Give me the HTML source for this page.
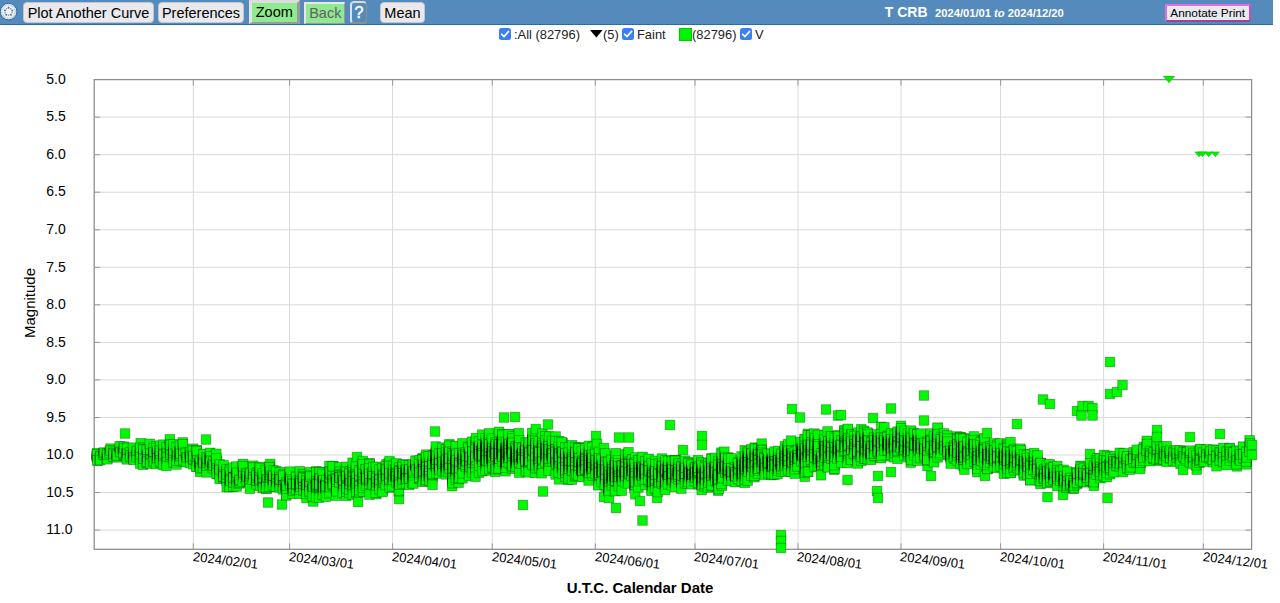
<!DOCTYPE html>
<html><head><meta charset="utf-8">
<style>
html,body{margin:0;padding:0;background:#fff;width:1280px;height:603px;overflow:hidden;font-family:"Liberation Sans",sans-serif;position:relative}
#hdr{position:absolute;left:0;top:0;width:1273px;height:24px;background:#558bbc;border-bottom:1px solid #2070b0}
.btn{position:absolute;top:2px;height:19px;background:#e9e9ed;border:1px solid #c5c5ca;border-radius:4px;font-size:14.5px;line-height:20.5px;color:#000;text-align:center;white-space:nowrap}
.yl{position:absolute;left:46.3px;font-size:14px;line-height:17px;color:#000}
.xl{position:absolute;top:548.5px;font-size:13.1px;line-height:15px;color:#000;transform:rotate(7deg);transform-origin:0 0;white-space:nowrap}
#plot{position:absolute;left:0;top:0}
#m path{fill:rgba(0,0,0,0.9);stroke:none}
#m rect{width:9.6px;height:9.6px;fill:#00fa00;stroke:rgba(0,0,0,0.35);stroke-width:0.8}
.lg{position:absolute;top:27px;font-size:12.9px;line-height:15px;color:#222;white-space:nowrap}
.cb{position:absolute;top:28.3px;width:12px;height:12px}
.cb svg{display:block}
</style></head><body>
<div id="hdr"></div>
<svg style="position:absolute;left:0;top:3px" width="18" height="18" viewBox="0 0 18 18"><circle cx="8.6" cy="8.6" r="8.3" fill="#f2f5f8" stroke="#2f66a0" stroke-width="1"/><circle cx="8.6" cy="8.6" r="6.6" fill="none" stroke="#a8c0d8" stroke-width="1.4" stroke-dasharray="0.9 0.7"/><ellipse cx="8.60" cy="4.70" rx="1" ry="1" fill="#3f78b0"/><circle cx="10.72" cy="5.69" r="0.8" fill="#9a8a7a"/><ellipse cx="12.31" cy="7.39" rx="1" ry="1" fill="#3f78b0"/><circle cx="12.02" cy="9.71" r="0.8" fill="#9a8a7a"/><ellipse cx="10.89" cy="11.76" rx="1" ry="1" fill="#3f78b0"/><circle cx="8.60" cy="12.20" r="0.8" fill="#9a8a7a"/><ellipse cx="6.31" cy="11.76" rx="1" ry="1" fill="#3f78b0"/><circle cx="5.18" cy="9.71" r="0.8" fill="#9a8a7a"/><ellipse cx="4.89" cy="7.39" rx="1" ry="1" fill="#3f78b0"/><circle cx="6.48" cy="5.69" r="0.8" fill="#9a8a7a"/></svg>
<div class="btn" style="left:23px;top:2px;width:129px">Plot Another Curve</div>
<div class="btn" style="left:158px;width:84px">Preferences</div>
<div class="btn" style="left:249px;top:0;height:18.5px;width:44.6px;border-radius:0;background:#8eea8e;border-style:solid;border-width:3.5px 3px 2.8px 3.5px;border-color:#dcdcdc #9a9a9a #9a9a9a #e4e4e4;line-height:19.1px">Zoom</div>
<div class="btn" style="left:303.8px;top:1.7px;height:19.7px;width:38.5px;border-radius:0;background:#8eea8e;color:#6a5a6a;border-style:solid;border-width:2px 1.4px 1.4px 2px;border-color:#e8e8e8 #9a9a9a #9a9a9a #e8e8e8;line-height:19.5px;text-indent:0.5px">Back</div>
<div class="btn" style="left:349.7px;top:0.5px;height:19px;width:14.5px;border-radius:4px;background:#558bbc;color:#fff;border-style:solid;border-width:2px 1.7px 2px 2.3px;border-color:#d8d8d8 #8f8f8f #8f8f8f #e0e0e0;line-height:19.5px;font-weight:normal;font-size:16px;-webkit-text-stroke:0.5px #fff">?</div>
<div class="btn" style="left:380px;width:43px">Mean</div>
<div style="position:absolute;left:884.8px;top:4.3px;color:#fff;font-weight:bold;font-size:14px;line-height:17px;white-space:nowrap">T CRB</div>
<div style="position:absolute;left:935px;top:6.4px;color:#fff;font-weight:bold;font-size:11.2px;line-height:14px;white-space:nowrap">2024/01/01 <i>to</i> 2024/12/20</div>
<div class="btn" style="left:1165px;top:3.8px;height:14.1px;width:81.5px;border-radius:0;border:2px solid #e070e0;border-bottom-color:#a040a0;border-right-color:#c050c0;font-size:11.8px;line-height:15px">Annotate Print</div>
<div class="cb" style="left:499px"><svg width="12" height="12" viewBox="0 0 12 12"><rect x="0" y="0" width="12" height="12" rx="2.5" fill="#3b7ff5"/><path d="M2.6 6.2L5 8.6L9.6 3.4" fill="none" stroke="#fff" stroke-width="1.6" stroke-linecap="round" stroke-linejoin="round"/></svg></div>
<div class="lg" style="left:514px">:All (82796)</div>
<svg style="position:absolute;left:590px;top:30px" width="13" height="8"><path d="M0 0H12.6L6.3 7.5Z" fill="#000"/></svg>
<div class="lg" style="left:603px">(5)</div>
<div class="cb" style="left:622px"><svg width="12" height="12" viewBox="0 0 12 12"><rect x="0" y="0" width="12" height="12" rx="2.5" fill="#3b7ff5"/><path d="M2.6 6.2L5 8.6L9.6 3.4" fill="none" stroke="#fff" stroke-width="1.6" stroke-linecap="round" stroke-linejoin="round"/></svg></div>
<div class="lg" style="left:637px">Faint</div>
<div style="position:absolute;left:679px;top:28px;width:13.2px;height:12.6px;background:#00f400;box-shadow:inset 0 0 0 0.6px rgba(0,0,0,0.3)"></div>
<div class="lg" style="left:692px">(82796)</div>
<div class="cb" style="left:740px"><svg width="12" height="12" viewBox="0 0 12 12"><rect x="0" y="0" width="12" height="12" rx="2.5" fill="#3b7ff5"/><path d="M2.6 6.2L5 8.6L9.6 3.4" fill="none" stroke="#fff" stroke-width="1.6" stroke-linecap="round" stroke-linejoin="round"/></svg></div>
<div class="lg" style="left:755px">V</div>
<svg id="plot" width="1280" height="603">
<line x1="94.2" y1="117.1" x2="1251.6" y2="117.1" stroke="#dadada"/>
<line x1="94.2" y1="154.7" x2="1251.6" y2="154.7" stroke="#dadada"/>
<line x1="94.2" y1="192.2" x2="1251.6" y2="192.2" stroke="#dadada"/>
<line x1="94.2" y1="229.8" x2="1251.6" y2="229.8" stroke="#dadada"/>
<line x1="94.2" y1="267.3" x2="1251.6" y2="267.3" stroke="#dadada"/>
<line x1="94.2" y1="304.8" x2="1251.6" y2="304.8" stroke="#dadada"/>
<line x1="94.2" y1="342.4" x2="1251.6" y2="342.4" stroke="#dadada"/>
<line x1="94.2" y1="379.9" x2="1251.6" y2="379.9" stroke="#dadada"/>
<line x1="94.2" y1="417.5" x2="1251.6" y2="417.5" stroke="#dadada"/>
<line x1="94.2" y1="455.0" x2="1251.6" y2="455.0" stroke="#dadada"/>
<line x1="94.2" y1="492.5" x2="1251.6" y2="492.5" stroke="#dadada"/>
<line x1="94.2" y1="530.1" x2="1251.6" y2="530.1" stroke="#dadada"/>
<line x1="193.3" y1="79.6" x2="193.3" y2="549.3" stroke="#dadada"/>
<line x1="289.6" y1="79.6" x2="289.6" y2="549.3" stroke="#dadada"/>
<line x1="392.6" y1="79.6" x2="392.6" y2="549.3" stroke="#dadada"/>
<line x1="492.3" y1="79.6" x2="492.3" y2="549.3" stroke="#dadada"/>
<line x1="595.3" y1="79.6" x2="595.3" y2="549.3" stroke="#dadada"/>
<line x1="695.0" y1="79.6" x2="695.0" y2="549.3" stroke="#dadada"/>
<line x1="798.0" y1="79.6" x2="798.0" y2="549.3" stroke="#dadada"/>
<line x1="901.0" y1="79.6" x2="901.0" y2="549.3" stroke="#dadada"/>
<line x1="1000.6" y1="79.6" x2="1000.6" y2="549.3" stroke="#dadada"/>
<line x1="1103.6" y1="79.6" x2="1103.6" y2="549.3" stroke="#dadada"/>
<line x1="1203.3" y1="79.6" x2="1203.3" y2="549.3" stroke="#dadada"/>
<line x1="94.2" y1="117.1" x2="100.2" y2="117.1" stroke="#999"/>
<line x1="1245.6" y1="117.1" x2="1251.6" y2="117.1" stroke="#999"/>
<line x1="94.2" y1="154.7" x2="100.2" y2="154.7" stroke="#999"/>
<line x1="1245.6" y1="154.7" x2="1251.6" y2="154.7" stroke="#999"/>
<line x1="94.2" y1="192.2" x2="100.2" y2="192.2" stroke="#999"/>
<line x1="1245.6" y1="192.2" x2="1251.6" y2="192.2" stroke="#999"/>
<line x1="94.2" y1="229.8" x2="100.2" y2="229.8" stroke="#999"/>
<line x1="1245.6" y1="229.8" x2="1251.6" y2="229.8" stroke="#999"/>
<line x1="94.2" y1="267.3" x2="100.2" y2="267.3" stroke="#999"/>
<line x1="1245.6" y1="267.3" x2="1251.6" y2="267.3" stroke="#999"/>
<line x1="94.2" y1="304.8" x2="100.2" y2="304.8" stroke="#999"/>
<line x1="1245.6" y1="304.8" x2="1251.6" y2="304.8" stroke="#999"/>
<line x1="94.2" y1="342.4" x2="100.2" y2="342.4" stroke="#999"/>
<line x1="1245.6" y1="342.4" x2="1251.6" y2="342.4" stroke="#999"/>
<line x1="94.2" y1="379.9" x2="100.2" y2="379.9" stroke="#999"/>
<line x1="1245.6" y1="379.9" x2="1251.6" y2="379.9" stroke="#999"/>
<line x1="94.2" y1="417.5" x2="100.2" y2="417.5" stroke="#999"/>
<line x1="1245.6" y1="417.5" x2="1251.6" y2="417.5" stroke="#999"/>
<line x1="94.2" y1="455.0" x2="100.2" y2="455.0" stroke="#999"/>
<line x1="1245.6" y1="455.0" x2="1251.6" y2="455.0" stroke="#999"/>
<line x1="94.2" y1="492.5" x2="100.2" y2="492.5" stroke="#999"/>
<line x1="1245.6" y1="492.5" x2="1251.6" y2="492.5" stroke="#999"/>
<line x1="94.2" y1="530.1" x2="100.2" y2="530.1" stroke="#999"/>
<line x1="1245.6" y1="530.1" x2="1251.6" y2="530.1" stroke="#999"/>
<line x1="193.3" y1="79.6" x2="193.3" y2="85.6" stroke="#999"/>
<line x1="193.3" y1="543.3" x2="193.3" y2="549.3" stroke="#999"/>
<line x1="289.6" y1="79.6" x2="289.6" y2="85.6" stroke="#999"/>
<line x1="289.6" y1="543.3" x2="289.6" y2="549.3" stroke="#999"/>
<line x1="392.6" y1="79.6" x2="392.6" y2="85.6" stroke="#999"/>
<line x1="392.6" y1="543.3" x2="392.6" y2="549.3" stroke="#999"/>
<line x1="492.3" y1="79.6" x2="492.3" y2="85.6" stroke="#999"/>
<line x1="492.3" y1="543.3" x2="492.3" y2="549.3" stroke="#999"/>
<line x1="595.3" y1="79.6" x2="595.3" y2="85.6" stroke="#999"/>
<line x1="595.3" y1="543.3" x2="595.3" y2="549.3" stroke="#999"/>
<line x1="695.0" y1="79.6" x2="695.0" y2="85.6" stroke="#999"/>
<line x1="695.0" y1="543.3" x2="695.0" y2="549.3" stroke="#999"/>
<line x1="798.0" y1="79.6" x2="798.0" y2="85.6" stroke="#999"/>
<line x1="798.0" y1="543.3" x2="798.0" y2="549.3" stroke="#999"/>
<line x1="901.0" y1="79.6" x2="901.0" y2="85.6" stroke="#999"/>
<line x1="901.0" y1="543.3" x2="901.0" y2="549.3" stroke="#999"/>
<line x1="1000.6" y1="79.6" x2="1000.6" y2="85.6" stroke="#999"/>
<line x1="1000.6" y1="543.3" x2="1000.6" y2="549.3" stroke="#999"/>
<line x1="1103.6" y1="79.6" x2="1103.6" y2="85.6" stroke="#999"/>
<line x1="1103.6" y1="543.3" x2="1103.6" y2="549.3" stroke="#999"/>
<line x1="1203.3" y1="79.6" x2="1203.3" y2="85.6" stroke="#999"/>
<line x1="1203.3" y1="543.3" x2="1203.3" y2="549.3" stroke="#999"/>
<rect x="94.2" y="79.6" width="1157.4" height="469.7" fill="none" stroke="#8f8f8f" stroke-width="1.3"/>
<g id="m"><rect x="92.2" y="448.4" width="9.6" height="9.6"/><rect x="91.8" y="450.7" width="9.6" height="9.6"/><rect x="92.2" y="452.5" width="9.6" height="9.6"/><rect x="92.3" y="449.4" width="9.6" height="9.6"/><rect x="92.9" y="456.0" width="9.6" height="9.6"/><rect x="92.6" y="455.3" width="9.6" height="9.6"/><path d="M91.8 452.2L91.95 454.3V459.5L91.8 461.7L91.65 459.5V454.3Z"/><path d="M91.8 453.9L91.94 455.1V458.0L91.8 459.2L91.66 458.0V455.1Z"/><rect x="95.5" y="453.8" width="9.6" height="9.6"/><rect x="95.0" y="453.5" width="9.6" height="9.6"/><rect x="95.6" y="451.2" width="9.6" height="9.6"/><rect x="95.4" y="454.0" width="9.6" height="9.6"/><rect x="95.6" y="451.9" width="9.6" height="9.6"/><rect x="95.2" y="455.3" width="9.6" height="9.6"/><path d="M95.5 455.0L95.62 456.4V459.8L95.5 461.1L95.35 459.8V456.4Z"/><path d="M95.5 455.4L95.61 456.7V459.8L95.5 461.1L95.36 459.8V456.7Z"/><rect x="98.8" y="448.8" width="9.6" height="9.6"/><rect x="99.2" y="448.3" width="9.6" height="9.6"/><rect x="99.0" y="449.7" width="9.6" height="9.6"/><rect x="98.4" y="448.2" width="9.6" height="9.6"/><rect x="98.9" y="450.1" width="9.6" height="9.6"/><rect x="99.4" y="447.8" width="9.6" height="9.6"/><path d="M98.8 451.6L99.00 452.6V455.0L98.8 455.9L98.63 455.0V452.6Z"/><path d="M98.8 451.6L98.99 452.6V455.0L98.8 455.9L98.64 455.0V452.6Z"/><rect x="103.0" y="450.3" width="9.6" height="9.6"/><rect x="102.1" y="448.7" width="9.6" height="9.6"/><rect x="102.2" y="452.3" width="9.6" height="9.6"/><rect x="102.0" y="454.0" width="9.6" height="9.6"/><rect x="102.6" y="454.5" width="9.6" height="9.6"/><rect x="102.3" y="449.9" width="9.6" height="9.6"/><path d="M102.5 452.5L102.73 454.3V458.6L102.5 460.3L102.28 458.6V454.3Z"/><path d="M102.5 453.3L102.72 454.6V458.0L102.5 459.4L102.29 458.0V454.6Z"/><rect x="105.7" y="446.1" width="9.6" height="9.6"/><rect x="105.8" y="443.8" width="9.6" height="9.6"/><rect x="105.3" y="448.1" width="9.6" height="9.6"/><rect x="105.0" y="446.5" width="9.6" height="9.6"/><rect x="104.9" y="448.4" width="9.6" height="9.6"/><rect x="105.6" y="445.7" width="9.6" height="9.6"/><path d="M105.8 447.6L106.05 449.1V452.7L105.8 454.2L105.65 452.7V449.1Z"/><path d="M105.8 449.2L106.03 450.3V453.1L105.8 454.2L105.66 453.1V450.3Z"/><rect x="108.8" y="452.4" width="9.6" height="9.6"/><rect x="108.7" y="449.6" width="9.6" height="9.6"/><rect x="108.5" y="446.9" width="9.6" height="9.6"/><rect x="108.8" y="451.7" width="9.6" height="9.6"/><rect x="109.0" y="448.2" width="9.6" height="9.6"/><rect x="108.8" y="449.0" width="9.6" height="9.6"/><path d="M108.8 450.7L108.97 452.4V456.5L108.8 458.2L108.67 456.5V452.4Z"/><path d="M108.8 451.4L108.96 452.7V455.8L108.8 457.1L108.68 455.8V452.7Z"/><rect x="111.6" y="450.2" width="9.6" height="9.6"/><rect x="112.1" y="452.5" width="9.6" height="9.6"/><rect x="112.1" y="450.8" width="9.6" height="9.6"/><rect x="111.8" y="450.0" width="9.6" height="9.6"/><rect x="112.0" y="449.3" width="9.6" height="9.6"/><rect x="112.4" y="450.7" width="9.6" height="9.6"/><path d="M111.7 453.1L111.92 454.3V457.2L111.7 458.3L111.52 457.2V454.3Z"/><path d="M111.7 453.1L111.91 454.3V457.2L111.7 458.3L111.53 457.2V454.3Z"/><rect x="115.7" y="444.4" width="9.6" height="9.6"/><rect x="115.5" y="442.0" width="9.6" height="9.6"/><rect x="115.4" y="443.5" width="9.6" height="9.6"/><rect x="115.1" y="445.4" width="9.6" height="9.6"/><rect x="114.9" y="441.5" width="9.6" height="9.6"/><rect x="115.5" y="447.2" width="9.6" height="9.6"/><path d="M115.0 445.3L115.17 447.1V451.3L115.0 453.0L114.85 451.3V447.1Z"/><path d="M115.0 446.9L115.16 448.3V451.6L115.0 453.0L114.86 451.6V448.3Z"/><rect x="119.3" y="449.8" width="9.6" height="9.6"/><rect x="119.2" y="445.3" width="9.6" height="9.6"/><rect x="118.8" y="441.8" width="9.6" height="9.6"/><rect x="118.9" y="449.2" width="9.6" height="9.6"/><rect x="118.6" y="448.1" width="9.6" height="9.6"/><rect x="119.5" y="443.3" width="9.6" height="9.6"/><path d="M118.1 445.6L118.34 447.8V453.4L118.1 455.6L117.85 453.4V447.8Z"/><path d="M118.1 446.4L118.33 448.5V453.6L118.1 455.6L117.86 453.6V448.5Z"/><rect x="120.2" y="428.7" width="9.6" height="9.6"/><rect x="121.9" y="453.6" width="9.6" height="9.6"/><rect x="122.3" y="445.5" width="9.6" height="9.6"/><rect x="122.3" y="443.0" width="9.6" height="9.6"/><rect x="122.1" y="449.3" width="9.6" height="9.6"/><rect x="122.5" y="449.1" width="9.6" height="9.6"/><rect x="122.1" y="454.6" width="9.6" height="9.6"/><path d="M122.0 446.8L122.26 449.5V456.3L122.0 459.1L121.80 456.3V449.5Z"/><path d="M122.0 448.0L122.25 450.5V456.6L122.0 459.1L121.82 456.6V450.5Z"/><rect x="125.9" y="449.7" width="9.6" height="9.6"/><rect x="125.4" y="452.3" width="9.6" height="9.6"/><rect x="125.3" y="450.9" width="9.6" height="9.6"/><rect x="125.3" y="451.9" width="9.6" height="9.6"/><rect x="125.2" y="447.6" width="9.6" height="9.6"/><rect x="125.3" y="450.4" width="9.6" height="9.6"/><path d="M125.5 451.4L125.65 452.9V456.6L125.5 458.1L125.31 456.6V452.9Z"/><path d="M125.5 451.4L125.64 452.5V455.3L125.5 456.5L125.33 455.3V452.5Z"/><rect x="128.6" y="454.1" width="9.6" height="9.6"/><rect x="128.7" y="451.8" width="9.6" height="9.6"/><rect x="128.9" y="448.9" width="9.6" height="9.6"/><rect x="128.6" y="453.0" width="9.6" height="9.6"/><rect x="129.0" y="455.1" width="9.6" height="9.6"/><rect x="128.2" y="442.9" width="9.6" height="9.6"/><path d="M128.1 446.7L128.37 449.9V457.7L128.1 460.9L127.92 457.7V449.9Z"/><path d="M128.1 449.3L128.35 451.8V457.9L128.1 460.4L127.93 457.9V451.8Z"/><rect x="131.7" y="450.2" width="9.6" height="9.6"/><rect x="131.9" y="446.4" width="9.6" height="9.6"/><rect x="131.8" y="450.0" width="9.6" height="9.6"/><rect x="132.2" y="447.0" width="9.6" height="9.6"/><rect x="131.7" y="452.4" width="9.6" height="9.6"/><rect x="132.2" y="446.0" width="9.6" height="9.6"/><path d="M131.7 449.8L131.80 451.7V456.3L131.7 458.2L131.50 456.3V451.7Z"/><path d="M131.7 450.1L131.79 451.9V456.4L131.7 458.2L131.51 456.4V451.9Z"/><rect x="135.9" y="438.4" width="9.6" height="9.6"/><rect x="135.2" y="452.4" width="9.6" height="9.6"/><rect x="135.1" y="446.5" width="9.6" height="9.6"/><rect x="134.9" y="450.4" width="9.6" height="9.6"/><rect x="135.5" y="458.9" width="9.6" height="9.6"/><rect x="135.3" y="443.1" width="9.6" height="9.6"/><path d="M135.3 444.4L135.49 448.6V458.9L135.3 463.2L135.14 458.9V448.6Z"/><path d="M135.3 448.8L135.47 450.9V456.2L135.3 458.4L135.15 456.2V450.9Z"/><rect x="138.9" y="449.5" width="9.6" height="9.6"/><rect x="138.6" y="452.2" width="9.6" height="9.6"/><rect x="138.2" y="460.0" width="9.6" height="9.6"/><rect x="138.8" y="443.0" width="9.6" height="9.6"/><rect x="138.6" y="444.6" width="9.6" height="9.6"/><rect x="138.5" y="454.0" width="9.6" height="9.6"/><path d="M138.7 446.8L138.86 451.1V461.5L138.7 465.8L138.56 461.5V451.1Z"/><path d="M138.7 449.7L138.85 452.3V458.5L138.7 461.0L138.57 458.5V452.3Z"/><rect x="142.0" y="458.3" width="9.6" height="9.6"/><rect x="142.3" y="449.2" width="9.6" height="9.6"/><rect x="141.9" y="444.8" width="9.6" height="9.6"/><rect x="142.1" y="457.5" width="9.6" height="9.6"/><rect x="142.0" y="444.9" width="9.6" height="9.6"/><rect x="142.3" y="456.9" width="9.6" height="9.6"/><path d="M142.1 448.6L142.37 452.0V460.4L142.1 463.9L141.91 460.4V452.0Z"/><path d="M142.1 449.0L142.36 452.4V460.5L142.1 463.9L141.93 460.5V452.4Z"/><rect x="145.5" y="445.0" width="9.6" height="9.6"/><rect x="145.0" y="439.0" width="9.6" height="9.6"/><rect x="146.0" y="454.9" width="9.6" height="9.6"/><rect x="145.2" y="455.8" width="9.6" height="9.6"/><rect x="145.4" y="458.2" width="9.6" height="9.6"/><rect x="145.6" y="458.7" width="9.6" height="9.6"/><path d="M145.5 443.2L145.67 448.0V459.7L145.5 464.5L145.24 459.7V448.0Z"/><path d="M145.5 449.8L145.65 452.2V458.0L145.5 460.4L145.26 458.0V452.2Z"/><rect x="148.6" y="448.6" width="9.6" height="9.6"/><rect x="148.6" y="452.1" width="9.6" height="9.6"/><rect x="148.8" y="443.2" width="9.6" height="9.6"/><rect x="148.9" y="447.6" width="9.6" height="9.6"/><rect x="148.2" y="456.7" width="9.6" height="9.6"/><rect x="149.1" y="457.0" width="9.6" height="9.6"/><path d="M148.5 447.0L148.74 449.9V456.9L148.5 459.8L148.32 456.9V449.9Z"/><path d="M148.5 447.0L148.73 449.1V454.4L148.5 456.5L148.33 454.4V449.1Z"/><rect x="152.1" y="444.2" width="9.6" height="9.6"/><rect x="151.4" y="441.8" width="9.6" height="9.6"/><rect x="152.3" y="451.7" width="9.6" height="9.6"/><rect x="151.4" y="459.3" width="9.6" height="9.6"/><rect x="152.2" y="453.3" width="9.6" height="9.6"/><rect x="151.4" y="443.7" width="9.6" height="9.6"/><path d="M152.2 445.6L152.49 450.0V460.7L152.2 465.1L151.94 460.7V450.0Z"/><path d="M152.2 445.6L152.47 449.0V457.1L152.2 460.4L151.96 457.1V449.0Z"/><rect x="155.1" y="453.3" width="9.6" height="9.6"/><rect x="155.4" y="457.6" width="9.6" height="9.6"/><rect x="155.5" y="440.7" width="9.6" height="9.6"/><rect x="155.2" y="456.4" width="9.6" height="9.6"/><rect x="155.5" y="448.8" width="9.6" height="9.6"/><rect x="155.1" y="446.0" width="9.6" height="9.6"/><path d="M154.9 444.5L155.09 448.8V459.2L154.9 463.4L154.68 459.2V448.8Z"/><path d="M154.9 449.7L155.07 451.9V457.2L154.9 459.4L154.69 457.2V451.9Z"/><rect x="158.2" y="455.3" width="9.6" height="9.6"/><rect x="158.6" y="442.3" width="9.6" height="9.6"/><rect x="158.6" y="460.2" width="9.6" height="9.6"/><rect x="158.8" y="447.8" width="9.6" height="9.6"/><rect x="158.7" y="439.8" width="9.6" height="9.6"/><rect x="158.8" y="449.2" width="9.6" height="9.6"/><path d="M158.4 445.6L158.67 449.7V459.5L158.4 463.6L158.09 459.5V449.7Z"/><path d="M158.4 450.8L158.65 453.4V459.7L158.4 462.3L158.11 459.7V453.4Z"/><rect x="161.7" y="442.3" width="9.6" height="9.6"/><rect x="161.5" y="449.0" width="9.6" height="9.6"/><rect x="162.2" y="455.2" width="9.6" height="9.6"/><rect x="161.9" y="452.1" width="9.6" height="9.6"/><rect x="162.1" y="457.3" width="9.6" height="9.6"/><rect x="161.6" y="461.2" width="9.6" height="9.6"/><path d="M162.0 446.1L162.20 450.8V462.3L162.0 467.0L161.81 462.3V450.8Z"/><path d="M162.0 446.1L162.18 448.3V453.7L162.0 455.9L161.83 453.7V448.3Z"/><rect x="165.0" y="434.5" width="9.6" height="9.6"/><rect x="165.5" y="452.2" width="9.6" height="9.6"/><rect x="165.2" y="440.1" width="9.6" height="9.6"/><rect x="165.4" y="448.5" width="9.6" height="9.6"/><rect x="165.8" y="450.2" width="9.6" height="9.6"/><rect x="165.3" y="440.1" width="9.6" height="9.6"/><path d="M165.2 439.0L165.40 443.3V453.8L165.2 458.0L164.94 453.8V443.3Z"/><path d="M165.2 447.6L165.38 450.0V455.7L165.2 458.0L164.95 455.7V450.0Z"/><rect x="168.6" y="454.5" width="9.6" height="9.6"/><rect x="168.0" y="452.6" width="9.6" height="9.6"/><rect x="168.3" y="443.7" width="9.6" height="9.6"/><rect x="168.6" y="445.7" width="9.6" height="9.6"/><rect x="168.5" y="439.5" width="9.6" height="9.6"/><rect x="168.7" y="457.7" width="9.6" height="9.6"/><path d="M168.5 443.3L168.68 447.8V459.0L168.5 463.5L168.27 459.0V447.8Z"/><path d="M168.5 446.0L168.67 449.6V458.4L168.5 462.0L168.29 458.4V449.6Z"/><rect x="172.0" y="451.8" width="9.6" height="9.6"/><rect x="172.1" y="455.4" width="9.6" height="9.6"/><rect x="171.7" y="448.6" width="9.6" height="9.6"/><rect x="171.7" y="442.2" width="9.6" height="9.6"/><rect x="171.7" y="459.7" width="9.6" height="9.6"/><rect x="171.6" y="456.2" width="9.6" height="9.6"/><path d="M172.3 447.4L172.53 450.8V459.0L172.3 462.3L172.07 459.0V450.8Z"/><path d="M172.3 451.2L172.51 453.4V458.8L172.3 461.0L172.09 458.8V453.4Z"/><rect x="174.6" y="454.1" width="9.6" height="9.6"/><rect x="174.7" y="455.9" width="9.6" height="9.6"/><rect x="175.3" y="446.5" width="9.6" height="9.6"/><rect x="175.4" y="451.3" width="9.6" height="9.6"/><rect x="175.0" y="440.9" width="9.6" height="9.6"/><rect x="175.6" y="448.9" width="9.6" height="9.6"/><path d="M175.0 444.7L175.23 448.5V457.8L175.0 461.7L174.74 457.8V448.5Z"/><path d="M175.0 445.0L175.22 448.3V456.3L175.0 459.5L174.76 456.3V448.3Z"/><rect x="178.0" y="437.6" width="9.6" height="9.6"/><rect x="178.7" y="456.9" width="9.6" height="9.6"/><rect x="178.5" y="453.2" width="9.6" height="9.6"/><rect x="178.6" y="448.4" width="9.6" height="9.6"/><rect x="178.2" y="439.5" width="9.6" height="9.6"/><rect x="178.4" y="455.5" width="9.6" height="9.6"/><path d="M178.7 441.4L178.88 446.2V457.9L178.7 462.7L178.49 457.9V446.2Z"/><path d="M178.7 444.9L178.86 448.0V455.4L178.7 458.4L178.50 455.4V448.0Z"/><rect x="181.7" y="450.3" width="9.6" height="9.6"/><rect x="181.3" y="448.0" width="9.6" height="9.6"/><rect x="181.7" y="457.4" width="9.6" height="9.6"/><rect x="181.6" y="448.3" width="9.6" height="9.6"/><rect x="181.1" y="448.1" width="9.6" height="9.6"/><rect x="182.3" y="452.5" width="9.6" height="9.6"/><path d="M181.5 451.8L181.69 454.4V460.6L181.5 463.2L181.32 460.6V454.4Z"/><path d="M181.5 452.3L181.68 454.7V460.7L181.5 463.2L181.33 460.7V454.7Z"/><rect x="185.3" y="449.2" width="9.6" height="9.6"/><rect x="184.9" y="447.2" width="9.6" height="9.6"/><rect x="185.5" y="449.0" width="9.6" height="9.6"/><rect x="185.1" y="451.0" width="9.6" height="9.6"/><rect x="185.3" y="458.3" width="9.6" height="9.6"/><rect x="185.3" y="452.2" width="9.6" height="9.6"/><path d="M185.3 451.0L185.63 454.0V461.2L185.3 464.1L184.99 461.2V454.0Z"/><path d="M185.3 451.2L185.61 453.9V460.4L185.3 463.1L185.01 460.4V453.9Z"/><rect x="188.5" y="459.5" width="9.6" height="9.6"/><rect x="188.3" y="454.6" width="9.6" height="9.6"/><rect x="188.7" y="454.4" width="9.6" height="9.6"/><rect x="188.3" y="443.9" width="9.6" height="9.6"/><rect x="187.9" y="445.9" width="9.6" height="9.6"/><rect x="188.1" y="451.3" width="9.6" height="9.6"/><path d="M188.3 449.1L188.49 452.7V461.6L188.3 465.3L188.11 461.6V452.7Z"/><path d="M188.3 451.6L188.48 453.9V459.4L188.3 461.7L188.12 459.4V453.9Z"/><rect x="192.0" y="462.0" width="9.6" height="9.6"/><rect x="192.0" y="445.5" width="9.6" height="9.6"/><rect x="191.7" y="446.2" width="9.6" height="9.6"/><rect x="191.3" y="461.9" width="9.6" height="9.6"/><rect x="192.3" y="449.0" width="9.6" height="9.6"/><rect x="191.9" y="446.2" width="9.6" height="9.6"/><path d="M192.0 449.3L192.26 453.3V463.3L192.0 467.3L191.82 463.3V453.3Z"/><path d="M192.0 452.5L192.25 454.8V460.3L192.0 462.6L191.84 460.3V454.8Z"/><rect x="195.2" y="455.1" width="9.6" height="9.6"/><rect x="194.9" y="458.9" width="9.6" height="9.6"/><rect x="194.8" y="460.4" width="9.6" height="9.6"/><rect x="195.1" y="456.1" width="9.6" height="9.6"/><rect x="195.3" y="467.1" width="9.6" height="9.6"/><rect x="195.5" y="463.4" width="9.6" height="9.6"/><path d="M194.9 458.9L195.24 461.5V468.0L194.9 470.7L194.61 468.0V461.5Z"/><path d="M194.9 458.9L195.22 461.0V466.3L194.9 468.4L194.64 466.3V461.0Z"/><rect x="198.2" y="455.4" width="9.6" height="9.6"/><rect x="198.0" y="463.1" width="9.6" height="9.6"/><rect x="197.6" y="455.1" width="9.6" height="9.6"/><rect x="198.8" y="449.4" width="9.6" height="9.6"/><rect x="198.7" y="457.9" width="9.6" height="9.6"/><rect x="198.7" y="449.2" width="9.6" height="9.6"/><path d="M198.2 453.0L198.49 456.6V465.4L198.2 468.9L197.96 465.4V456.6Z"/><path d="M198.2 456.9L198.47 459.6V465.9L198.2 468.5L197.98 465.9V459.6Z"/><rect x="201.2" y="434.7" width="9.6" height="9.6"/><rect x="201.6" y="452.6" width="9.6" height="9.6"/><rect x="201.8" y="467.6" width="9.6" height="9.6"/><rect x="201.9" y="456.2" width="9.6" height="9.6"/><rect x="201.5" y="460.8" width="9.6" height="9.6"/><rect x="202.1" y="457.9" width="9.6" height="9.6"/><rect x="202.2" y="454.1" width="9.6" height="9.6"/><path d="M201.8 456.4L202.15 460.2V469.5L201.8 473.3L201.55 469.5V460.2Z"/><path d="M201.8 456.4L202.13 459.0V465.5L201.8 468.1L201.57 465.5V459.0Z"/><rect x="204.9" y="459.8" width="9.6" height="9.6"/><rect x="205.4" y="448.0" width="9.6" height="9.6"/><rect x="205.5" y="453.9" width="9.6" height="9.6"/><rect x="205.1" y="451.5" width="9.6" height="9.6"/><rect x="204.6" y="455.5" width="9.6" height="9.6"/><rect x="205.3" y="457.0" width="9.6" height="9.6"/><path d="M205.2 451.8L205.52 454.9V462.5L205.2 465.6L204.87 462.5V454.9Z"/><path d="M205.2 452.4L205.50 455.4V462.6L205.2 465.6L204.89 462.6V455.4Z"/><rect x="207.9" y="463.4" width="9.6" height="9.6"/><rect x="208.4" y="457.0" width="9.6" height="9.6"/><rect x="208.2" y="459.2" width="9.6" height="9.6"/><rect x="208.3" y="457.0" width="9.6" height="9.6"/><rect x="208.2" y="459.7" width="9.6" height="9.6"/><rect x="208.9" y="460.8" width="9.6" height="9.6"/><path d="M207.9 460.8L208.17 462.7V467.3L207.9 469.2L207.59 467.3V462.7Z"/><path d="M207.9 460.8L208.15 462.7V467.3L207.9 469.2L207.61 467.3V462.7Z"/><rect x="211.5" y="449.0" width="9.6" height="9.6"/><rect x="211.6" y="458.0" width="9.6" height="9.6"/><rect x="212.3" y="456.1" width="9.6" height="9.6"/><rect x="212.1" y="469.2" width="9.6" height="9.6"/><rect x="211.8" y="468.8" width="9.6" height="9.6"/><rect x="211.6" y="453.7" width="9.6" height="9.6"/><path d="M211.8 457.7L211.99 461.3V470.1L211.8 473.7L211.51 470.1V461.3Z"/><path d="M211.8 459.1L211.98 462.1V469.2L211.8 472.1L211.53 469.2V462.1Z"/><rect x="214.9" y="463.9" width="9.6" height="9.6"/><rect x="214.9" y="460.9" width="9.6" height="9.6"/><rect x="215.0" y="459.6" width="9.6" height="9.6"/><rect x="214.8" y="468.9" width="9.6" height="9.6"/><rect x="214.8" y="465.0" width="9.6" height="9.6"/><rect x="214.8" y="474.1" width="9.6" height="9.6"/><path d="M214.7 463.4L214.83 466.3V473.3L214.7 476.2L214.48 473.3V466.3Z"/><path d="M214.7 463.4L214.82 466.3V473.3L214.7 476.2L214.49 473.3V466.3Z"/><rect x="218.5" y="473.4" width="9.6" height="9.6"/><rect x="218.7" y="469.2" width="9.6" height="9.6"/><rect x="218.5" y="471.7" width="9.6" height="9.6"/><rect x="218.2" y="468.2" width="9.6" height="9.6"/><rect x="218.7" y="471.8" width="9.6" height="9.6"/><rect x="218.8" y="460.3" width="9.6" height="9.6"/><path d="M218.4 464.1L218.66 467.5V475.8L218.4 479.2L218.20 475.8V467.5Z"/><path d="M218.4 464.5L218.65 467.8V475.9L218.4 479.2L218.21 475.9V467.8Z"/><rect x="221.9" y="482.3" width="9.6" height="9.6"/><rect x="221.3" y="467.7" width="9.6" height="9.6"/><rect x="221.8" y="472.9" width="9.6" height="9.6"/><rect x="221.7" y="465.8" width="9.6" height="9.6"/><rect x="221.9" y="464.4" width="9.6" height="9.6"/><rect x="221.9" y="469.7" width="9.6" height="9.6"/><path d="M221.4 468.2L221.63 472.7V483.6L221.4 488.1L221.22 483.6V472.7Z"/><path d="M221.4 468.2L221.61 471.6V479.9L221.4 483.3L221.24 479.9V471.6Z"/><rect x="225.2" y="464.9" width="9.6" height="9.6"/><rect x="224.8" y="474.9" width="9.6" height="9.6"/><rect x="224.5" y="482.3" width="9.6" height="9.6"/><rect x="224.7" y="467.1" width="9.6" height="9.6"/><rect x="225.2" y="474.3" width="9.6" height="9.6"/><rect x="225.2" y="475.9" width="9.6" height="9.6"/><path d="M225.4 468.7L225.68 473.0V483.7L225.4 488.1L225.12 483.7V473.0Z"/><path d="M225.4 469.0L225.66 472.6V481.5L225.4 485.2L225.14 481.5V472.6Z"/><rect x="228.2" y="462.8" width="9.6" height="9.6"/><rect x="228.4" y="481.9" width="9.6" height="9.6"/><rect x="228.6" y="477.1" width="9.6" height="9.6"/><rect x="228.8" y="477.7" width="9.6" height="9.6"/><rect x="228.4" y="473.0" width="9.6" height="9.6"/><rect x="228.3" y="473.1" width="9.6" height="9.6"/><path d="M228.3 466.6L228.53 471.0V481.9L228.3 486.4L228.16 481.9V471.0Z"/><path d="M228.3 470.8L228.51 473.5V480.2L228.3 483.0L228.17 480.2V473.5Z"/><rect x="231.4" y="461.7" width="9.6" height="9.6"/><rect x="231.4" y="473.5" width="9.6" height="9.6"/><rect x="231.7" y="473.6" width="9.6" height="9.6"/><rect x="231.9" y="481.7" width="9.6" height="9.6"/><rect x="231.6" y="470.5" width="9.6" height="9.6"/><rect x="232.0" y="467.9" width="9.6" height="9.6"/><path d="M231.8 465.5L232.07 470.4V482.5L231.8 487.5L231.48 482.5V470.4Z"/><path d="M231.8 468.7L232.05 472.3V481.0L231.8 484.5L231.50 481.0V472.3Z"/><rect x="234.0" y="478.6" width="9.6" height="9.6"/><rect x="235.1" y="476.3" width="9.6" height="9.6"/><rect x="234.8" y="475.0" width="9.6" height="9.6"/><rect x="234.8" y="477.6" width="9.6" height="9.6"/><rect x="235.3" y="475.6" width="9.6" height="9.6"/><rect x="234.9" y="475.2" width="9.6" height="9.6"/><path d="M234.8 478.8L235.03 480.1V483.2L234.8 484.4L234.53 483.2V480.1Z"/><path d="M234.8 478.8L235.01 480.1V483.2L234.8 484.4L234.54 483.2V480.1Z"/><rect x="238.1" y="462.7" width="9.6" height="9.6"/><rect x="238.1" y="459.9" width="9.6" height="9.6"/><rect x="238.6" y="469.6" width="9.6" height="9.6"/><rect x="238.4" y="459.2" width="9.6" height="9.6"/><rect x="238.0" y="461.6" width="9.6" height="9.6"/><rect x="238.0" y="477.2" width="9.6" height="9.6"/><path d="M238.2 463.0L238.48 467.5V478.5L238.2 483.0L237.98 478.5V467.5Z"/><path d="M238.2 467.2L238.47 469.9V476.5L238.2 479.2L238.00 476.5V469.9Z"/><rect x="241.1" y="473.4" width="9.6" height="9.6"/><rect x="241.8" y="476.4" width="9.6" height="9.6"/><rect x="241.1" y="468.2" width="9.6" height="9.6"/><rect x="241.5" y="470.2" width="9.6" height="9.6"/><rect x="242.1" y="469.0" width="9.6" height="9.6"/><rect x="241.9" y="471.8" width="9.6" height="9.6"/><path d="M241.8 472.0L242.12 474.3V479.9L241.8 482.2L241.41 479.9V474.3Z"/><path d="M241.8 473.3L242.10 475.3V480.2L241.8 482.2L241.44 480.2V475.3Z"/><rect x="244.8" y="469.8" width="9.6" height="9.6"/><rect x="244.9" y="474.8" width="9.6" height="9.6"/><rect x="245.0" y="483.9" width="9.6" height="9.6"/><rect x="245.3" y="467.9" width="9.6" height="9.6"/><rect x="245.4" y="471.4" width="9.6" height="9.6"/><rect x="245.6" y="468.7" width="9.6" height="9.6"/><path d="M244.7 471.7L245.01 475.7V485.6L244.7 489.7L244.40 485.6V475.7Z"/><path d="M244.7 474.6L244.99 476.7V482.0L244.7 484.2L244.42 482.0V476.7Z"/><rect x="248.2" y="462.9" width="9.6" height="9.6"/><rect x="248.6" y="464.7" width="9.6" height="9.6"/><rect x="248.5" y="474.6" width="9.6" height="9.6"/><rect x="248.5" y="470.8" width="9.6" height="9.6"/><rect x="247.8" y="474.9" width="9.6" height="9.6"/><rect x="248.4" y="460.9" width="9.6" height="9.6"/><rect x="248.4" y="462.7" width="9.6" height="9.6"/><path d="M248.3 468.3L248.49 471.1V477.9L248.3 480.7L248.05 477.9V471.1Z"/><path d="M248.3 473.8L248.48 475.3V479.1L248.3 480.7L248.07 479.1V475.3Z"/><rect x="251.7" y="479.7" width="9.6" height="9.6"/><rect x="251.8" y="475.6" width="9.6" height="9.6"/><rect x="251.3" y="475.6" width="9.6" height="9.6"/><rect x="252.3" y="467.3" width="9.6" height="9.6"/><rect x="251.7" y="472.5" width="9.6" height="9.6"/><rect x="252.0" y="468.5" width="9.6" height="9.6"/><rect x="251.6" y="470.3" width="9.6" height="9.6"/><path d="M251.2 471.1L251.51 474.3V482.3L251.2 485.5L250.99 482.3V474.3Z"/><path d="M251.2 471.8L251.49 474.5V481.2L251.2 484.0L251.01 481.2V474.5Z"/><rect x="255.5" y="474.0" width="9.6" height="9.6"/><rect x="255.0" y="462.1" width="9.6" height="9.6"/><rect x="255.2" y="468.9" width="9.6" height="9.6"/><rect x="255.0" y="476.1" width="9.6" height="9.6"/><rect x="255.1" y="463.2" width="9.6" height="9.6"/><rect x="255.1" y="481.2" width="9.6" height="9.6"/><rect x="255.1" y="475.3" width="9.6" height="9.6"/><path d="M254.6 465.9L254.94 470.7V482.3L254.6 487.0L254.24 482.3V470.7Z"/><path d="M254.6 473.2L254.92 475.7V482.0L254.6 484.5L254.26 482.0V475.7Z"/><rect x="258.4" y="476.2" width="9.6" height="9.6"/><rect x="257.8" y="482.9" width="9.6" height="9.6"/><rect x="257.8" y="471.0" width="9.6" height="9.6"/><rect x="258.3" y="470.0" width="9.6" height="9.6"/><rect x="257.8" y="472.4" width="9.6" height="9.6"/><rect x="257.9" y="468.6" width="9.6" height="9.6"/><rect x="258.6" y="483.3" width="9.6" height="9.6"/><path d="M257.9 472.4L258.20 476.0V485.1L257.9 488.7L257.67 485.1V476.0Z"/><path d="M257.9 472.4L258.18 475.2V482.3L257.9 485.2L257.69 482.3V475.2Z"/><rect x="262.2" y="477.5" width="9.6" height="9.6"/><rect x="261.6" y="474.4" width="9.6" height="9.6"/><rect x="261.8" y="483.6" width="9.6" height="9.6"/><rect x="262.4" y="471.8" width="9.6" height="9.6"/><rect x="261.5" y="483.8" width="9.6" height="9.6"/><rect x="261.0" y="465.2" width="9.6" height="9.6"/><rect x="261.0" y="482.6" width="9.6" height="9.6"/><path d="M261.5 472.9L261.81 476.6V485.8L261.5 489.6L261.16 485.8V476.6Z"/><path d="M261.5 475.9L261.79 478.1V483.6L261.5 485.8L261.19 483.6V478.1Z"/><rect x="263.2" y="497.7" width="9.6" height="9.6"/><rect x="264.3" y="476.7" width="9.6" height="9.6"/><rect x="264.5" y="479.7" width="9.6" height="9.6"/><rect x="264.3" y="482.2" width="9.6" height="9.6"/><rect x="265.5" y="459.1" width="9.6" height="9.6"/><rect x="264.5" y="462.2" width="9.6" height="9.6"/><rect x="264.6" y="464.5" width="9.6" height="9.6"/><rect x="264.5" y="462.5" width="9.6" height="9.6"/><path d="M265.1 462.9L265.31 468.5V482.3L265.1 488.0L264.81 482.3V468.5Z"/><path d="M265.1 465.1L265.29 469.0V478.6L265.1 482.5L264.82 478.6V469.0Z"/><rect x="268.0" y="475.2" width="9.6" height="9.6"/><rect x="268.2" y="474.7" width="9.6" height="9.6"/><rect x="268.7" y="480.0" width="9.6" height="9.6"/><rect x="268.8" y="465.6" width="9.6" height="9.6"/><rect x="268.2" y="473.5" width="9.6" height="9.6"/><rect x="268.0" y="470.8" width="9.6" height="9.6"/><rect x="268.0" y="480.5" width="9.6" height="9.6"/><path d="M268.2 469.4L268.60 473.2V482.5L268.2 486.3L267.89 482.5V473.2Z"/><path d="M268.2 471.5L268.58 474.1V480.6L268.2 483.3L267.91 480.6V474.1Z"/><rect x="271.6" y="469.0" width="9.6" height="9.6"/><rect x="271.5" y="472.2" width="9.6" height="9.6"/><rect x="271.8" y="468.8" width="9.6" height="9.6"/><rect x="271.2" y="466.2" width="9.6" height="9.6"/><rect x="271.6" y="474.9" width="9.6" height="9.6"/><rect x="271.3" y="478.7" width="9.6" height="9.6"/><rect x="271.1" y="481.8" width="9.6" height="9.6"/><path d="M271.7 470.4L272.05 474.3V483.8L271.7 487.6L271.28 483.8V474.3Z"/><path d="M271.7 475.0L272.03 477.9V484.8L271.7 487.6L271.31 484.8V477.9Z"/><rect x="275.2" y="478.7" width="9.6" height="9.6"/><rect x="275.0" y="467.3" width="9.6" height="9.6"/><rect x="274.9" y="474.0" width="9.6" height="9.6"/><rect x="274.9" y="482.7" width="9.6" height="9.6"/><rect x="274.6" y="472.2" width="9.6" height="9.6"/><rect x="274.9" y="474.5" width="9.6" height="9.6"/><rect x="275.5" y="474.6" width="9.6" height="9.6"/><path d="M274.7 471.3L274.95 475.1V484.6L274.7 488.5L274.36 484.6V475.1Z"/><path d="M274.7 475.6L274.93 478.5V485.6L274.7 488.5L274.38 485.6V478.5Z"/><rect x="277.2" y="499.7" width="9.6" height="9.6"/><rect x="278.7" y="469.3" width="9.6" height="9.6"/><rect x="278.7" y="475.8" width="9.6" height="9.6"/><rect x="277.9" y="471.1" width="9.6" height="9.6"/><rect x="277.9" y="482.1" width="9.6" height="9.6"/><rect x="278.4" y="470.9" width="9.6" height="9.6"/><rect x="279.0" y="481.8" width="9.6" height="9.6"/><rect x="278.1" y="484.6" width="9.6" height="9.6"/><path d="M278.4 473.1L278.56 476.7V485.6L278.4 489.2L278.15 485.6V476.7Z"/><path d="M278.4 475.4L278.54 478.0V484.5L278.4 487.1L278.17 484.5V478.0Z"/><rect x="281.8" y="477.4" width="9.6" height="9.6"/><rect x="281.2" y="490.5" width="9.6" height="9.6"/><rect x="281.0" y="480.0" width="9.6" height="9.6"/><rect x="281.4" y="488.8" width="9.6" height="9.6"/><rect x="281.4" y="490.4" width="9.6" height="9.6"/><rect x="281.7" y="484.0" width="9.6" height="9.6"/><rect x="281.8" y="480.8" width="9.6" height="9.6"/><path d="M281.1 481.2L281.42 484.1V491.4L281.1 494.3L280.77 491.4V484.1Z"/><path d="M281.1 481.2L281.40 483.6V489.5L281.1 492.0L280.79 489.5V483.6Z"/><rect x="284.4" y="475.7" width="9.6" height="9.6"/><rect x="285.3" y="479.2" width="9.6" height="9.6"/><rect x="285.3" y="472.6" width="9.6" height="9.6"/><rect x="284.8" y="473.8" width="9.6" height="9.6"/><rect x="284.6" y="470.1" width="9.6" height="9.6"/><rect x="285.0" y="466.8" width="9.6" height="9.6"/><rect x="285.0" y="474.8" width="9.6" height="9.6"/><path d="M285.3 471.1L285.68 474.2V481.9L285.3 485.0L284.91 481.9V474.2Z"/><path d="M285.3 474.8L285.66 477.1V482.7L285.3 485.0L284.94 482.7V477.1Z"/><rect x="287.5" y="476.3" width="9.6" height="9.6"/><rect x="287.8" y="488.9" width="9.6" height="9.6"/><rect x="288.4" y="486.1" width="9.6" height="9.6"/><rect x="287.8" y="481.3" width="9.6" height="9.6"/><rect x="288.3" y="483.3" width="9.6" height="9.6"/><rect x="288.1" y="478.8" width="9.6" height="9.6"/><rect x="287.9" y="479.2" width="9.6" height="9.6"/><path d="M287.9 480.1L288.29 483.4V491.4L287.9 494.7L287.47 491.4V483.4Z"/><path d="M287.9 481.7L288.27 484.1V489.9L287.9 492.2L287.50 489.9V484.1Z"/><rect x="291.6" y="478.9" width="9.6" height="9.6"/><rect x="291.3" y="485.1" width="9.6" height="9.6"/><rect x="291.8" y="471.6" width="9.6" height="9.6"/><rect x="292.0" y="475.8" width="9.6" height="9.6"/><rect x="291.5" y="477.8" width="9.6" height="9.6"/><rect x="291.8" y="479.7" width="9.6" height="9.6"/><rect x="291.4" y="472.3" width="9.6" height="9.6"/><rect x="291.1" y="479.0" width="9.6" height="9.6"/><path d="M291.4 475.4L291.76 478.9V487.4L291.4 490.9L291.01 487.4V478.9Z"/><path d="M291.4 476.0L291.74 479.0V486.1L291.4 489.1L291.03 486.1V479.0Z"/><rect x="294.7" y="479.8" width="9.6" height="9.6"/><rect x="294.9" y="485.2" width="9.6" height="9.6"/><rect x="294.5" y="489.2" width="9.6" height="9.6"/><rect x="294.8" y="484.8" width="9.6" height="9.6"/><rect x="295.1" y="475.7" width="9.6" height="9.6"/><rect x="294.8" y="482.0" width="9.6" height="9.6"/><rect x="295.0" y="466.5" width="9.6" height="9.6"/><rect x="294.9" y="478.7" width="9.6" height="9.6"/><path d="M295.1 472.4L295.50 477.1V488.8L295.1 493.5L294.73 488.8V477.1Z"/><path d="M295.1 477.3L295.47 480.7V488.8L295.1 492.2L294.76 488.8V480.7Z"/><rect x="298.7" y="485.5" width="9.6" height="9.6"/><rect x="298.2" y="469.7" width="9.6" height="9.6"/><rect x="297.7" y="474.4" width="9.6" height="9.6"/><rect x="298.4" y="479.1" width="9.6" height="9.6"/><rect x="298.3" y="476.1" width="9.6" height="9.6"/><rect x="298.2" y="471.7" width="9.6" height="9.6"/><rect x="298.3" y="472.3" width="9.6" height="9.6"/><rect x="298.4" y="472.9" width="9.6" height="9.6"/><path d="M298.6 473.5L298.81 477.5V487.3L298.6 491.3L298.33 487.3V477.5Z"/><path d="M298.6 478.8L298.79 481.6V488.5L298.6 491.3L298.35 488.5V481.6Z"/><rect x="302.2" y="474.4" width="9.6" height="9.6"/><rect x="301.8" y="473.5" width="9.6" height="9.6"/><rect x="301.3" y="479.2" width="9.6" height="9.6"/><rect x="301.2" y="481.3" width="9.6" height="9.6"/><rect x="301.8" y="475.9" width="9.6" height="9.6"/><rect x="301.6" y="493.3" width="9.6" height="9.6"/><rect x="301.7" y="489.1" width="9.6" height="9.6"/><rect x="302.1" y="479.7" width="9.6" height="9.6"/><path d="M301.5 477.3L301.90 481.4V491.6L301.5 495.7L301.16 491.6V481.4Z"/><path d="M301.5 477.3L301.88 480.6V488.6L301.5 491.9L301.19 488.6V480.6Z"/><rect x="305.1" y="467.4" width="9.6" height="9.6"/><rect x="305.1" y="480.5" width="9.6" height="9.6"/><rect x="304.9" y="487.2" width="9.6" height="9.6"/><rect x="304.5" y="477.1" width="9.6" height="9.6"/><rect x="305.1" y="470.8" width="9.6" height="9.6"/><rect x="304.8" y="479.7" width="9.6" height="9.6"/><rect x="304.7" y="486.4" width="9.6" height="9.6"/><rect x="305.6" y="471.8" width="9.6" height="9.6"/><path d="M304.8 473.9L305.08 478.2V488.7L304.8 493.0L304.50 488.7V478.2Z"/><path d="M304.8 478.7L305.06 481.1V486.9L304.8 489.3L304.52 486.9V481.1Z"/><rect x="308.4" y="496.7" width="9.6" height="9.6"/><rect x="308.4" y="491.4" width="9.6" height="9.6"/><rect x="308.2" y="483.0" width="9.6" height="9.6"/><rect x="308.2" y="484.6" width="9.6" height="9.6"/><rect x="308.1" y="479.1" width="9.6" height="9.6"/><rect x="308.2" y="481.1" width="9.6" height="9.6"/><rect x="308.3" y="483.1" width="9.6" height="9.6"/><rect x="307.9" y="491.6" width="9.6" height="9.6"/><path d="M307.7 482.9L308.04 484.9V490.0L307.7 492.0L307.35 490.0V484.9Z"/><path d="M307.7 482.9L308.02 484.9V490.0L307.7 492.0L307.38 490.0V484.9Z"/><rect x="311.0" y="480.7" width="9.6" height="9.6"/><rect x="311.5" y="466.6" width="9.6" height="9.6"/><rect x="311.1" y="480.4" width="9.6" height="9.6"/><rect x="311.6" y="476.2" width="9.6" height="9.6"/><rect x="311.5" y="467.2" width="9.6" height="9.6"/><rect x="311.3" y="478.8" width="9.6" height="9.6"/><rect x="311.2" y="492.6" width="9.6" height="9.6"/><rect x="312.1" y="479.4" width="9.6" height="9.6"/><path d="M311.4 470.4L311.71 475.9V489.4L311.4 494.9L311.17 489.4V475.9Z"/><path d="M311.4 477.7L311.70 481.5V490.8L311.4 494.7L311.19 490.8V481.5Z"/><rect x="315.1" y="470.4" width="9.6" height="9.6"/><rect x="315.0" y="467.1" width="9.6" height="9.6"/><rect x="314.5" y="475.5" width="9.6" height="9.6"/><rect x="314.7" y="467.4" width="9.6" height="9.6"/><rect x="314.8" y="474.3" width="9.6" height="9.6"/><rect x="315.2" y="473.3" width="9.6" height="9.6"/><rect x="314.3" y="479.9" width="9.6" height="9.6"/><rect x="314.3" y="492.8" width="9.6" height="9.6"/><path d="M314.5 472.4L314.75 477.3V489.1L314.5 494.0L314.20 489.1V477.3Z"/><path d="M314.5 475.6L314.73 479.8V489.8L314.5 494.0L314.22 489.8V479.8Z"/><rect x="318.0" y="471.1" width="9.6" height="9.6"/><rect x="317.7" y="490.1" width="9.6" height="9.6"/><rect x="318.4" y="477.4" width="9.6" height="9.6"/><rect x="317.6" y="469.1" width="9.6" height="9.6"/><rect x="317.9" y="477.4" width="9.6" height="9.6"/><rect x="318.1" y="480.7" width="9.6" height="9.6"/><rect x="318.4" y="475.4" width="9.6" height="9.6"/><rect x="318.2" y="482.1" width="9.6" height="9.6"/><path d="M318.2 472.9L318.62 478.1V490.7L318.2 495.9L317.79 490.7V478.1Z"/><path d="M318.2 475.8L318.60 479.3V487.8L318.2 491.3L317.82 487.8V479.3Z"/><rect x="321.2" y="478.4" width="9.6" height="9.6"/><rect x="321.3" y="481.8" width="9.6" height="9.6"/><rect x="320.8" y="483.7" width="9.6" height="9.6"/><rect x="321.4" y="475.1" width="9.6" height="9.6"/><rect x="321.3" y="480.9" width="9.6" height="9.6"/><rect x="321.2" y="482.9" width="9.6" height="9.6"/><rect x="321.2" y="481.2" width="9.6" height="9.6"/><rect x="321.1" y="491.9" width="9.6" height="9.6"/><path d="M320.7 478.9L321.02 482.4V490.9L320.7 494.3L320.41 490.9V482.4Z"/><path d="M320.7 478.9L320.99 480.6V484.8L320.7 486.4L320.43 484.8V480.6Z"/><rect x="324.4" y="481.6" width="9.6" height="9.6"/><rect x="324.6" y="461.1" width="9.6" height="9.6"/><rect x="324.5" y="488.3" width="9.6" height="9.6"/><rect x="324.6" y="466.7" width="9.6" height="9.6"/><rect x="325.2" y="482.3" width="9.6" height="9.6"/><rect x="324.6" y="472.5" width="9.6" height="9.6"/><rect x="324.8" y="469.4" width="9.6" height="9.6"/><rect x="325.2" y="467.7" width="9.6" height="9.6"/><path d="M324.9 470.5L325.16 475.8V488.8L324.9 494.1L324.69 488.8V475.8Z"/><path d="M324.9 470.5L325.15 473.7V481.4L324.9 484.5L324.71 481.4V473.7Z"/><rect x="327.9" y="479.6" width="9.6" height="9.6"/><rect x="327.6" y="474.8" width="9.6" height="9.6"/><rect x="328.6" y="461.3" width="9.6" height="9.6"/><rect x="327.8" y="461.4" width="9.6" height="9.6"/><rect x="328.1" y="475.6" width="9.6" height="9.6"/><rect x="328.3" y="480.8" width="9.6" height="9.6"/><rect x="327.5" y="479.7" width="9.6" height="9.6"/><rect x="328.2" y="478.8" width="9.6" height="9.6"/><path d="M327.9 465.6L328.09 470.3V481.9L327.9 486.6L327.63 481.9V470.3Z"/><path d="M327.9 472.8L328.07 475.9V483.5L327.9 486.6L327.64 483.5V475.9Z"/><rect x="331.3" y="477.1" width="9.6" height="9.6"/><rect x="331.2" y="490.9" width="9.6" height="9.6"/><rect x="331.1" y="471.4" width="9.6" height="9.6"/><rect x="331.5" y="477.9" width="9.6" height="9.6"/><rect x="331.0" y="473.7" width="9.6" height="9.6"/><rect x="331.1" y="473.2" width="9.6" height="9.6"/><rect x="331.4" y="486.5" width="9.6" height="9.6"/><rect x="331.4" y="474.6" width="9.6" height="9.6"/><path d="M331.4 475.2L331.86 480.1V491.9L331.4 496.7L331.03 491.9V480.1Z"/><path d="M331.4 475.2L331.83 478.3V485.7L331.4 488.7L331.06 485.7V478.3Z"/><rect x="334.4" y="462.6" width="9.6" height="9.6"/><rect x="334.8" y="466.9" width="9.6" height="9.6"/><rect x="334.4" y="469.4" width="9.6" height="9.6"/><rect x="334.9" y="476.0" width="9.6" height="9.6"/><rect x="334.6" y="477.5" width="9.6" height="9.6"/><rect x="334.7" y="470.4" width="9.6" height="9.6"/><rect x="334.5" y="472.0" width="9.6" height="9.6"/><rect x="334.8" y="473.0" width="9.6" height="9.6"/><rect x="335.1" y="472.6" width="9.6" height="9.6"/><path d="M334.4 471.5L334.71 474.2V480.6L334.4 483.3L334.16 480.6V474.2Z"/><path d="M334.4 472.3L334.70 474.8V480.8L334.4 483.3L334.17 480.8V474.8Z"/><rect x="337.7" y="474.7" width="9.6" height="9.6"/><rect x="338.0" y="470.4" width="9.6" height="9.6"/><rect x="338.7" y="480.0" width="9.6" height="9.6"/><rect x="338.2" y="469.9" width="9.6" height="9.6"/><rect x="338.4" y="485.7" width="9.6" height="9.6"/><rect x="338.1" y="471.8" width="9.6" height="9.6"/><rect x="337.8" y="488.1" width="9.6" height="9.6"/><rect x="337.9" y="472.9" width="9.6" height="9.6"/><rect x="338.1" y="475.4" width="9.6" height="9.6"/><path d="M338.2 473.7L338.48 478.3V489.3L338.2 493.9L337.97 489.3V478.3Z"/><path d="M338.2 473.7L338.46 477.7V487.5L338.2 491.5L337.98 487.5V477.7Z"/><rect x="341.1" y="465.0" width="9.6" height="9.6"/><rect x="341.6" y="462.0" width="9.6" height="9.6"/><rect x="341.4" y="491.1" width="9.6" height="9.6"/><rect x="341.5" y="482.5" width="9.6" height="9.6"/><rect x="340.9" y="466.8" width="9.6" height="9.6"/><rect x="341.6" y="486.9" width="9.6" height="9.6"/><rect x="340.9" y="471.5" width="9.6" height="9.6"/><rect x="341.5" y="471.2" width="9.6" height="9.6"/><rect x="341.4" y="483.5" width="9.6" height="9.6"/><path d="M341.5 465.8L341.86 472.8V489.9L341.5 496.9L341.18 489.9V472.8Z"/><path d="M341.5 469.7L341.84 474.0V484.7L341.5 489.1L341.20 484.7V474.0Z"/><rect x="344.4" y="488.3" width="9.6" height="9.6"/><rect x="344.5" y="484.7" width="9.6" height="9.6"/><rect x="344.7" y="470.3" width="9.6" height="9.6"/><rect x="345.1" y="466.5" width="9.6" height="9.6"/><rect x="344.3" y="471.9" width="9.6" height="9.6"/><rect x="345.1" y="467.0" width="9.6" height="9.6"/><rect x="344.6" y="479.2" width="9.6" height="9.6"/><rect x="345.2" y="475.6" width="9.6" height="9.6"/><rect x="344.5" y="468.7" width="9.6" height="9.6"/><path d="M344.8 470.3L345.17 475.1V486.6L344.8 491.4L344.41 486.6V475.1Z"/><path d="M344.8 471.6L345.14 475.2V483.9L344.8 487.5L344.44 483.9V475.2Z"/><rect x="348.0" y="480.8" width="9.6" height="9.6"/><rect x="347.8" y="484.0" width="9.6" height="9.6"/><rect x="348.0" y="464.8" width="9.6" height="9.6"/><rect x="348.1" y="471.1" width="9.6" height="9.6"/><rect x="348.2" y="475.4" width="9.6" height="9.6"/><rect x="347.8" y="457.9" width="9.6" height="9.6"/><rect x="347.9" y="472.2" width="9.6" height="9.6"/><rect x="347.4" y="476.4" width="9.6" height="9.6"/><rect x="348.0" y="489.8" width="9.6" height="9.6"/><path d="M348.0 462.5L348.28 469.6V486.8L348.0 493.8L347.70 486.8V469.6Z"/><path d="M348.0 468.0L348.26 472.3V482.5L348.0 486.8L347.72 482.5V472.3Z"/><rect x="351.3" y="479.4" width="9.6" height="9.6"/><rect x="351.6" y="472.2" width="9.6" height="9.6"/><rect x="351.3" y="479.1" width="9.6" height="9.6"/><rect x="351.2" y="459.9" width="9.6" height="9.6"/><rect x="351.3" y="473.5" width="9.6" height="9.6"/><rect x="351.4" y="488.3" width="9.6" height="9.6"/><rect x="351.4" y="486.9" width="9.6" height="9.6"/><rect x="351.5" y="472.0" width="9.6" height="9.6"/><rect x="351.7" y="478.6" width="9.6" height="9.6"/><path d="M350.9 463.7L351.16 470.5V487.3L350.9 494.1L350.57 487.3V470.5Z"/><path d="M350.9 473.8L351.14 476.9V484.4L350.9 487.5L350.59 484.4V476.9Z"/><rect x="352.2" y="452.2" width="9.6" height="9.6"/><rect x="353.2" y="497.2" width="9.6" height="9.6"/><rect x="354.7" y="485.9" width="9.6" height="9.6"/><rect x="354.7" y="486.0" width="9.6" height="9.6"/><rect x="355.0" y="482.0" width="9.6" height="9.6"/><rect x="354.3" y="480.9" width="9.6" height="9.6"/><rect x="354.4" y="481.3" width="9.6" height="9.6"/><rect x="354.6" y="470.3" width="9.6" height="9.6"/><rect x="354.6" y="487.5" width="9.6" height="9.6"/><rect x="354.5" y="465.7" width="9.6" height="9.6"/><rect x="354.7" y="485.3" width="9.6" height="9.6"/><path d="M354.4 469.5L354.66 474.5V486.8L354.4 491.8L354.11 486.8V474.5Z"/><path d="M354.4 475.6L354.64 478.6V485.8L354.4 488.8L354.13 485.8V478.6Z"/><rect x="357.9" y="476.2" width="9.6" height="9.6"/><rect x="358.0" y="487.0" width="9.6" height="9.6"/><rect x="357.2" y="458.0" width="9.6" height="9.6"/><rect x="357.4" y="463.4" width="9.6" height="9.6"/><rect x="357.5" y="470.2" width="9.6" height="9.6"/><rect x="358.0" y="456.2" width="9.6" height="9.6"/><rect x="358.1" y="483.1" width="9.6" height="9.6"/><rect x="357.4" y="467.5" width="9.6" height="9.6"/><rect x="357.8" y="459.5" width="9.6" height="9.6"/><path d="M357.9 460.8L358.25 468.0V485.6L357.9 492.8L357.54 485.6V468.0Z"/><path d="M357.9 470.4L358.23 473.8V482.4L357.9 485.9L357.56 482.4V473.8Z"/><rect x="361.0" y="464.5" width="9.6" height="9.6"/><rect x="361.7" y="470.9" width="9.6" height="9.6"/><rect x="360.9" y="471.9" width="9.6" height="9.6"/><rect x="361.6" y="466.5" width="9.6" height="9.6"/><rect x="361.1" y="480.8" width="9.6" height="9.6"/><rect x="361.4" y="466.8" width="9.6" height="9.6"/><rect x="361.4" y="474.9" width="9.6" height="9.6"/><rect x="360.9" y="464.6" width="9.6" height="9.6"/><rect x="361.6" y="473.5" width="9.6" height="9.6"/><path d="M361.4 468.5L361.86 472.6V482.5L361.4 486.6L360.98 482.5V472.6Z"/><path d="M361.4 470.6L361.83 473.8V481.6L361.4 484.8L361.01 481.6V473.8Z"/><rect x="364.7" y="458.4" width="9.6" height="9.6"/><rect x="364.6" y="459.9" width="9.6" height="9.6"/><rect x="364.7" y="489.8" width="9.6" height="9.6"/><rect x="364.8" y="459.2" width="9.6" height="9.6"/><rect x="364.3" y="479.4" width="9.6" height="9.6"/><rect x="364.7" y="475.6" width="9.6" height="9.6"/><rect x="363.8" y="463.7" width="9.6" height="9.6"/><rect x="364.8" y="474.3" width="9.6" height="9.6"/><rect x="364.3" y="468.8" width="9.6" height="9.6"/><path d="M364.6 462.2L364.85 468.4V483.4L364.6 489.5L364.34 483.4V468.4Z"/><path d="M364.6 468.1L364.83 472.3V482.4L364.6 486.5L364.36 482.4V472.3Z"/><rect x="367.9" y="472.7" width="9.6" height="9.6"/><rect x="368.2" y="472.7" width="9.6" height="9.6"/><rect x="367.9" y="473.2" width="9.6" height="9.6"/><rect x="368.2" y="475.1" width="9.6" height="9.6"/><rect x="368.4" y="462.1" width="9.6" height="9.6"/><rect x="368.2" y="473.1" width="9.6" height="9.6"/><rect x="367.9" y="471.3" width="9.6" height="9.6"/><rect x="367.1" y="478.5" width="9.6" height="9.6"/><rect x="367.9" y="479.8" width="9.6" height="9.6"/><path d="M367.7 466.2L368.12 470.6V481.3L367.7 485.6L367.29 481.3V470.6Z"/><path d="M367.7 471.4L368.10 474.6V482.4L367.7 485.6L367.32 482.4V474.6Z"/><rect x="371.5" y="489.4" width="9.6" height="9.6"/><rect x="371.2" y="484.1" width="9.6" height="9.6"/><rect x="370.8" y="488.0" width="9.6" height="9.6"/><rect x="371.6" y="480.6" width="9.6" height="9.6"/><rect x="371.2" y="477.2" width="9.6" height="9.6"/><rect x="371.8" y="471.7" width="9.6" height="9.6"/><rect x="371.3" y="471.1" width="9.6" height="9.6"/><rect x="371.1" y="462.1" width="9.6" height="9.6"/><rect x="371.2" y="473.6" width="9.6" height="9.6"/><path d="M371.7 465.9L372.05 471.4V484.8L371.7 490.3L371.40 484.8V471.4Z"/><path d="M371.7 473.9L372.03 477.2V485.0L371.7 488.3L371.43 485.0V477.2Z"/><rect x="375.1" y="480.7" width="9.6" height="9.6"/><rect x="374.4" y="476.3" width="9.6" height="9.6"/><rect x="374.5" y="473.0" width="9.6" height="9.6"/><rect x="374.3" y="477.6" width="9.6" height="9.6"/><rect x="374.2" y="475.7" width="9.6" height="9.6"/><rect x="375.0" y="469.0" width="9.6" height="9.6"/><rect x="374.7" y="475.0" width="9.6" height="9.6"/><rect x="374.8" y="479.3" width="9.6" height="9.6"/><rect x="374.7" y="484.4" width="9.6" height="9.6"/><rect x="374.6" y="464.7" width="9.6" height="9.6"/><path d="M374.5 469.8L374.87 474.4V485.6L374.5 490.2L374.14 485.6V474.4Z"/><path d="M374.5 475.5L374.85 478.8V486.9L374.5 490.2L374.17 486.9V478.8Z"/><rect x="377.9" y="464.4" width="9.6" height="9.6"/><rect x="378.0" y="469.9" width="9.6" height="9.6"/><rect x="378.1" y="481.6" width="9.6" height="9.6"/><rect x="377.6" y="463.2" width="9.6" height="9.6"/><rect x="378.6" y="483.5" width="9.6" height="9.6"/><rect x="378.1" y="469.9" width="9.6" height="9.6"/><rect x="377.8" y="486.0" width="9.6" height="9.6"/><rect x="377.8" y="471.0" width="9.6" height="9.6"/><rect x="378.5" y="474.2" width="9.6" height="9.6"/><rect x="377.6" y="487.3" width="9.6" height="9.6"/><path d="M378.0 467.0L378.28 472.7V486.6L378.0 492.3L377.79 486.6V472.7Z"/><path d="M378.0 471.2L378.26 474.2V481.6L378.0 484.6L377.81 481.6V474.2Z"/><rect x="381.3" y="472.0" width="9.6" height="9.6"/><rect x="381.7" y="459.4" width="9.6" height="9.6"/><rect x="381.2" y="472.2" width="9.6" height="9.6"/><rect x="380.9" y="461.5" width="9.6" height="9.6"/><rect x="380.9" y="469.1" width="9.6" height="9.6"/><rect x="381.5" y="473.8" width="9.6" height="9.6"/><rect x="381.4" y="464.0" width="9.6" height="9.6"/><rect x="381.1" y="464.5" width="9.6" height="9.6"/><rect x="381.5" y="474.1" width="9.6" height="9.6"/><rect x="380.7" y="480.3" width="9.6" height="9.6"/><path d="M381.4 463.2L381.62 468.4V481.0L381.4 486.1L381.09 481.0V468.4Z"/><path d="M381.4 467.9L381.60 471.3V479.5L381.4 482.9L381.11 479.5V471.3Z"/><rect x="384.6" y="465.4" width="9.6" height="9.6"/><rect x="384.0" y="458.1" width="9.6" height="9.6"/><rect x="384.7" y="456.3" width="9.6" height="9.6"/><rect x="384.6" y="463.1" width="9.6" height="9.6"/><rect x="384.8" y="469.9" width="9.6" height="9.6"/><rect x="384.8" y="468.4" width="9.6" height="9.6"/><rect x="384.7" y="482.8" width="9.6" height="9.6"/><rect x="384.3" y="461.2" width="9.6" height="9.6"/><rect x="384.2" y="474.8" width="9.6" height="9.6"/><rect x="384.6" y="468.5" width="9.6" height="9.6"/><path d="M384.4 460.1L384.76 466.3V481.6L384.4 487.9L384.11 481.6V466.3Z"/><path d="M384.4 466.4L384.74 470.3V480.0L384.4 483.9L384.14 480.0V470.3Z"/><rect x="388.2" y="460.8" width="9.6" height="9.6"/><rect x="388.0" y="478.7" width="9.6" height="9.6"/><rect x="387.9" y="470.2" width="9.6" height="9.6"/><rect x="387.2" y="481.6" width="9.6" height="9.6"/><rect x="388.1" y="471.2" width="9.6" height="9.6"/><rect x="388.3" y="472.7" width="9.6" height="9.6"/><rect x="388.1" y="465.1" width="9.6" height="9.6"/><rect x="388.5" y="470.9" width="9.6" height="9.6"/><rect x="387.8" y="469.0" width="9.6" height="9.6"/><rect x="387.7" y="475.2" width="9.6" height="9.6"/><path d="M388.1 465.2L388.42 470.0V481.6L388.1 486.3L387.83 481.6V470.0Z"/><path d="M388.1 468.7L388.40 471.6V478.7L388.1 481.6L387.85 478.7V471.6Z"/><rect x="390.6" y="471.8" width="9.6" height="9.6"/><rect x="391.3" y="477.5" width="9.6" height="9.6"/><rect x="390.7" y="471.1" width="9.6" height="9.6"/><rect x="391.3" y="462.3" width="9.6" height="9.6"/><rect x="390.8" y="471.0" width="9.6" height="9.6"/><rect x="391.1" y="464.8" width="9.6" height="9.6"/><rect x="390.8" y="467.1" width="9.6" height="9.6"/><rect x="391.7" y="471.5" width="9.6" height="9.6"/><rect x="391.3" y="459.8" width="9.6" height="9.6"/><rect x="391.5" y="458.6" width="9.6" height="9.6"/><path d="M391.1 466.1L391.40 470.0V479.5L391.1 483.3L390.89 479.5V470.0Z"/><path d="M391.1 466.1L391.38 469.5V477.8L391.1 481.2L390.91 477.8V469.5Z"/><rect x="394.2" y="494.2" width="9.6" height="9.6"/><rect x="394.3" y="462.8" width="9.6" height="9.6"/><rect x="394.8" y="465.4" width="9.6" height="9.6"/><rect x="394.4" y="466.4" width="9.6" height="9.6"/><rect x="394.0" y="486.5" width="9.6" height="9.6"/><rect x="393.8" y="469.4" width="9.6" height="9.6"/><rect x="394.6" y="468.7" width="9.6" height="9.6"/><rect x="394.2" y="485.7" width="9.6" height="9.6"/><rect x="393.5" y="475.5" width="9.6" height="9.6"/><rect x="394.6" y="468.2" width="9.6" height="9.6"/><rect x="394.2" y="480.0" width="9.6" height="9.6"/><path d="M394.3 466.6L394.73 472.4V486.5L394.3 492.3L393.90 486.5V472.4Z"/><path d="M394.3 472.8L394.70 476.0V484.0L394.3 487.3L393.93 484.0V476.0Z"/><rect x="397.4" y="468.3" width="9.6" height="9.6"/><rect x="397.6" y="460.4" width="9.6" height="9.6"/><rect x="397.8" y="479.2" width="9.6" height="9.6"/><rect x="398.3" y="468.5" width="9.6" height="9.6"/><rect x="398.1" y="459.6" width="9.6" height="9.6"/><rect x="398.0" y="471.7" width="9.6" height="9.6"/><rect x="398.0" y="474.6" width="9.6" height="9.6"/><rect x="397.6" y="466.7" width="9.6" height="9.6"/><rect x="397.8" y="462.0" width="9.6" height="9.6"/><rect x="398.2" y="468.6" width="9.6" height="9.6"/><path d="M397.8 463.4L398.24 467.8V478.7L397.8 483.2L397.29 478.7V467.8Z"/><path d="M397.8 463.4L398.21 466.1V472.8L397.8 475.6L397.32 472.8V466.1Z"/><rect x="401.2" y="460.0" width="9.6" height="9.6"/><rect x="400.9" y="467.0" width="9.6" height="9.6"/><rect x="401.3" y="471.4" width="9.6" height="9.6"/><rect x="401.1" y="469.0" width="9.6" height="9.6"/><rect x="400.8" y="469.6" width="9.6" height="9.6"/><rect x="401.1" y="465.7" width="9.6" height="9.6"/><rect x="401.2" y="478.5" width="9.6" height="9.6"/><rect x="400.7" y="465.1" width="9.6" height="9.6"/><rect x="401.4" y="473.2" width="9.6" height="9.6"/><rect x="400.9" y="474.3" width="9.6" height="9.6"/><path d="M401.3 463.8L401.72 468.4V479.7L401.3 484.3L400.89 479.7V468.4Z"/><path d="M401.3 466.1L401.69 469.8V478.7L401.3 482.3L400.91 478.7V469.8Z"/><rect x="403.9" y="472.8" width="9.6" height="9.6"/><rect x="404.0" y="467.6" width="9.6" height="9.6"/><rect x="404.0" y="467.2" width="9.6" height="9.6"/><rect x="404.2" y="464.3" width="9.6" height="9.6"/><rect x="404.7" y="467.6" width="9.6" height="9.6"/><rect x="404.6" y="460.6" width="9.6" height="9.6"/><rect x="404.5" y="464.6" width="9.6" height="9.6"/><rect x="404.4" y="480.2" width="9.6" height="9.6"/><rect x="404.7" y="473.8" width="9.6" height="9.6"/><rect x="404.1" y="473.7" width="9.6" height="9.6"/><path d="M404.2 464.4L404.46 469.3V481.1L404.2 486.0L403.92 481.1V469.3Z"/><path d="M404.2 464.4L404.44 467.5V475.1L404.2 478.1L403.94 475.1V467.5Z"/><rect x="407.7" y="461.9" width="9.6" height="9.6"/><rect x="407.6" y="472.3" width="9.6" height="9.6"/><rect x="407.8" y="478.3" width="9.6" height="9.6"/><rect x="407.4" y="477.6" width="9.6" height="9.6"/><rect x="408.4" y="478.7" width="9.6" height="9.6"/><rect x="408.1" y="470.5" width="9.6" height="9.6"/><rect x="407.9" y="465.8" width="9.6" height="9.6"/><rect x="408.0" y="459.4" width="9.6" height="9.6"/><rect x="408.1" y="468.0" width="9.6" height="9.6"/><rect x="408.1" y="466.5" width="9.6" height="9.6"/><path d="M407.9 464.2L408.30 468.8V479.9L407.9 484.5L407.46 479.9V468.8Z"/><path d="M407.9 469.1L408.27 471.6V477.7L407.9 480.2L407.49 477.7V471.6Z"/><rect x="411.4" y="460.3" width="9.6" height="9.6"/><rect x="411.2" y="457.8" width="9.6" height="9.6"/><rect x="410.6" y="460.3" width="9.6" height="9.6"/><rect x="411.2" y="456.0" width="9.6" height="9.6"/><rect x="411.3" y="461.9" width="9.6" height="9.6"/><rect x="411.6" y="457.5" width="9.6" height="9.6"/><rect x="410.8" y="461.1" width="9.6" height="9.6"/><rect x="411.3" y="461.3" width="9.6" height="9.6"/><rect x="410.7" y="456.0" width="9.6" height="9.6"/><rect x="411.3" y="464.7" width="9.6" height="9.6"/><path d="M410.6 459.8L411.03 462.2V468.1L410.6 470.5L410.08 468.1V462.2Z"/><path d="M410.6 463.9L411.00 465.4V469.1L410.6 470.5L410.11 469.1V465.4Z"/><rect x="414.6" y="461.0" width="9.6" height="9.6"/><rect x="414.6" y="473.8" width="9.6" height="9.6"/><rect x="414.3" y="461.2" width="9.6" height="9.6"/><rect x="414.5" y="473.1" width="9.6" height="9.6"/><rect x="414.6" y="457.1" width="9.6" height="9.6"/><rect x="414.3" y="462.5" width="9.6" height="9.6"/><rect x="414.8" y="455.6" width="9.6" height="9.6"/><rect x="414.2" y="459.4" width="9.6" height="9.6"/><rect x="414.5" y="472.7" width="9.6" height="9.6"/><rect x="414.3" y="467.7" width="9.6" height="9.6"/><path d="M414.4 460.9L414.75 465.1V475.4L414.4 479.6L414.07 475.4V465.1Z"/><path d="M414.4 464.6L414.72 467.5V474.5L414.4 477.4L414.09 474.5V467.5Z"/><rect x="417.5" y="457.2" width="9.6" height="9.6"/><rect x="417.7" y="453.4" width="9.6" height="9.6"/><rect x="417.6" y="454.4" width="9.6" height="9.6"/><rect x="417.8" y="459.5" width="9.6" height="9.6"/><rect x="417.5" y="471.9" width="9.6" height="9.6"/><rect x="418.4" y="471.8" width="9.6" height="9.6"/><rect x="417.2" y="466.2" width="9.6" height="9.6"/><rect x="418.0" y="457.0" width="9.6" height="9.6"/><rect x="417.3" y="455.0" width="9.6" height="9.6"/><rect x="417.9" y="476.9" width="9.6" height="9.6"/><path d="M418.4 457.2L418.75 462.9V477.0L418.4 482.7L417.99 477.0V462.9Z"/><path d="M418.4 461.9L418.72 464.8V471.7L418.4 474.6L418.01 471.7V464.8Z"/><rect x="421.6" y="462.5" width="9.6" height="9.6"/><rect x="421.4" y="463.9" width="9.6" height="9.6"/><rect x="421.1" y="460.5" width="9.6" height="9.6"/><rect x="421.2" y="449.8" width="9.6" height="9.6"/><rect x="421.1" y="459.4" width="9.6" height="9.6"/><rect x="421.2" y="462.4" width="9.6" height="9.6"/><rect x="420.5" y="476.4" width="9.6" height="9.6"/><rect x="421.0" y="466.0" width="9.6" height="9.6"/><rect x="421.4" y="474.9" width="9.6" height="9.6"/><rect x="421.1" y="452.3" width="9.6" height="9.6"/><path d="M421.4 453.6L421.88 460.0V475.8L421.4 482.2L420.94 475.8V460.0Z"/><path d="M421.4 460.5L421.85 464.3V473.4L421.4 477.2L420.97 473.4V464.3Z"/><rect x="424.5" y="461.1" width="9.6" height="9.6"/><rect x="424.4" y="466.9" width="9.6" height="9.6"/><rect x="424.2" y="466.2" width="9.6" height="9.6"/><rect x="424.7" y="470.4" width="9.6" height="9.6"/><rect x="423.8" y="468.3" width="9.6" height="9.6"/><rect x="424.9" y="451.8" width="9.6" height="9.6"/><rect x="423.9" y="471.4" width="9.6" height="9.6"/><rect x="423.8" y="451.6" width="9.6" height="9.6"/><rect x="424.7" y="474.6" width="9.6" height="9.6"/><rect x="424.7" y="476.1" width="9.6" height="9.6"/><path d="M424.4 456.6L424.86 462.3V476.2L424.4 481.9L423.90 476.2V462.3Z"/><path d="M424.4 460.7L424.83 464.2V472.9L424.4 476.4L423.94 472.9V464.2Z"/><rect x="427.6" y="456.8" width="9.6" height="9.6"/><rect x="428.5" y="450.8" width="9.6" height="9.6"/><rect x="427.6" y="467.6" width="9.6" height="9.6"/><rect x="428.0" y="467.2" width="9.6" height="9.6"/><rect x="427.8" y="472.5" width="9.6" height="9.6"/><rect x="427.8" y="469.8" width="9.6" height="9.6"/><rect x="427.8" y="459.2" width="9.6" height="9.6"/><rect x="427.7" y="480.1" width="9.6" height="9.6"/><rect x="428.2" y="450.9" width="9.6" height="9.6"/><rect x="427.7" y="468.7" width="9.6" height="9.6"/><path d="M427.6 457.9L427.89 464.0V478.9L427.6 485.0L427.25 478.9V464.0Z"/><path d="M427.6 457.9L427.87 462.2V472.8L427.6 477.2L427.27 472.8V462.2Z"/><rect x="430.2" y="426.7" width="9.6" height="9.6"/><rect x="431.2" y="461.0" width="9.6" height="9.6"/><rect x="431.3" y="458.4" width="9.6" height="9.6"/><rect x="431.2" y="453.1" width="9.6" height="9.6"/><rect x="430.8" y="449.3" width="9.6" height="9.6"/><rect x="431.0" y="459.3" width="9.6" height="9.6"/><rect x="430.6" y="452.5" width="9.6" height="9.6"/><rect x="431.1" y="454.9" width="9.6" height="9.6"/><rect x="431.6" y="468.2" width="9.6" height="9.6"/><rect x="431.0" y="450.0" width="9.6" height="9.6"/><rect x="430.9" y="441.7" width="9.6" height="9.6"/><path d="M431.1 445.5L431.66 451.9V467.6L431.1 474.0L430.52 467.6V451.9Z"/><path d="M431.1 453.8L431.62 456.8V464.0L431.1 467.0L430.56 464.0V456.8Z"/><rect x="434.4" y="453.6" width="9.6" height="9.6"/><rect x="434.4" y="453.5" width="9.6" height="9.6"/><rect x="434.2" y="461.1" width="9.6" height="9.6"/><rect x="433.9" y="460.8" width="9.6" height="9.6"/><rect x="434.2" y="467.3" width="9.6" height="9.6"/><rect x="434.1" y="458.4" width="9.6" height="9.6"/><rect x="434.6" y="467.2" width="9.6" height="9.6"/><rect x="434.3" y="468.6" width="9.6" height="9.6"/><rect x="434.1" y="448.8" width="9.6" height="9.6"/><rect x="434.5" y="464.3" width="9.6" height="9.6"/><path d="M434.5 452.6L434.92 457.5V469.5L434.5 474.4L434.04 469.5V457.5Z"/><path d="M434.5 457.8L434.89 461.4V470.4L434.5 474.0L434.07 470.4V461.4Z"/><rect x="437.9" y="461.7" width="9.6" height="9.6"/><rect x="437.9" y="456.0" width="9.6" height="9.6"/><rect x="438.2" y="456.8" width="9.6" height="9.6"/><rect x="437.9" y="445.7" width="9.6" height="9.6"/><rect x="437.5" y="442.8" width="9.6" height="9.6"/><rect x="437.2" y="448.4" width="9.6" height="9.6"/><rect x="437.7" y="466.2" width="9.6" height="9.6"/><rect x="437.6" y="457.6" width="9.6" height="9.6"/><rect x="437.6" y="458.9" width="9.6" height="9.6"/><rect x="438.0" y="457.1" width="9.6" height="9.6"/><path d="M437.4 446.6L437.88 452.3V466.3L437.4 472.0L436.93 466.3V452.3Z"/><path d="M437.4 451.3L437.85 455.9V467.1L437.4 471.7L436.96 467.1V455.9Z"/><rect x="441.1" y="469.6" width="9.6" height="9.6"/><rect x="441.1" y="451.0" width="9.6" height="9.6"/><rect x="441.1" y="444.3" width="9.6" height="9.6"/><rect x="441.6" y="448.9" width="9.6" height="9.6"/><rect x="441.4" y="449.3" width="9.6" height="9.6"/><rect x="441.3" y="447.2" width="9.6" height="9.6"/><rect x="441.0" y="457.3" width="9.6" height="9.6"/><rect x="440.8" y="462.3" width="9.6" height="9.6"/><rect x="440.9" y="466.6" width="9.6" height="9.6"/><rect x="441.1" y="455.0" width="9.6" height="9.6"/><path d="M441.2 452.8L441.58 457.9V470.3L441.2 475.4L440.73 470.3V457.9Z"/><path d="M441.2 459.3L441.55 462.4V469.8L441.2 472.9L440.76 469.8V462.4Z"/><rect x="444.5" y="462.7" width="9.6" height="9.6"/><rect x="443.9" y="467.1" width="9.6" height="9.6"/><rect x="444.5" y="463.8" width="9.6" height="9.6"/><rect x="444.3" y="455.9" width="9.6" height="9.6"/><rect x="444.9" y="447.6" width="9.6" height="9.6"/><rect x="444.6" y="439.4" width="9.6" height="9.6"/><rect x="444.5" y="460.0" width="9.6" height="9.6"/><rect x="444.2" y="440.9" width="9.6" height="9.6"/><rect x="444.1" y="447.1" width="9.6" height="9.6"/><rect x="444.3" y="453.8" width="9.6" height="9.6"/><path d="M444.0 443.2L444.68 449.9V466.3L444.0 472.9L443.39 466.3V449.9Z"/><path d="M444.0 452.8L444.64 456.7V466.4L444.0 470.4L443.43 466.4V456.7Z"/><rect x="447.7" y="476.2" width="9.6" height="9.6"/><rect x="447.4" y="473.6" width="9.6" height="9.6"/><rect x="447.9" y="446.3" width="9.6" height="9.6"/><rect x="447.3" y="481.4" width="9.6" height="9.6"/><rect x="447.4" y="476.1" width="9.6" height="9.6"/><rect x="447.5" y="478.4" width="9.6" height="9.6"/><rect x="448.4" y="448.2" width="9.6" height="9.6"/><rect x="447.4" y="448.7" width="9.6" height="9.6"/><rect x="447.9" y="463.4" width="9.6" height="9.6"/><rect x="448.2" y="450.8" width="9.6" height="9.6"/><path d="M447.7 450.1L448.15 458.1V477.5L447.7 485.5L447.27 477.5V458.1Z"/><path d="M447.7 456.2L448.12 459.8V468.7L447.7 472.3L447.30 468.7V459.8Z"/><rect x="451.3" y="461.5" width="9.6" height="9.6"/><rect x="451.0" y="474.8" width="9.6" height="9.6"/><rect x="450.7" y="463.0" width="9.6" height="9.6"/><rect x="451.3" y="441.5" width="9.6" height="9.6"/><rect x="450.9" y="441.2" width="9.6" height="9.6"/><rect x="451.2" y="463.7" width="9.6" height="9.6"/><rect x="450.9" y="456.6" width="9.6" height="9.6"/><rect x="451.3" y="451.8" width="9.6" height="9.6"/><rect x="451.3" y="449.1" width="9.6" height="9.6"/><rect x="451.1" y="455.4" width="9.6" height="9.6"/><path d="M450.8 445.0L451.27 452.7V471.4L450.8 479.1L450.39 471.4V452.7Z"/><path d="M450.8 452.1L451.24 457.5V470.5L450.8 475.9L450.42 470.5V457.5Z"/><rect x="453.9" y="473.8" width="9.6" height="9.6"/><rect x="454.2" y="463.9" width="9.6" height="9.6"/><rect x="454.1" y="458.5" width="9.6" height="9.6"/><rect x="453.8" y="477.9" width="9.6" height="9.6"/><rect x="454.3" y="474.0" width="9.6" height="9.6"/><rect x="454.4" y="450.7" width="9.6" height="9.6"/><rect x="454.5" y="448.8" width="9.6" height="9.6"/><rect x="453.7" y="466.6" width="9.6" height="9.6"/><rect x="454.3" y="448.3" width="9.6" height="9.6"/><rect x="453.8" y="473.1" width="9.6" height="9.6"/><path d="M454.5 452.1L454.88 459.2V476.6L454.5 483.7L454.06 476.6V459.2Z"/><path d="M454.5 457.7L454.85 461.1V469.3L454.5 472.7L454.09 469.3V461.1Z"/><rect x="457.3" y="457.9" width="9.6" height="9.6"/><rect x="457.7" y="473.6" width="9.6" height="9.6"/><rect x="457.7" y="459.3" width="9.6" height="9.6"/><rect x="458.1" y="451.5" width="9.6" height="9.6"/><rect x="457.8" y="449.1" width="9.6" height="9.6"/><rect x="457.8" y="443.5" width="9.6" height="9.6"/><rect x="457.6" y="438.5" width="9.6" height="9.6"/><rect x="457.8" y="468.5" width="9.6" height="9.6"/><rect x="457.7" y="454.2" width="9.6" height="9.6"/><rect x="457.7" y="450.2" width="9.6" height="9.6"/><path d="M457.9 448.3L458.49 453.7V467.0L457.9 472.4L457.27 467.0V453.7Z"/><path d="M457.9 450.8L458.45 454.7V464.4L457.9 468.4L457.31 464.4V454.7Z"/><rect x="461.0" y="459.4" width="9.6" height="9.6"/><rect x="461.1" y="455.0" width="9.6" height="9.6"/><rect x="460.8" y="461.7" width="9.6" height="9.6"/><rect x="460.9" y="450.3" width="9.6" height="9.6"/><rect x="461.0" y="455.0" width="9.6" height="9.6"/><rect x="461.0" y="447.3" width="9.6" height="9.6"/><rect x="460.9" y="459.9" width="9.6" height="9.6"/><rect x="460.8" y="449.6" width="9.6" height="9.6"/><rect x="460.3" y="456.2" width="9.6" height="9.6"/><rect x="460.5" y="451.2" width="9.6" height="9.6"/><path d="M461.0 451.1L461.35 454.8V463.8L461.0 467.5L460.64 463.8V454.8Z"/><path d="M461.0 452.0L461.33 455.5V464.0L461.0 467.5L460.66 464.0V455.5Z"/><rect x="464.2" y="451.8" width="9.6" height="9.6"/><rect x="464.7" y="456.9" width="9.6" height="9.6"/><rect x="463.9" y="442.0" width="9.6" height="9.6"/><rect x="464.5" y="459.8" width="9.6" height="9.6"/><rect x="464.5" y="449.3" width="9.6" height="9.6"/><rect x="464.3" y="465.1" width="9.6" height="9.6"/><rect x="464.5" y="451.9" width="9.6" height="9.6"/><rect x="464.4" y="451.8" width="9.6" height="9.6"/><rect x="463.6" y="443.0" width="9.6" height="9.6"/><rect x="464.2" y="471.2" width="9.6" height="9.6"/><path d="M464.7 445.8L465.19 452.8V470.0L464.7 477.0L464.15 470.0V452.8Z"/><path d="M464.7 449.3L465.15 453.2V462.9L464.7 466.9L464.18 462.9V453.2Z"/><rect x="467.0" y="463.2" width="9.6" height="9.6"/><rect x="467.4" y="457.8" width="9.6" height="9.6"/><rect x="467.9" y="451.2" width="9.6" height="9.6"/><rect x="467.6" y="449.7" width="9.6" height="9.6"/><rect x="467.7" y="451.3" width="9.6" height="9.6"/><rect x="467.6" y="448.9" width="9.6" height="9.6"/><rect x="467.3" y="467.6" width="9.6" height="9.6"/><rect x="468.1" y="455.1" width="9.6" height="9.6"/><rect x="467.5" y="446.7" width="9.6" height="9.6"/><rect x="467.1" y="436.9" width="9.6" height="9.6"/><path d="M467.4 440.7L467.83 447.3V463.4L467.4 469.9L467.06 463.4V447.3Z"/><path d="M467.4 447.7L467.80 451.7V461.3L467.4 465.3L467.09 461.3V451.7Z"/><rect x="470.6" y="458.2" width="9.6" height="9.6"/><rect x="471.1" y="443.4" width="9.6" height="9.6"/><rect x="471.7" y="455.3" width="9.6" height="9.6"/><rect x="470.5" y="439.9" width="9.6" height="9.6"/><rect x="470.9" y="436.1" width="9.6" height="9.6"/><rect x="471.2" y="440.5" width="9.6" height="9.6"/><rect x="471.2" y="433.2" width="9.6" height="9.6"/><rect x="470.9" y="444.9" width="9.6" height="9.6"/><rect x="470.7" y="471.9" width="9.6" height="9.6"/><rect x="470.4" y="452.1" width="9.6" height="9.6"/><path d="M470.4 446.6L470.80 453.1V469.0L470.4 475.6L470.04 469.0V453.1Z"/><path d="M470.4 449.6L470.78 454.0V464.6L470.4 469.0L470.07 464.6V454.0Z"/><rect x="474.7" y="457.4" width="9.6" height="9.6"/><rect x="474.5" y="444.2" width="9.6" height="9.6"/><rect x="473.9" y="441.1" width="9.6" height="9.6"/><rect x="474.5" y="451.8" width="9.6" height="9.6"/><rect x="474.3" y="443.5" width="9.6" height="9.6"/><rect x="474.3" y="467.9" width="9.6" height="9.6"/><rect x="474.6" y="452.3" width="9.6" height="9.6"/><rect x="474.4" y="460.8" width="9.6" height="9.6"/><rect x="474.2" y="436.7" width="9.6" height="9.6"/><rect x="474.4" y="449.4" width="9.6" height="9.6"/><path d="M474.1 440.5L474.70 445.1V456.5L474.1 461.2L473.45 456.5V445.1Z"/><path d="M474.1 442.1L474.66 446.4V456.9L474.1 461.2L473.49 456.9V446.4Z"/><rect x="477.4" y="442.9" width="9.6" height="9.6"/><rect x="477.6" y="466.4" width="9.6" height="9.6"/><rect x="477.7" y="446.4" width="9.6" height="9.6"/><rect x="477.2" y="449.7" width="9.6" height="9.6"/><rect x="477.4" y="444.2" width="9.6" height="9.6"/><rect x="477.8" y="451.4" width="9.6" height="9.6"/><rect x="477.5" y="429.8" width="9.6" height="9.6"/><rect x="477.3" y="440.1" width="9.6" height="9.6"/><rect x="477.8" y="448.6" width="9.6" height="9.6"/><rect x="477.5" y="450.5" width="9.6" height="9.6"/><path d="M477.3 440.8L478.03 446.9V461.8L477.3 467.9L476.65 461.8V446.9Z"/><path d="M477.3 444.6L477.98 448.0V456.4L477.3 459.8L476.70 456.4V448.0Z"/><rect x="480.5" y="454.7" width="9.6" height="9.6"/><rect x="481.0" y="449.8" width="9.6" height="9.6"/><rect x="481.1" y="442.8" width="9.6" height="9.6"/><rect x="481.1" y="444.0" width="9.6" height="9.6"/><rect x="480.9" y="450.2" width="9.6" height="9.6"/><rect x="481.2" y="436.6" width="9.6" height="9.6"/><rect x="480.9" y="455.6" width="9.6" height="9.6"/><rect x="480.7" y="465.7" width="9.6" height="9.6"/><rect x="480.8" y="440.5" width="9.6" height="9.6"/><rect x="480.8" y="433.4" width="9.6" height="9.6"/><path d="M481.0 437.2L481.65 444.9V463.7L481.0 471.5L480.36 463.7V444.9Z"/><path d="M481.0 439.0L481.61 444.1V456.7L481.0 461.8L480.40 456.7V444.1Z"/><rect x="484.2" y="437.7" width="9.6" height="9.6"/><rect x="484.4" y="464.3" width="9.6" height="9.6"/><rect x="484.3" y="445.9" width="9.6" height="9.6"/><rect x="484.2" y="456.2" width="9.6" height="9.6"/><rect x="484.5" y="433.6" width="9.6" height="9.6"/><rect x="484.4" y="443.0" width="9.6" height="9.6"/><rect x="484.5" y="441.9" width="9.6" height="9.6"/><rect x="484.0" y="430.4" width="9.6" height="9.6"/><rect x="484.5" y="439.4" width="9.6" height="9.6"/><rect x="484.5" y="428.5" width="9.6" height="9.6"/><path d="M484.1 433.4L484.58 441.4V461.0L484.1 469.0L483.63 461.0V441.4Z"/><path d="M484.1 443.4L484.55 447.3V456.9L484.1 460.9L483.66 456.9V447.3Z"/><rect x="487.7" y="451.0" width="9.6" height="9.6"/><rect x="487.9" y="450.3" width="9.6" height="9.6"/><rect x="487.9" y="455.0" width="9.6" height="9.6"/><rect x="487.1" y="453.8" width="9.6" height="9.6"/><rect x="487.0" y="433.8" width="9.6" height="9.6"/><rect x="487.1" y="448.0" width="9.6" height="9.6"/><rect x="487.9" y="463.1" width="9.6" height="9.6"/><rect x="487.9" y="446.3" width="9.6" height="9.6"/><rect x="487.8" y="450.9" width="9.6" height="9.6"/><rect x="487.5" y="462.3" width="9.6" height="9.6"/><path d="M487.3 438.8L487.97 445.6V462.1L487.3 468.9L486.58 462.1V445.6Z"/><path d="M487.3 447.3L487.93 451.6V462.2L487.3 466.6L486.62 462.2V451.6Z"/><rect x="490.9" y="459.0" width="9.6" height="9.6"/><rect x="490.4" y="452.0" width="9.6" height="9.6"/><rect x="490.5" y="464.9" width="9.6" height="9.6"/><rect x="490.7" y="463.9" width="9.6" height="9.6"/><rect x="490.8" y="437.3" width="9.6" height="9.6"/><rect x="491.1" y="439.3" width="9.6" height="9.6"/><rect x="491.0" y="451.4" width="9.6" height="9.6"/><rect x="490.5" y="467.1" width="9.6" height="9.6"/><rect x="490.5" y="448.8" width="9.6" height="9.6"/><rect x="491.1" y="464.3" width="9.6" height="9.6"/><path d="M490.4 441.1L491.17 445.7V456.8L490.4 461.3L489.73 456.8V445.7Z"/><path d="M490.4 444.2L491.12 448.0V457.5L490.4 461.3L489.78 457.5V448.0Z"/><rect x="494.3" y="428.4" width="9.6" height="9.6"/><rect x="493.8" y="456.1" width="9.6" height="9.6"/><rect x="493.9" y="440.7" width="9.6" height="9.6"/><rect x="493.9" y="463.9" width="9.6" height="9.6"/><rect x="493.9" y="461.1" width="9.6" height="9.6"/><rect x="494.2" y="427.0" width="9.6" height="9.6"/><rect x="494.4" y="456.5" width="9.6" height="9.6"/><rect x="494.3" y="439.5" width="9.6" height="9.6"/><rect x="494.1" y="448.7" width="9.6" height="9.6"/><rect x="493.4" y="463.6" width="9.6" height="9.6"/><path d="M494.2 436.8L494.80 444.2V462.3L494.2 469.7L493.55 462.3V444.2Z"/><path d="M494.2 442.8L494.76 448.1V460.8L494.2 466.0L493.60 460.8V448.1Z"/><rect x="497.1" y="437.6" width="9.6" height="9.6"/><rect x="497.4" y="429.6" width="9.6" height="9.6"/><rect x="497.4" y="452.2" width="9.6" height="9.6"/><rect x="497.6" y="432.6" width="9.6" height="9.6"/><rect x="497.5" y="430.2" width="9.6" height="9.6"/><rect x="497.7" y="456.7" width="9.6" height="9.6"/><rect x="497.4" y="437.2" width="9.6" height="9.6"/><rect x="497.0" y="450.8" width="9.6" height="9.6"/><rect x="497.6" y="439.8" width="9.6" height="9.6"/><rect x="497.1" y="452.0" width="9.6" height="9.6"/><path d="M497.3 433.4L498.02 440.0V455.9L497.3 462.5L496.54 455.9V440.0Z"/><path d="M497.3 437.9L497.97 443.0V455.3L497.3 460.4L496.59 455.3V443.0Z"/><rect x="499.2" y="412.7" width="9.6" height="9.6"/><rect x="500.7" y="466.5" width="9.6" height="9.6"/><rect x="500.9" y="447.8" width="9.6" height="9.6"/><rect x="500.6" y="448.6" width="9.6" height="9.6"/><rect x="500.7" y="443.1" width="9.6" height="9.6"/><rect x="500.7" y="462.8" width="9.6" height="9.6"/><rect x="501.0" y="444.2" width="9.6" height="9.6"/><rect x="500.9" y="455.2" width="9.6" height="9.6"/><rect x="501.0" y="449.3" width="9.6" height="9.6"/><rect x="500.9" y="457.1" width="9.6" height="9.6"/><rect x="501.3" y="437.2" width="9.6" height="9.6"/><path d="M501.0 441.0L501.64 448.0V464.9L501.0 471.9L500.32 464.9V448.0Z"/><path d="M501.0 446.4L501.60 451.8V464.9L501.0 470.2L500.36 464.9V451.8Z"/><rect x="504.4" y="433.6" width="9.6" height="9.6"/><rect x="504.4" y="429.4" width="9.6" height="9.6"/><rect x="504.4" y="452.8" width="9.6" height="9.6"/><rect x="504.1" y="447.6" width="9.6" height="9.6"/><rect x="504.1" y="439.0" width="9.6" height="9.6"/><rect x="504.3" y="436.1" width="9.6" height="9.6"/><rect x="504.1" y="458.3" width="9.6" height="9.6"/><rect x="504.0" y="448.3" width="9.6" height="9.6"/><rect x="504.2" y="452.9" width="9.6" height="9.6"/><rect x="503.7" y="429.4" width="9.6" height="9.6"/><path d="M503.6 436.5L504.39 442.7V457.9L503.6 464.1L502.79 457.9V442.7Z"/><path d="M503.6 445.2L504.34 449.4V459.8L503.6 464.1L502.84 459.8V449.4Z"/><rect x="506.9" y="460.7" width="9.6" height="9.6"/><rect x="507.6" y="431.5" width="9.6" height="9.6"/><rect x="507.3" y="463.6" width="9.6" height="9.6"/><rect x="507.3" y="461.7" width="9.6" height="9.6"/><rect x="506.9" y="444.1" width="9.6" height="9.6"/><rect x="507.4" y="458.5" width="9.6" height="9.6"/><rect x="507.3" y="448.2" width="9.6" height="9.6"/><rect x="507.5" y="433.7" width="9.6" height="9.6"/><rect x="507.7" y="460.8" width="9.6" height="9.6"/><rect x="507.3" y="438.0" width="9.6" height="9.6"/><path d="M507.2 435.3L507.87 441.6V457.2L507.2 463.6L506.56 457.2V441.6Z"/><path d="M507.2 436.6L507.82 441.8V454.4L507.2 459.6L506.61 454.4V441.8Z"/><rect x="510.2" y="412.2" width="9.6" height="9.6"/><rect x="510.9" y="451.8" width="9.6" height="9.6"/><rect x="510.7" y="455.0" width="9.6" height="9.6"/><rect x="510.5" y="443.0" width="9.6" height="9.6"/><rect x="510.8" y="459.6" width="9.6" height="9.6"/><rect x="511.6" y="460.3" width="9.6" height="9.6"/><rect x="510.5" y="447.3" width="9.6" height="9.6"/><rect x="511.2" y="441.3" width="9.6" height="9.6"/><rect x="510.7" y="463.7" width="9.6" height="9.6"/><rect x="510.8" y="461.8" width="9.6" height="9.6"/><rect x="510.6" y="444.0" width="9.6" height="9.6"/><path d="M511.1 445.1L511.83 450.6V464.0L511.1 469.5L510.35 464.0V450.6Z"/><path d="M511.1 445.1L511.78 449.7V461.0L511.1 465.6L510.40 461.0V449.7Z"/><rect x="514.2" y="442.3" width="9.6" height="9.6"/><rect x="514.4" y="467.8" width="9.6" height="9.6"/><rect x="514.3" y="458.2" width="9.6" height="9.6"/><rect x="514.2" y="452.1" width="9.6" height="9.6"/><rect x="514.1" y="428.4" width="9.6" height="9.6"/><rect x="514.0" y="449.5" width="9.6" height="9.6"/><rect x="513.8" y="441.3" width="9.6" height="9.6"/><rect x="514.5" y="435.6" width="9.6" height="9.6"/><rect x="513.8" y="450.0" width="9.6" height="9.6"/><rect x="514.2" y="442.5" width="9.6" height="9.6"/><path d="M514.1 435.4L514.52 443.3V462.7L514.1 470.6L513.71 462.7V443.3Z"/><path d="M514.1 444.0L514.49 449.0V461.3L514.1 466.4L513.73 461.3V449.0Z"/><rect x="517.5" y="455.9" width="9.6" height="9.6"/><rect x="517.7" y="443.0" width="9.6" height="9.6"/><rect x="517.3" y="445.4" width="9.6" height="9.6"/><rect x="517.4" y="450.7" width="9.6" height="9.6"/><rect x="517.4" y="456.6" width="9.6" height="9.6"/><rect x="517.4" y="454.1" width="9.6" height="9.6"/><rect x="517.6" y="457.4" width="9.6" height="9.6"/><rect x="517.1" y="455.2" width="9.6" height="9.6"/><rect x="516.8" y="459.0" width="9.6" height="9.6"/><rect x="517.2" y="443.1" width="9.6" height="9.6"/><path d="M517.3 446.8L517.93 450.9V460.7L517.3 464.8L516.61 460.7V450.9Z"/><path d="M517.3 446.8L517.88 450.9V460.7L517.3 464.8L516.65 460.7V450.9Z"/><rect x="518.2" y="500.2" width="9.6" height="9.6"/><rect x="520.6" y="448.9" width="9.6" height="9.6"/><rect x="520.7" y="457.2" width="9.6" height="9.6"/><rect x="521.0" y="437.9" width="9.6" height="9.6"/><rect x="520.1" y="445.9" width="9.6" height="9.6"/><rect x="520.9" y="464.4" width="9.6" height="9.6"/><rect x="521.2" y="466.5" width="9.6" height="9.6"/><rect x="520.9" y="450.0" width="9.6" height="9.6"/><rect x="521.5" y="453.4" width="9.6" height="9.6"/><rect x="520.9" y="452.9" width="9.6" height="9.6"/><rect x="520.5" y="455.5" width="9.6" height="9.6"/><path d="M520.4 441.7L520.84 447.6V462.0L520.4 467.8L519.86 462.0V447.6Z"/><path d="M520.4 444.3L520.81 448.7V459.4L520.4 463.8L519.89 459.4V448.7Z"/><rect x="524.4" y="443.9" width="9.6" height="9.6"/><rect x="524.3" y="450.0" width="9.6" height="9.6"/><rect x="523.9" y="449.1" width="9.6" height="9.6"/><rect x="523.8" y="439.1" width="9.6" height="9.6"/><rect x="524.0" y="439.6" width="9.6" height="9.6"/><rect x="523.9" y="467.6" width="9.6" height="9.6"/><rect x="524.3" y="455.8" width="9.6" height="9.6"/><rect x="524.1" y="443.4" width="9.6" height="9.6"/><rect x="523.8" y="448.2" width="9.6" height="9.6"/><rect x="524.1" y="437.7" width="9.6" height="9.6"/><path d="M523.8 442.5L524.60 448.5V463.2L523.8 469.2L523.04 463.2V448.5Z"/><path d="M523.8 445.8L524.54 450.8V463.2L523.8 468.2L523.09 463.2V450.8Z"/><rect x="527.5" y="445.1" width="9.6" height="9.6"/><rect x="527.4" y="451.7" width="9.6" height="9.6"/><rect x="527.7" y="444.0" width="9.6" height="9.6"/><rect x="527.5" y="452.0" width="9.6" height="9.6"/><rect x="527.3" y="428.2" width="9.6" height="9.6"/><rect x="527.7" y="445.3" width="9.6" height="9.6"/><rect x="527.5" y="445.3" width="9.6" height="9.6"/><rect x="527.6" y="460.1" width="9.6" height="9.6"/><rect x="526.9" y="445.2" width="9.6" height="9.6"/><rect x="527.6" y="435.9" width="9.6" height="9.6"/><path d="M527.7 432.0L528.13 439.0V456.0L527.7 462.9L527.30 456.0V439.0Z"/><path d="M527.7 439.3L528.11 443.9V455.0L527.7 459.6L527.33 455.0V443.9Z"/><rect x="530.5" y="447.6" width="9.6" height="9.6"/><rect x="530.5" y="444.8" width="9.6" height="9.6"/><rect x="531.0" y="438.6" width="9.6" height="9.6"/><rect x="530.2" y="468.0" width="9.6" height="9.6"/><rect x="530.8" y="463.4" width="9.6" height="9.6"/><rect x="530.5" y="458.7" width="9.6" height="9.6"/><rect x="531.0" y="424.2" width="9.6" height="9.6"/><rect x="530.4" y="453.7" width="9.6" height="9.6"/><rect x="530.3" y="452.9" width="9.6" height="9.6"/><rect x="530.7" y="460.4" width="9.6" height="9.6"/><path d="M530.6 431.9L530.99 441.3V464.3L530.6 473.8L530.21 464.3V441.3Z"/><path d="M530.6 439.1L530.97 444.5V457.5L530.6 462.8L530.24 457.5V444.5Z"/><rect x="533.8" y="445.1" width="9.6" height="9.6"/><rect x="533.8" y="440.3" width="9.6" height="9.6"/><rect x="534.2" y="454.5" width="9.6" height="9.6"/><rect x="534.2" y="459.7" width="9.6" height="9.6"/><rect x="534.1" y="446.7" width="9.6" height="9.6"/><rect x="534.2" y="451.3" width="9.6" height="9.6"/><rect x="534.0" y="436.3" width="9.6" height="9.6"/><rect x="533.9" y="449.5" width="9.6" height="9.6"/><rect x="534.4" y="463.4" width="9.6" height="9.6"/><rect x="533.8" y="447.5" width="9.6" height="9.6"/><path d="M533.8 443.1L534.49 449.0V463.4L533.8 469.2L533.14 463.4V449.0Z"/><path d="M533.8 444.0L534.45 448.0V457.8L533.8 461.8L533.18 457.8V448.0Z"/><rect x="536.8" y="464.9" width="9.6" height="9.6"/><rect x="537.0" y="440.8" width="9.6" height="9.6"/><rect x="537.6" y="428.7" width="9.6" height="9.6"/><rect x="536.9" y="468.5" width="9.6" height="9.6"/><rect x="537.1" y="453.1" width="9.6" height="9.6"/><rect x="537.3" y="453.0" width="9.6" height="9.6"/><rect x="537.5" y="443.7" width="9.6" height="9.6"/><rect x="537.6" y="453.6" width="9.6" height="9.6"/><rect x="537.4" y="454.3" width="9.6" height="9.6"/><rect x="537.5" y="447.1" width="9.6" height="9.6"/><path d="M537.5 435.2L538.02 443.7V464.2L537.5 472.6L536.97 464.2V443.7Z"/><path d="M537.5 446.7L537.98 451.1V461.7L537.5 466.1L537.01 461.7V451.1Z"/><rect x="538.2" y="486.7" width="9.6" height="9.6"/><rect x="541.2" y="439.9" width="9.6" height="9.6"/><rect x="540.4" y="431.5" width="9.6" height="9.6"/><rect x="540.8" y="453.7" width="9.6" height="9.6"/><rect x="540.6" y="442.3" width="9.6" height="9.6"/><rect x="541.0" y="455.0" width="9.6" height="9.6"/><rect x="540.5" y="443.6" width="9.6" height="9.6"/><rect x="540.8" y="435.4" width="9.6" height="9.6"/><rect x="540.5" y="453.0" width="9.6" height="9.6"/><rect x="540.5" y="457.7" width="9.6" height="9.6"/><rect x="540.8" y="444.3" width="9.6" height="9.6"/><path d="M540.9 438.9L541.44 444.4V457.9L540.9 463.5L540.38 457.9V444.4Z"/><path d="M540.9 445.1L541.40 448.9V458.3L540.9 462.2L540.41 458.3V448.9Z"/><rect x="543.2" y="419.7" width="9.6" height="9.6"/><rect x="543.8" y="453.9" width="9.6" height="9.6"/><rect x="544.0" y="464.8" width="9.6" height="9.6"/><rect x="544.2" y="461.3" width="9.6" height="9.6"/><rect x="543.4" y="453.0" width="9.6" height="9.6"/><rect x="543.3" y="441.6" width="9.6" height="9.6"/><rect x="544.0" y="456.9" width="9.6" height="9.6"/><rect x="544.3" y="431.8" width="9.6" height="9.6"/><rect x="543.9" y="454.1" width="9.6" height="9.6"/><rect x="543.4" y="444.9" width="9.6" height="9.6"/><rect x="543.8" y="466.1" width="9.6" height="9.6"/><path d="M543.8 436.6L544.33 444.3V463.1L543.8 470.9L543.32 463.1V444.3Z"/><path d="M543.8 441.8L544.29 446.6V458.2L543.8 462.9L543.36 458.2V446.6Z"/><rect x="547.6" y="446.5" width="9.6" height="9.6"/><rect x="547.1" y="448.0" width="9.6" height="9.6"/><rect x="547.1" y="447.9" width="9.6" height="9.6"/><rect x="546.9" y="453.5" width="9.6" height="9.6"/><rect x="547.4" y="438.8" width="9.6" height="9.6"/><rect x="547.2" y="448.6" width="9.6" height="9.6"/><rect x="547.1" y="435.9" width="9.6" height="9.6"/><rect x="547.1" y="450.1" width="9.6" height="9.6"/><rect x="547.7" y="456.9" width="9.6" height="9.6"/><rect x="547.5" y="453.5" width="9.6" height="9.6"/><path d="M547.2 439.7L547.63 444.9V457.5L547.2 462.7L546.78 457.5V444.9Z"/><path d="M547.2 446.1L547.60 449.8V458.9L547.2 462.7L546.80 458.9V449.8Z"/><rect x="551.1" y="457.5" width="9.6" height="9.6"/><rect x="550.8" y="431.7" width="9.6" height="9.6"/><rect x="550.7" y="436.3" width="9.6" height="9.6"/><rect x="551.1" y="452.4" width="9.6" height="9.6"/><rect x="550.7" y="444.3" width="9.6" height="9.6"/><rect x="550.7" y="444.6" width="9.6" height="9.6"/><rect x="550.7" y="446.4" width="9.6" height="9.6"/><rect x="551.3" y="458.9" width="9.6" height="9.6"/><rect x="550.9" y="447.7" width="9.6" height="9.6"/><rect x="550.8" y="469.7" width="9.6" height="9.6"/><path d="M550.4 439.5L550.88 445.8V461.4L550.4 467.8L550.00 461.4V445.8Z"/><path d="M550.4 446.8L550.85 451.3V462.4L550.4 466.9L550.03 462.4V451.3Z"/><rect x="553.8" y="452.3" width="9.6" height="9.6"/><rect x="554.3" y="436.3" width="9.6" height="9.6"/><rect x="554.0" y="442.1" width="9.6" height="9.6"/><rect x="554.4" y="448.6" width="9.6" height="9.6"/><rect x="554.5" y="465.0" width="9.6" height="9.6"/><rect x="554.2" y="474.6" width="9.6" height="9.6"/><rect x="554.1" y="449.6" width="9.6" height="9.6"/><rect x="553.8" y="464.1" width="9.6" height="9.6"/><rect x="553.8" y="467.9" width="9.6" height="9.6"/><rect x="554.2" y="451.9" width="9.6" height="9.6"/><path d="M553.9 444.2L554.45 450.6V466.1L553.9 472.5L553.39 466.1V450.6Z"/><path d="M553.9 444.2L554.42 449.7V462.9L553.9 468.4L553.42 462.9V449.7Z"/><rect x="557.3" y="449.5" width="9.6" height="9.6"/><rect x="556.9" y="444.0" width="9.6" height="9.6"/><rect x="556.9" y="449.0" width="9.6" height="9.6"/><rect x="558.0" y="438.3" width="9.6" height="9.6"/><rect x="557.1" y="443.8" width="9.6" height="9.6"/><rect x="557.3" y="457.7" width="9.6" height="9.6"/><rect x="556.9" y="437.3" width="9.6" height="9.6"/><rect x="557.1" y="462.9" width="9.6" height="9.6"/><rect x="557.3" y="469.1" width="9.6" height="9.6"/><rect x="557.5" y="447.2" width="9.6" height="9.6"/><path d="M557.4 445.5L557.87 452.1V468.3L557.4 474.9L556.95 468.3V452.1Z"/><path d="M557.4 446.6L557.84 451.6V464.0L557.4 469.0L556.98 464.0V451.6Z"/><rect x="560.5" y="472.1" width="9.6" height="9.6"/><rect x="560.4" y="454.8" width="9.6" height="9.6"/><rect x="560.4" y="442.4" width="9.6" height="9.6"/><rect x="560.6" y="457.7" width="9.6" height="9.6"/><rect x="560.6" y="460.0" width="9.6" height="9.6"/><rect x="560.8" y="467.7" width="9.6" height="9.6"/><rect x="560.5" y="460.6" width="9.6" height="9.6"/><rect x="560.3" y="452.8" width="9.6" height="9.6"/><rect x="560.4" y="465.3" width="9.6" height="9.6"/><rect x="560.3" y="448.4" width="9.6" height="9.6"/><path d="M560.5 446.2L561.05 453.3V470.8L560.5 477.9L560.01 470.8V453.3Z"/><path d="M560.5 449.0L561.02 452.9V462.4L560.5 466.3L560.05 462.4V452.9Z"/><rect x="563.4" y="475.0" width="9.6" height="9.6"/><rect x="563.9" y="451.8" width="9.6" height="9.6"/><rect x="564.2" y="451.6" width="9.6" height="9.6"/><rect x="563.9" y="454.5" width="9.6" height="9.6"/><rect x="563.5" y="452.2" width="9.6" height="9.6"/><rect x="563.5" y="455.8" width="9.6" height="9.6"/><rect x="563.9" y="448.5" width="9.6" height="9.6"/><rect x="564.0" y="442.6" width="9.6" height="9.6"/><rect x="563.8" y="473.7" width="9.6" height="9.6"/><rect x="563.9" y="447.8" width="9.6" height="9.6"/><path d="M563.9 450.4L564.53 456.3V470.9L563.9 476.8L563.24 470.9V456.3Z"/><path d="M563.9 450.4L564.49 455.3V467.4L563.9 472.3L563.28 467.4V455.3Z"/><rect x="567.6" y="457.7" width="9.6" height="9.6"/><rect x="567.5" y="455.2" width="9.6" height="9.6"/><rect x="567.1" y="463.3" width="9.6" height="9.6"/><rect x="566.9" y="452.7" width="9.6" height="9.6"/><rect x="567.2" y="474.8" width="9.6" height="9.6"/><rect x="567.3" y="461.4" width="9.6" height="9.6"/><rect x="567.0" y="465.8" width="9.6" height="9.6"/><rect x="567.4" y="454.4" width="9.6" height="9.6"/><rect x="567.2" y="440.4" width="9.6" height="9.6"/><rect x="567.5" y="456.2" width="9.6" height="9.6"/><path d="M567.2 448.1L567.61 454.6V470.5L567.2 477.0L566.81 470.5V454.6Z"/><path d="M567.2 452.3L567.58 457.1V468.6L567.2 473.3L566.84 468.6V457.1Z"/><rect x="570.8" y="471.6" width="9.6" height="9.6"/><rect x="570.5" y="452.0" width="9.6" height="9.6"/><rect x="570.6" y="451.6" width="9.6" height="9.6"/><rect x="570.9" y="452.6" width="9.6" height="9.6"/><rect x="570.5" y="447.8" width="9.6" height="9.6"/><rect x="570.1" y="470.5" width="9.6" height="9.6"/><rect x="570.6" y="446.3" width="9.6" height="9.6"/><rect x="571.3" y="469.5" width="9.6" height="9.6"/><rect x="570.7" y="442.2" width="9.6" height="9.6"/><rect x="570.6" y="447.8" width="9.6" height="9.6"/><path d="M570.4 446.0L570.94 452.5V468.5L570.4 475.1L569.92 468.5V452.5Z"/><path d="M570.4 453.6L570.91 457.1V465.7L570.4 469.2L569.95 465.7V457.1Z"/><rect x="573.7" y="450.0" width="9.6" height="9.6"/><rect x="573.7" y="457.8" width="9.6" height="9.6"/><rect x="574.2" y="442.5" width="9.6" height="9.6"/><rect x="574.0" y="470.2" width="9.6" height="9.6"/><rect x="573.3" y="443.6" width="9.6" height="9.6"/><rect x="574.5" y="463.6" width="9.6" height="9.6"/><rect x="573.6" y="462.3" width="9.6" height="9.6"/><rect x="573.3" y="457.0" width="9.6" height="9.6"/><rect x="573.5" y="470.6" width="9.6" height="9.6"/><rect x="573.7" y="443.8" width="9.6" height="9.6"/><path d="M573.8 446.8L574.29 453.5V469.8L573.8 476.4L573.29 469.8V453.5Z"/><path d="M573.8 452.7L574.25 456.4V465.6L573.8 469.4L573.33 465.6V456.4Z"/><rect x="577.0" y="458.7" width="9.6" height="9.6"/><rect x="577.0" y="458.1" width="9.6" height="9.6"/><rect x="577.0" y="446.5" width="9.6" height="9.6"/><rect x="577.1" y="465.5" width="9.6" height="9.6"/><rect x="577.6" y="472.1" width="9.6" height="9.6"/><rect x="576.9" y="465.9" width="9.6" height="9.6"/><rect x="577.3" y="464.2" width="9.6" height="9.6"/><rect x="578.2" y="466.2" width="9.6" height="9.6"/><rect x="576.8" y="458.3" width="9.6" height="9.6"/><rect x="576.9" y="465.9" width="9.6" height="9.6"/><path d="M577.2 455.8L577.84 460.7V472.9L577.2 477.9L576.59 472.9V460.7Z"/><path d="M577.2 459.2L577.80 463.1V472.5L577.2 476.3L576.63 472.5V463.1Z"/><rect x="580.6" y="461.7" width="9.6" height="9.6"/><rect x="580.8" y="453.1" width="9.6" height="9.6"/><rect x="580.5" y="456.7" width="9.6" height="9.6"/><rect x="580.1" y="465.5" width="9.6" height="9.6"/><rect x="580.5" y="464.8" width="9.6" height="9.6"/><rect x="580.6" y="460.3" width="9.6" height="9.6"/><rect x="580.8" y="444.8" width="9.6" height="9.6"/><rect x="579.7" y="460.1" width="9.6" height="9.6"/><rect x="580.4" y="443.6" width="9.6" height="9.6"/><rect x="580.8" y="464.6" width="9.6" height="9.6"/><path d="M580.5 448.0L581.11 453.2V466.0L580.5 471.3L579.81 466.0V453.2Z"/><path d="M580.5 454.7L581.06 458.4V467.5L580.5 471.3L579.85 467.5V458.4Z"/><rect x="583.9" y="450.7" width="9.6" height="9.6"/><rect x="583.8" y="475.7" width="9.6" height="9.6"/><rect x="583.8" y="462.7" width="9.6" height="9.6"/><rect x="584.6" y="448.2" width="9.6" height="9.6"/><rect x="583.9" y="467.5" width="9.6" height="9.6"/><rect x="583.7" y="454.3" width="9.6" height="9.6"/><rect x="583.7" y="468.2" width="9.6" height="9.6"/><rect x="584.2" y="446.1" width="9.6" height="9.6"/><rect x="583.8" y="460.5" width="9.6" height="9.6"/><rect x="584.1" y="441.0" width="9.6" height="9.6"/><path d="M584.1 445.5L584.59 453.6V473.4L584.1 481.5L583.53 473.4V453.6Z"/><path d="M584.1 454.4L584.56 459.4V471.5L584.1 476.5L583.57 471.5V459.4Z"/><rect x="587.0" y="460.1" width="9.6" height="9.6"/><rect x="587.4" y="442.1" width="9.6" height="9.6"/><rect x="587.4" y="459.5" width="9.6" height="9.6"/><rect x="587.0" y="450.2" width="9.6" height="9.6"/><rect x="586.9" y="457.0" width="9.6" height="9.6"/><rect x="587.9" y="470.8" width="9.6" height="9.6"/><rect x="587.3" y="468.2" width="9.6" height="9.6"/><rect x="587.6" y="463.7" width="9.6" height="9.6"/><rect x="587.3" y="457.9" width="9.6" height="9.6"/><rect x="587.5" y="453.0" width="9.6" height="9.6"/><path d="M586.8 449.7L587.50 455.7V470.6L586.8 476.6L586.10 470.6V455.7Z"/><path d="M586.8 456.0L587.45 459.5V467.9L586.8 471.4L586.14 467.9V459.5Z"/><rect x="590.6" y="460.8" width="9.6" height="9.6"/><rect x="590.9" y="456.0" width="9.6" height="9.6"/><rect x="590.3" y="458.0" width="9.6" height="9.6"/><rect x="590.1" y="462.3" width="9.6" height="9.6"/><rect x="590.9" y="463.6" width="9.6" height="9.6"/><rect x="590.5" y="461.9" width="9.6" height="9.6"/><rect x="590.7" y="447.0" width="9.6" height="9.6"/><rect x="590.8" y="469.2" width="9.6" height="9.6"/><rect x="590.4" y="449.3" width="9.6" height="9.6"/><rect x="590.2" y="455.5" width="9.6" height="9.6"/><path d="M590.8 450.8L591.22 456.3V469.5L590.8 475.0L590.48 469.5V456.3Z"/><path d="M590.8 458.3L591.20 461.7V469.9L590.8 473.2L590.50 469.9V461.7Z"/><rect x="591.2" y="431.2" width="9.6" height="9.6"/><rect x="592.2" y="439.2" width="9.6" height="9.6"/><rect x="594.2" y="466.4" width="9.6" height="9.6"/><rect x="594.2" y="447.1" width="9.6" height="9.6"/><rect x="593.8" y="469.9" width="9.6" height="9.6"/><rect x="593.8" y="479.8" width="9.6" height="9.6"/><rect x="593.8" y="459.4" width="9.6" height="9.6"/><rect x="593.5" y="462.2" width="9.6" height="9.6"/><rect x="594.1" y="453.5" width="9.6" height="9.6"/><rect x="594.3" y="467.2" width="9.6" height="9.6"/><rect x="593.5" y="480.5" width="9.6" height="9.6"/><rect x="593.6" y="467.9" width="9.6" height="9.6"/><path d="M594.1 450.9L594.63 458.5V477.0L594.1 484.5L593.54 477.0V458.5Z"/><path d="M594.1 460.2L594.59 464.3V474.5L594.1 478.6L593.58 474.5V464.3Z"/><rect x="597.4" y="476.9" width="9.6" height="9.6"/><rect x="597.0" y="465.8" width="9.6" height="9.6"/><rect x="597.5" y="455.2" width="9.6" height="9.6"/><rect x="596.8" y="458.7" width="9.6" height="9.6"/><rect x="597.2" y="473.8" width="9.6" height="9.6"/><rect x="598.0" y="476.1" width="9.6" height="9.6"/><rect x="597.2" y="461.8" width="9.6" height="9.6"/><rect x="596.6" y="454.8" width="9.6" height="9.6"/><rect x="596.8" y="467.1" width="9.6" height="9.6"/><rect x="596.7" y="477.2" width="9.6" height="9.6"/><path d="M597.2 458.6L597.61 463.3V475.0L597.2 479.7L596.75 475.0V463.3Z"/><path d="M597.2 460.2L597.58 464.3V474.2L597.2 478.2L596.78 474.2V464.3Z"/><rect x="599.2" y="443.2" width="9.6" height="9.6"/><rect x="599.2" y="492.2" width="9.6" height="9.6"/><rect x="600.5" y="448.4" width="9.6" height="9.6"/><rect x="600.9" y="481.8" width="9.6" height="9.6"/><rect x="600.7" y="457.2" width="9.6" height="9.6"/><rect x="601.0" y="464.8" width="9.6" height="9.6"/><rect x="600.6" y="461.0" width="9.6" height="9.6"/><rect x="600.4" y="475.1" width="9.6" height="9.6"/><rect x="600.2" y="474.3" width="9.6" height="9.6"/><rect x="600.6" y="473.2" width="9.6" height="9.6"/><rect x="599.9" y="479.8" width="9.6" height="9.6"/><rect x="601.0" y="464.8" width="9.6" height="9.6"/><path d="M600.4 452.2L601.04 459.7V478.3L600.4 485.9L599.83 478.3V459.7Z"/><path d="M600.4 460.4L601.00 465.2V477.1L600.4 481.9L599.87 477.1V465.2Z"/><rect x="603.3" y="456.5" width="9.6" height="9.6"/><rect x="604.0" y="483.0" width="9.6" height="9.6"/><rect x="603.7" y="482.8" width="9.6" height="9.6"/><rect x="604.4" y="476.2" width="9.6" height="9.6"/><rect x="604.2" y="493.3" width="9.6" height="9.6"/><rect x="603.4" y="483.0" width="9.6" height="9.6"/><rect x="603.5" y="461.4" width="9.6" height="9.6"/><rect x="603.7" y="457.5" width="9.6" height="9.6"/><rect x="604.0" y="486.1" width="9.6" height="9.6"/><rect x="603.9" y="470.3" width="9.6" height="9.6"/><path d="M603.8 460.3L604.45 468.5V488.7L603.8 497.0L603.21 488.7V468.5Z"/><path d="M603.8 470.2L604.41 474.3V484.1L603.8 488.2L603.25 484.1V474.3Z"/><rect x="607.5" y="467.5" width="9.6" height="9.6"/><rect x="607.0" y="473.9" width="9.6" height="9.6"/><rect x="606.8" y="477.4" width="9.6" height="9.6"/><rect x="606.9" y="473.0" width="9.6" height="9.6"/><rect x="607.0" y="471.2" width="9.6" height="9.6"/><rect x="607.4" y="469.9" width="9.6" height="9.6"/><rect x="606.5" y="454.9" width="9.6" height="9.6"/><rect x="607.1" y="480.7" width="9.6" height="9.6"/><rect x="607.1" y="473.2" width="9.6" height="9.6"/><rect x="607.6" y="475.3" width="9.6" height="9.6"/><path d="M607.2 460.4L607.73 465.5V478.3L607.2 483.5L606.70 478.3V465.5Z"/><path d="M607.2 465.8L607.70 469.8V479.5L607.2 483.5L606.73 479.5V469.8Z"/><rect x="610.5" y="482.8" width="9.6" height="9.6"/><rect x="610.3" y="467.8" width="9.6" height="9.6"/><rect x="610.8" y="456.0" width="9.6" height="9.6"/><rect x="610.4" y="458.6" width="9.6" height="9.6"/><rect x="610.2" y="485.6" width="9.6" height="9.6"/><rect x="610.1" y="475.7" width="9.6" height="9.6"/><rect x="610.4" y="486.4" width="9.6" height="9.6"/><rect x="610.4" y="450.8" width="9.6" height="9.6"/><rect x="611.0" y="448.4" width="9.6" height="9.6"/><rect x="610.2" y="472.2" width="9.6" height="9.6"/><path d="M610.2 455.4L610.91 462.5V479.7L610.2 486.8L609.57 479.7V462.5Z"/><path d="M610.2 466.0L610.86 470.0V479.5L610.2 483.5L609.62 479.5V470.0Z"/><rect x="611.2" y="503.2" width="9.6" height="9.6"/><rect x="614.0" y="473.1" width="9.6" height="9.6"/><rect x="613.7" y="459.5" width="9.6" height="9.6"/><rect x="613.9" y="481.4" width="9.6" height="9.6"/><rect x="613.9" y="462.9" width="9.6" height="9.6"/><rect x="613.1" y="455.4" width="9.6" height="9.6"/><rect x="614.1" y="460.2" width="9.6" height="9.6"/><rect x="613.9" y="466.9" width="9.6" height="9.6"/><rect x="613.5" y="458.4" width="9.6" height="9.6"/><rect x="614.3" y="464.1" width="9.6" height="9.6"/><rect x="613.6" y="461.4" width="9.6" height="9.6"/><path d="M613.5 459.2L614.16 465.5V480.9L613.5 487.2L612.80 480.9V465.5Z"/><path d="M613.5 466.3L614.11 469.7V477.9L613.5 481.3L612.84 477.9V469.7Z"/><rect x="614.2" y="432.7" width="9.6" height="9.6"/><rect x="616.9" y="462.7" width="9.6" height="9.6"/><rect x="617.5" y="474.2" width="9.6" height="9.6"/><rect x="617.1" y="460.6" width="9.6" height="9.6"/><rect x="617.0" y="485.9" width="9.6" height="9.6"/><rect x="616.9" y="461.0" width="9.6" height="9.6"/><rect x="616.6" y="471.3" width="9.6" height="9.6"/><rect x="617.7" y="466.0" width="9.6" height="9.6"/><rect x="616.9" y="468.0" width="9.6" height="9.6"/><rect x="617.1" y="476.1" width="9.6" height="9.6"/><rect x="617.2" y="461.1" width="9.6" height="9.6"/><path d="M617.1 464.4L617.48 469.2V481.0L617.1 485.8L616.64 481.0V469.2Z"/><path d="M617.1 464.4L617.45 468.4V478.2L617.1 482.3L616.67 478.2V468.4Z"/><rect x="620.7" y="452.6" width="9.6" height="9.6"/><rect x="620.5" y="472.3" width="9.6" height="9.6"/><rect x="619.8" y="466.2" width="9.6" height="9.6"/><rect x="620.7" y="452.3" width="9.6" height="9.6"/><rect x="620.0" y="467.5" width="9.6" height="9.6"/><rect x="620.7" y="472.8" width="9.6" height="9.6"/><rect x="620.2" y="477.4" width="9.6" height="9.6"/><rect x="619.9" y="471.2" width="9.6" height="9.6"/><rect x="620.4" y="449.7" width="9.6" height="9.6"/><rect x="620.3" y="467.0" width="9.6" height="9.6"/><path d="M620.4 455.4L621.02 461.6V476.6L620.4 482.8L619.73 476.6V461.6Z"/><path d="M620.4 463.8L620.98 467.7V477.3L620.4 481.2L619.78 477.3V467.7Z"/><rect x="623.0" y="449.0" width="9.6" height="9.6"/><rect x="623.7" y="447.4" width="9.6" height="9.6"/><rect x="623.5" y="475.8" width="9.6" height="9.6"/><rect x="624.1" y="469.9" width="9.6" height="9.6"/><rect x="623.7" y="467.2" width="9.6" height="9.6"/><rect x="623.7" y="459.4" width="9.6" height="9.6"/><rect x="623.3" y="478.7" width="9.6" height="9.6"/><rect x="623.6" y="468.3" width="9.6" height="9.6"/><rect x="623.7" y="469.2" width="9.6" height="9.6"/><rect x="624.2" y="467.5" width="9.6" height="9.6"/><path d="M623.7 451.8L624.27 459.2V477.1L623.7 484.5L623.21 477.1V459.2Z"/><path d="M623.7 459.5L624.24 464.0V475.1L623.7 479.6L623.24 475.1V464.0Z"/><rect x="624.2" y="432.7" width="9.6" height="9.6"/><rect x="627.3" y="454.7" width="9.6" height="9.6"/><rect x="627.4" y="454.4" width="9.6" height="9.6"/><rect x="626.8" y="469.9" width="9.6" height="9.6"/><rect x="627.1" y="462.7" width="9.6" height="9.6"/><rect x="627.0" y="457.5" width="9.6" height="9.6"/><rect x="627.1" y="454.8" width="9.6" height="9.6"/><rect x="627.3" y="465.5" width="9.6" height="9.6"/><rect x="627.0" y="459.7" width="9.6" height="9.6"/><rect x="626.9" y="471.1" width="9.6" height="9.6"/><rect x="627.1" y="465.8" width="9.6" height="9.6"/><path d="M627.0 459.4L627.44 463.3V473.0L627.0 476.9L626.65 473.0V463.3Z"/><path d="M627.0 463.2L627.42 466.3V473.8L627.0 476.9L626.67 473.8V466.3Z"/><rect x="630.0" y="472.2" width="9.6" height="9.6"/><rect x="630.7" y="452.6" width="9.6" height="9.6"/><rect x="630.4" y="480.9" width="9.6" height="9.6"/><rect x="630.2" y="457.8" width="9.6" height="9.6"/><rect x="630.3" y="477.3" width="9.6" height="9.6"/><rect x="630.0" y="469.7" width="9.6" height="9.6"/><rect x="630.5" y="462.1" width="9.6" height="9.6"/><rect x="630.5" y="477.1" width="9.6" height="9.6"/><rect x="629.9" y="459.2" width="9.6" height="9.6"/><rect x="630.5" y="489.5" width="9.6" height="9.6"/><path d="M629.7 456.4L630.32 465.1V486.6L629.7 495.3L629.12 486.6V465.1Z"/><path d="M629.7 464.0L630.28 467.7V476.8L629.7 480.4L629.16 476.8V467.7Z"/><rect x="633.8" y="457.2" width="9.6" height="9.6"/><rect x="633.6" y="482.6" width="9.6" height="9.6"/><rect x="633.4" y="465.0" width="9.6" height="9.6"/><rect x="633.7" y="455.5" width="9.6" height="9.6"/><rect x="633.8" y="462.6" width="9.6" height="9.6"/><rect x="633.7" y="472.0" width="9.6" height="9.6"/><rect x="633.2" y="473.4" width="9.6" height="9.6"/><rect x="633.4" y="468.2" width="9.6" height="9.6"/><rect x="633.6" y="469.0" width="9.6" height="9.6"/><rect x="634.2" y="476.4" width="9.6" height="9.6"/><path d="M634.0 459.3L634.48 465.3V480.1L634.0 486.1L633.48 480.1V465.3Z"/><path d="M634.0 464.1L634.45 467.3V475.3L634.0 478.5L633.51 475.3V467.3Z"/><rect x="635.2" y="496.2" width="9.6" height="9.6"/><rect x="637.5" y="459.3" width="9.6" height="9.6"/><rect x="636.9" y="454.7" width="9.6" height="9.6"/><rect x="637.1" y="470.7" width="9.6" height="9.6"/><rect x="637.2" y="462.8" width="9.6" height="9.6"/><rect x="636.7" y="470.5" width="9.6" height="9.6"/><rect x="637.8" y="452.0" width="9.6" height="9.6"/><rect x="637.4" y="469.0" width="9.6" height="9.6"/><rect x="637.5" y="474.4" width="9.6" height="9.6"/><rect x="637.6" y="468.1" width="9.6" height="9.6"/><rect x="637.4" y="470.9" width="9.6" height="9.6"/><path d="M636.9 461.2L637.52 465.5V475.9L636.9 480.2L636.30 475.9V465.5Z"/><path d="M636.9 461.2L637.48 465.4V475.6L636.9 479.8L636.34 475.6V465.4Z"/><rect x="637.7" y="515.7" width="9.6" height="9.6"/><rect x="640.4" y="473.9" width="9.6" height="9.6"/><rect x="640.2" y="462.0" width="9.6" height="9.6"/><rect x="640.6" y="480.2" width="9.6" height="9.6"/><rect x="640.4" y="456.3" width="9.6" height="9.6"/><rect x="640.4" y="466.2" width="9.6" height="9.6"/><rect x="640.0" y="468.3" width="9.6" height="9.6"/><rect x="640.1" y="474.8" width="9.6" height="9.6"/><rect x="640.2" y="468.5" width="9.6" height="9.6"/><rect x="640.3" y="464.2" width="9.6" height="9.6"/><rect x="639.9" y="464.9" width="9.6" height="9.6"/><path d="M640.1 460.1L640.70 465.1V477.4L640.1 482.4L639.50 477.4V465.1Z"/><path d="M640.1 464.3L640.66 468.0V477.1L640.1 480.8L639.54 477.1V468.0Z"/><rect x="644.0" y="457.3" width="9.6" height="9.6"/><rect x="643.5" y="462.7" width="9.6" height="9.6"/><rect x="643.5" y="460.6" width="9.6" height="9.6"/><rect x="643.8" y="454.0" width="9.6" height="9.6"/><rect x="643.4" y="464.3" width="9.6" height="9.6"/><rect x="644.3" y="469.7" width="9.6" height="9.6"/><rect x="643.9" y="461.2" width="9.6" height="9.6"/><rect x="644.1" y="476.5" width="9.6" height="9.6"/><rect x="643.6" y="475.0" width="9.6" height="9.6"/><rect x="644.0" y="465.5" width="9.6" height="9.6"/><path d="M643.8 457.8L644.21 463.1V476.1L643.8 481.4L643.42 476.1V463.1Z"/><path d="M643.8 462.8L644.19 465.6V472.7L643.8 475.5L643.45 472.7V465.6Z"/><rect x="647.0" y="472.7" width="9.6" height="9.6"/><rect x="647.4" y="474.3" width="9.6" height="9.6"/><rect x="646.8" y="458.5" width="9.6" height="9.6"/><rect x="646.6" y="470.0" width="9.6" height="9.6"/><rect x="646.9" y="470.5" width="9.6" height="9.6"/><rect x="647.3" y="473.1" width="9.6" height="9.6"/><rect x="646.2" y="476.7" width="9.6" height="9.6"/><rect x="646.8" y="485.1" width="9.6" height="9.6"/><rect x="646.8" y="486.1" width="9.6" height="9.6"/><rect x="647.0" y="477.0" width="9.6" height="9.6"/><path d="M647.6 462.3L648.05 468.9V485.3L647.6 491.9L647.05 485.3V468.9Z"/><path d="M647.6 468.1L648.02 471.8V480.9L647.6 484.6L647.09 480.9V471.8Z"/><rect x="650.3" y="479.8" width="9.6" height="9.6"/><rect x="650.2" y="477.5" width="9.6" height="9.6"/><rect x="650.2" y="483.6" width="9.6" height="9.6"/><rect x="650.4" y="465.0" width="9.6" height="9.6"/><rect x="650.5" y="475.8" width="9.6" height="9.6"/><rect x="650.7" y="456.0" width="9.6" height="9.6"/><rect x="650.4" y="459.6" width="9.6" height="9.6"/><rect x="650.2" y="474.2" width="9.6" height="9.6"/><rect x="650.7" y="470.0" width="9.6" height="9.6"/><rect x="650.1" y="466.5" width="9.6" height="9.6"/><path d="M650.2 459.8L650.59 466.5V482.8L650.2 489.4L649.76 482.8V466.5Z"/><path d="M650.2 465.8L650.56 469.6V478.8L650.2 482.5L649.79 478.8V469.6Z"/><rect x="652.2" y="493.2" width="9.6" height="9.6"/><rect x="654.0" y="477.1" width="9.6" height="9.6"/><rect x="654.0" y="481.5" width="9.6" height="9.6"/><rect x="653.8" y="467.8" width="9.6" height="9.6"/><rect x="654.1" y="479.6" width="9.6" height="9.6"/><rect x="653.5" y="481.4" width="9.6" height="9.6"/><rect x="654.3" y="478.5" width="9.6" height="9.6"/><rect x="653.1" y="487.2" width="9.6" height="9.6"/><rect x="653.6" y="467.0" width="9.6" height="9.6"/><rect x="654.1" y="458.9" width="9.6" height="9.6"/><rect x="653.4" y="469.7" width="9.6" height="9.6"/><path d="M653.4 464.2L653.83 469.9V483.7L653.4 489.3L653.06 483.7V469.9Z"/><path d="M653.4 466.2L653.81 470.5V481.1L653.4 485.5L653.09 481.1V470.5Z"/><rect x="657.2" y="453.7" width="9.6" height="9.6"/><rect x="656.6" y="476.0" width="9.6" height="9.6"/><rect x="656.6" y="476.4" width="9.6" height="9.6"/><rect x="656.6" y="469.3" width="9.6" height="9.6"/><rect x="657.2" y="476.9" width="9.6" height="9.6"/><rect x="656.9" y="468.9" width="9.6" height="9.6"/><rect x="657.1" y="461.6" width="9.6" height="9.6"/><rect x="657.1" y="478.7" width="9.6" height="9.6"/><rect x="656.8" y="477.2" width="9.6" height="9.6"/><rect x="657.0" y="472.1" width="9.6" height="9.6"/><path d="M657.1 458.8L657.52 464.2V477.2L657.1 482.5L656.66 477.2V464.2Z"/><path d="M657.1 464.4L657.49 467.6V475.4L657.1 478.7L656.69 475.4V467.6Z"/><rect x="659.9" y="466.6" width="9.6" height="9.6"/><rect x="660.0" y="483.3" width="9.6" height="9.6"/><rect x="660.3" y="478.3" width="9.6" height="9.6"/><rect x="660.3" y="466.7" width="9.6" height="9.6"/><rect x="660.1" y="457.5" width="9.6" height="9.6"/><rect x="660.4" y="485.2" width="9.6" height="9.6"/><rect x="660.7" y="455.7" width="9.6" height="9.6"/><rect x="660.7" y="476.4" width="9.6" height="9.6"/><rect x="660.3" y="465.5" width="9.6" height="9.6"/><rect x="660.5" y="465.2" width="9.6" height="9.6"/><path d="M660.5 459.5L661.04 466.6V483.9L660.5 491.0L659.87 483.9V466.6Z"/><path d="M660.5 463.0L661.00 467.1V477.1L660.5 481.2L659.91 477.1V467.1Z"/><rect x="663.0" y="474.9" width="9.6" height="9.6"/><rect x="663.3" y="460.5" width="9.6" height="9.6"/><rect x="663.3" y="471.3" width="9.6" height="9.6"/><rect x="663.5" y="461.8" width="9.6" height="9.6"/><rect x="663.5" y="464.6" width="9.6" height="9.6"/><rect x="663.9" y="471.6" width="9.6" height="9.6"/><rect x="663.6" y="460.5" width="9.6" height="9.6"/><rect x="663.6" y="461.8" width="9.6" height="9.6"/><rect x="663.4" y="456.0" width="9.6" height="9.6"/><rect x="663.5" y="479.5" width="9.6" height="9.6"/><path d="M663.3 460.1L664.07 465.2V477.7L663.3 482.8L662.57 477.7V465.2Z"/><path d="M663.3 466.9L664.02 470.0V477.6L663.3 480.7L662.62 477.6V470.0Z"/><rect x="665.2" y="420.2" width="9.6" height="9.6"/><rect x="666.9" y="467.2" width="9.6" height="9.6"/><rect x="667.0" y="480.6" width="9.6" height="9.6"/><rect x="666.3" y="462.7" width="9.6" height="9.6"/><rect x="667.1" y="468.2" width="9.6" height="9.6"/><rect x="666.9" y="456.2" width="9.6" height="9.6"/><rect x="667.0" y="473.5" width="9.6" height="9.6"/><rect x="666.4" y="474.6" width="9.6" height="9.6"/><rect x="667.1" y="464.8" width="9.6" height="9.6"/><rect x="667.3" y="469.0" width="9.6" height="9.6"/><rect x="666.5" y="468.6" width="9.6" height="9.6"/><path d="M667.1 461.1L667.86 466.8V480.7L667.1 486.4L666.44 480.7V466.8Z"/><path d="M667.1 466.9L667.81 469.9V477.1L667.1 480.1L666.49 477.1V469.9Z"/><rect x="670.2" y="455.4" width="9.6" height="9.6"/><rect x="670.4" y="480.5" width="9.6" height="9.6"/><rect x="670.5" y="476.7" width="9.6" height="9.6"/><rect x="671.0" y="455.4" width="9.6" height="9.6"/><rect x="670.1" y="478.1" width="9.6" height="9.6"/><rect x="670.4" y="479.9" width="9.6" height="9.6"/><rect x="670.2" y="469.1" width="9.6" height="9.6"/><rect x="670.6" y="465.4" width="9.6" height="9.6"/><rect x="670.2" y="482.2" width="9.6" height="9.6"/><rect x="670.2" y="456.0" width="9.6" height="9.6"/><path d="M670.6 459.2L671.18 465.6V481.5L670.6 488.0L670.11 481.5V465.6Z"/><path d="M670.6 466.7L671.14 470.0V478.0L670.6 481.3L670.15 478.0V470.0Z"/><rect x="673.6" y="460.1" width="9.6" height="9.6"/><rect x="673.4" y="474.4" width="9.6" height="9.6"/><rect x="674.2" y="461.5" width="9.6" height="9.6"/><rect x="673.3" y="471.3" width="9.6" height="9.6"/><rect x="673.9" y="458.4" width="9.6" height="9.6"/><rect x="673.8" y="471.9" width="9.6" height="9.6"/><rect x="673.5" y="464.3" width="9.6" height="9.6"/><rect x="673.6" y="469.2" width="9.6" height="9.6"/><rect x="672.9" y="467.4" width="9.6" height="9.6"/><rect x="673.1" y="469.9" width="9.6" height="9.6"/><path d="M673.4 462.2L674.06 466.3V476.1L673.4 480.2L672.78 476.1V466.3Z"/><path d="M673.4 465.2L674.02 468.4V476.1L673.4 479.3L672.83 476.1V468.4Z"/><rect x="676.8" y="475.3" width="9.6" height="9.6"/><rect x="677.2" y="469.1" width="9.6" height="9.6"/><rect x="676.7" y="462.6" width="9.6" height="9.6"/><rect x="676.9" y="463.8" width="9.6" height="9.6"/><rect x="676.5" y="483.8" width="9.6" height="9.6"/><rect x="676.6" y="462.3" width="9.6" height="9.6"/><rect x="677.2" y="458.8" width="9.6" height="9.6"/><rect x="677.5" y="463.0" width="9.6" height="9.6"/><rect x="676.8" y="461.5" width="9.6" height="9.6"/><rect x="677.0" y="470.8" width="9.6" height="9.6"/><path d="M676.5 462.6L677.03 468.7V483.5L676.5 489.6L675.99 483.5V468.7Z"/><path d="M676.5 463.6L676.99 467.1V475.8L676.5 479.4L676.03 475.8V467.1Z"/><rect x="678.2" y="445.2" width="9.6" height="9.6"/><rect x="680.1" y="472.8" width="9.6" height="9.6"/><rect x="679.8" y="465.0" width="9.6" height="9.6"/><rect x="680.6" y="464.5" width="9.6" height="9.6"/><rect x="679.8" y="465.9" width="9.6" height="9.6"/><rect x="680.2" y="455.9" width="9.6" height="9.6"/><rect x="679.7" y="467.9" width="9.6" height="9.6"/><rect x="680.3" y="469.7" width="9.6" height="9.6"/><rect x="680.1" y="468.8" width="9.6" height="9.6"/><rect x="680.2" y="478.5" width="9.6" height="9.6"/><rect x="680.3" y="463.0" width="9.6" height="9.6"/><path d="M680.0 459.7L680.47 465.2V478.7L680.0 484.2L679.54 478.7V465.2Z"/><path d="M680.0 462.1L680.44 466.3V476.4L680.0 480.6L679.57 476.4V466.3Z"/><rect x="683.5" y="463.7" width="9.6" height="9.6"/><rect x="683.3" y="479.0" width="9.6" height="9.6"/><rect x="683.5" y="470.3" width="9.6" height="9.6"/><rect x="683.6" y="457.4" width="9.6" height="9.6"/><rect x="683.9" y="470.9" width="9.6" height="9.6"/><rect x="683.3" y="473.2" width="9.6" height="9.6"/><rect x="683.0" y="478.9" width="9.6" height="9.6"/><rect x="683.7" y="468.1" width="9.6" height="9.6"/><rect x="683.4" y="476.9" width="9.6" height="9.6"/><rect x="683.5" y="458.6" width="9.6" height="9.6"/><path d="M683.8 461.2L684.48 466.5V479.5L683.8 484.7L683.09 479.5V466.5Z"/><path d="M683.8 465.7L684.43 469.0V477.0L683.8 480.2L683.14 477.0V469.0Z"/><rect x="686.9" y="478.7" width="9.6" height="9.6"/><rect x="686.8" y="464.3" width="9.6" height="9.6"/><rect x="686.7" y="466.6" width="9.6" height="9.6"/><rect x="687.1" y="476.4" width="9.6" height="9.6"/><rect x="687.3" y="468.9" width="9.6" height="9.6"/><rect x="687.1" y="467.2" width="9.6" height="9.6"/><rect x="686.5" y="464.5" width="9.6" height="9.6"/><rect x="686.6" y="461.0" width="9.6" height="9.6"/><rect x="686.8" y="479.5" width="9.6" height="9.6"/><rect x="686.7" y="459.9" width="9.6" height="9.6"/><path d="M686.7 463.7L687.51 468.2V479.1L686.7 483.5L685.97 479.1V468.2Z"/><path d="M686.7 466.3L687.46 469.6V477.7L686.7 481.0L686.02 477.7V469.6Z"/><rect x="690.6" y="464.1" width="9.6" height="9.6"/><rect x="689.8" y="476.4" width="9.6" height="9.6"/><rect x="690.1" y="471.1" width="9.6" height="9.6"/><rect x="690.1" y="463.0" width="9.6" height="9.6"/><rect x="690.4" y="464.2" width="9.6" height="9.6"/><rect x="689.7" y="464.4" width="9.6" height="9.6"/><rect x="690.7" y="464.5" width="9.6" height="9.6"/><rect x="690.4" y="462.8" width="9.6" height="9.6"/><rect x="689.8" y="472.6" width="9.6" height="9.6"/><rect x="690.6" y="467.6" width="9.6" height="9.6"/><path d="M690.2 466.6L690.92 470.1V478.7L690.2 482.2L689.51 478.7V470.1Z"/><path d="M690.2 466.6L690.87 468.7V473.8L690.2 475.8L689.56 473.8V468.7Z"/><rect x="693.9" y="457.4" width="9.6" height="9.6"/><rect x="693.8" y="460.6" width="9.6" height="9.6"/><rect x="693.2" y="455.4" width="9.6" height="9.6"/><rect x="693.0" y="466.8" width="9.6" height="9.6"/><rect x="693.3" y="461.7" width="9.6" height="9.6"/><rect x="693.6" y="479.2" width="9.6" height="9.6"/><rect x="693.9" y="466.0" width="9.6" height="9.6"/><rect x="693.8" y="465.8" width="9.6" height="9.6"/><rect x="693.4" y="462.9" width="9.6" height="9.6"/><rect x="693.4" y="478.1" width="9.6" height="9.6"/><path d="M693.1 459.2L693.63 465.0V479.2L693.1 485.0L692.53 479.2V465.0Z"/><path d="M693.1 465.3L693.60 468.1V475.1L693.1 477.9L692.57 475.1V468.1Z"/><rect x="696.7" y="473.6" width="9.6" height="9.6"/><rect x="696.6" y="459.1" width="9.6" height="9.6"/><rect x="696.4" y="472.3" width="9.6" height="9.6"/><rect x="696.9" y="485.2" width="9.6" height="9.6"/><rect x="697.0" y="458.2" width="9.6" height="9.6"/><rect x="696.6" y="457.8" width="9.6" height="9.6"/><rect x="697.1" y="462.0" width="9.6" height="9.6"/><rect x="696.9" y="480.2" width="9.6" height="9.6"/><rect x="696.8" y="460.1" width="9.6" height="9.6"/><rect x="696.7" y="472.7" width="9.6" height="9.6"/><path d="M696.8 461.6L697.59 468.2V484.4L696.8 491.0L696.04 484.4V468.2Z"/><path d="M696.8 467.3L697.54 471.4V481.2L696.8 485.2L696.09 481.2V471.4Z"/><rect x="697.2" y="431.2" width="9.6" height="9.6"/><rect x="697.2" y="440.2" width="9.6" height="9.6"/><rect x="700.6" y="460.7" width="9.6" height="9.6"/><rect x="699.7" y="472.0" width="9.6" height="9.6"/><rect x="700.0" y="479.6" width="9.6" height="9.6"/><rect x="700.1" y="465.4" width="9.6" height="9.6"/><rect x="700.8" y="479.1" width="9.6" height="9.6"/><rect x="699.9" y="481.5" width="9.6" height="9.6"/><rect x="700.2" y="474.9" width="9.6" height="9.6"/><rect x="700.2" y="468.6" width="9.6" height="9.6"/><rect x="700.0" y="462.6" width="9.6" height="9.6"/><rect x="700.1" y="479.1" width="9.6" height="9.6"/><path d="M700.2 464.5L700.77 469.4V481.6L700.2 486.6L699.65 481.6V469.4Z"/><path d="M700.2 466.2L700.74 469.7V478.2L700.2 481.7L699.69 478.2V469.7Z"/><rect x="703.9" y="459.2" width="9.6" height="9.6"/><rect x="703.3" y="460.0" width="9.6" height="9.6"/><rect x="703.7" y="463.0" width="9.6" height="9.6"/><rect x="703.9" y="475.6" width="9.6" height="9.6"/><rect x="703.5" y="458.8" width="9.6" height="9.6"/><rect x="703.7" y="461.8" width="9.6" height="9.6"/><rect x="703.7" y="480.6" width="9.6" height="9.6"/><rect x="703.2" y="482.7" width="9.6" height="9.6"/><rect x="703.0" y="470.3" width="9.6" height="9.6"/><rect x="703.7" y="477.8" width="9.6" height="9.6"/><path d="M703.7 462.6L704.25 468.1V481.6L703.7 487.1L703.18 481.6V468.1Z"/><path d="M703.7 462.6L704.21 466.8V477.0L703.7 481.1L703.22 477.0V466.8Z"/><rect x="707.0" y="481.4" width="9.6" height="9.6"/><rect x="707.1" y="462.8" width="9.6" height="9.6"/><rect x="707.0" y="461.5" width="9.6" height="9.6"/><rect x="706.7" y="479.9" width="9.6" height="9.6"/><rect x="706.5" y="463.0" width="9.6" height="9.6"/><rect x="707.0" y="453.5" width="9.6" height="9.6"/><rect x="706.9" y="480.7" width="9.6" height="9.6"/><rect x="706.3" y="461.4" width="9.6" height="9.6"/><rect x="706.8" y="466.2" width="9.6" height="9.6"/><rect x="706.4" y="454.2" width="9.6" height="9.6"/><path d="M706.6 457.3L707.08 463.1V477.3L706.6 483.1L706.07 477.3V463.1Z"/><path d="M706.6 462.7L707.04 467.2V478.1L706.6 482.6L706.10 478.1V467.2Z"/><rect x="709.9" y="466.5" width="9.6" height="9.6"/><rect x="710.3" y="461.6" width="9.6" height="9.6"/><rect x="709.9" y="461.4" width="9.6" height="9.6"/><rect x="709.9" y="467.9" width="9.6" height="9.6"/><rect x="710.1" y="472.2" width="9.6" height="9.6"/><rect x="710.5" y="453.0" width="9.6" height="9.6"/><rect x="710.3" y="472.7" width="9.6" height="9.6"/><rect x="710.1" y="462.1" width="9.6" height="9.6"/><rect x="710.4" y="475.8" width="9.6" height="9.6"/><rect x="710.0" y="467.6" width="9.6" height="9.6"/><path d="M710.1 461.0L710.78 465.6V477.0L710.1 481.6L709.40 477.0V465.6Z"/><path d="M710.1 463.3L710.73 467.2V476.8L710.1 480.8L709.44 476.8V467.2Z"/><rect x="713.7" y="470.5" width="9.6" height="9.6"/><rect x="712.9" y="469.5" width="9.6" height="9.6"/><rect x="713.8" y="456.1" width="9.6" height="9.6"/><rect x="713.6" y="466.3" width="9.6" height="9.6"/><rect x="713.3" y="485.9" width="9.6" height="9.6"/><rect x="713.2" y="468.3" width="9.6" height="9.6"/><rect x="713.4" y="459.9" width="9.6" height="9.6"/><rect x="712.6" y="474.4" width="9.6" height="9.6"/><rect x="713.4" y="470.4" width="9.6" height="9.6"/><rect x="713.9" y="484.2" width="9.6" height="9.6"/><path d="M713.2 459.9L713.61 467.0V484.5L713.2 491.7L712.75 484.5V467.0Z"/><path d="M713.2 468.1L713.58 472.8V484.5L713.2 489.3L712.78 484.5V472.8Z"/><rect x="716.7" y="447.8" width="9.6" height="9.6"/><rect x="716.8" y="457.7" width="9.6" height="9.6"/><rect x="717.1" y="481.2" width="9.6" height="9.6"/><rect x="716.4" y="463.9" width="9.6" height="9.6"/><rect x="716.6" y="456.6" width="9.6" height="9.6"/><rect x="716.7" y="462.5" width="9.6" height="9.6"/><rect x="716.9" y="449.7" width="9.6" height="9.6"/><rect x="716.6" y="479.2" width="9.6" height="9.6"/><rect x="716.9" y="473.4" width="9.6" height="9.6"/><rect x="716.9" y="462.5" width="9.6" height="9.6"/><path d="M717.0 454.2L717.66 461.6V479.7L717.0 487.0L716.42 479.7V461.6Z"/><path d="M717.0 459.8L717.61 464.8V477.1L717.0 482.2L716.46 477.1V464.8Z"/><rect x="720.0" y="462.7" width="9.6" height="9.6"/><rect x="719.8" y="461.6" width="9.6" height="9.6"/><rect x="720.4" y="467.2" width="9.6" height="9.6"/><rect x="719.5" y="446.9" width="9.6" height="9.6"/><rect x="719.7" y="464.5" width="9.6" height="9.6"/><rect x="720.2" y="453.3" width="9.6" height="9.6"/><rect x="720.5" y="467.7" width="9.6" height="9.6"/><rect x="720.1" y="462.7" width="9.6" height="9.6"/><rect x="720.0" y="463.8" width="9.6" height="9.6"/><rect x="719.9" y="461.3" width="9.6" height="9.6"/><path d="M720.2 450.7L720.86 455.9V468.3L720.2 473.5L719.63 468.3V455.9Z"/><path d="M720.2 462.2L720.81 464.7V470.9L720.2 473.5L719.67 470.9V464.7Z"/><rect x="723.5" y="474.0" width="9.6" height="9.6"/><rect x="723.2" y="456.0" width="9.6" height="9.6"/><rect x="723.6" y="466.6" width="9.6" height="9.6"/><rect x="723.3" y="464.6" width="9.6" height="9.6"/><rect x="723.3" y="464.6" width="9.6" height="9.6"/><rect x="723.4" y="452.6" width="9.6" height="9.6"/><rect x="722.8" y="461.2" width="9.6" height="9.6"/><rect x="723.4" y="453.9" width="9.6" height="9.6"/><rect x="723.2" y="474.7" width="9.6" height="9.6"/><rect x="723.4" y="475.8" width="9.6" height="9.6"/><path d="M723.3 456.4L723.82 462.0V475.9L723.3 481.6L722.72 475.9V462.0Z"/><path d="M723.3 466.0L723.78 468.8V475.4L723.3 478.1L722.75 475.4V468.8Z"/><rect x="726.4" y="461.1" width="9.6" height="9.6"/><rect x="726.7" y="471.4" width="9.6" height="9.6"/><rect x="726.6" y="468.6" width="9.6" height="9.6"/><rect x="726.3" y="463.5" width="9.6" height="9.6"/><rect x="726.3" y="453.6" width="9.6" height="9.6"/><rect x="726.8" y="470.2" width="9.6" height="9.6"/><rect x="727.0" y="470.6" width="9.6" height="9.6"/><rect x="726.5" y="468.8" width="9.6" height="9.6"/><rect x="726.8" y="476.3" width="9.6" height="9.6"/><rect x="726.5" y="467.0" width="9.6" height="9.6"/><path d="M726.5 462.7L727.14 467.1V477.7L726.5 482.1L725.82 477.7V467.1Z"/><path d="M726.5 466.3L727.09 469.0V475.6L726.5 478.3L725.87 475.6V469.0Z"/><rect x="730.2" y="477.4" width="9.6" height="9.6"/><rect x="730.0" y="468.4" width="9.6" height="9.6"/><rect x="730.3" y="462.7" width="9.6" height="9.6"/><rect x="729.7" y="467.1" width="9.6" height="9.6"/><rect x="730.0" y="464.7" width="9.6" height="9.6"/><rect x="729.8" y="467.8" width="9.6" height="9.6"/><rect x="730.0" y="467.3" width="9.6" height="9.6"/><rect x="730.4" y="470.4" width="9.6" height="9.6"/><rect x="730.5" y="469.7" width="9.6" height="9.6"/><rect x="730.2" y="471.1" width="9.6" height="9.6"/><path d="M730.4 466.5L730.82 470.3V479.5L730.4 483.2L729.92 479.5V470.3Z"/><path d="M730.4 466.7L730.79 470.2V478.7L730.4 482.2L729.95 478.7V470.2Z"/><rect x="733.2" y="462.2" width="9.6" height="9.6"/><rect x="733.6" y="465.6" width="9.6" height="9.6"/><rect x="733.5" y="470.4" width="9.6" height="9.6"/><rect x="733.1" y="466.4" width="9.6" height="9.6"/><rect x="733.7" y="457.9" width="9.6" height="9.6"/><rect x="733.5" y="474.5" width="9.6" height="9.6"/><rect x="733.4" y="465.6" width="9.6" height="9.6"/><rect x="733.5" y="458.8" width="9.6" height="9.6"/><rect x="733.2" y="474.0" width="9.6" height="9.6"/><rect x="733.1" y="458.2" width="9.6" height="9.6"/><path d="M733.6 461.7L734.08 465.9V476.1L733.6 480.3L733.09 476.1V465.9Z"/><path d="M733.6 461.7L734.04 464.8V472.3L733.6 475.3L733.13 472.3V464.8Z"/><rect x="737.0" y="454.7" width="9.6" height="9.6"/><rect x="736.5" y="465.7" width="9.6" height="9.6"/><rect x="736.8" y="457.1" width="9.6" height="9.6"/><rect x="736.8" y="464.7" width="9.6" height="9.6"/><rect x="736.5" y="470.9" width="9.6" height="9.6"/><rect x="736.5" y="469.7" width="9.6" height="9.6"/><rect x="736.7" y="455.8" width="9.6" height="9.6"/><rect x="736.8" y="476.2" width="9.6" height="9.6"/><rect x="736.2" y="468.6" width="9.6" height="9.6"/><rect x="736.7" y="451.6" width="9.6" height="9.6"/><path d="M737.2 455.9L737.77 461.8V476.2L737.2 482.0L736.63 476.2V461.8Z"/><path d="M737.2 465.5L737.74 468.6V475.9L737.2 478.9L736.67 475.9V468.6Z"/><rect x="740.2" y="455.7" width="9.6" height="9.6"/><rect x="739.6" y="468.3" width="9.6" height="9.6"/><rect x="739.9" y="462.8" width="9.6" height="9.6"/><rect x="739.7" y="463.9" width="9.6" height="9.6"/><rect x="739.9" y="445.4" width="9.6" height="9.6"/><rect x="740.4" y="451.9" width="9.6" height="9.6"/><rect x="740.1" y="478.1" width="9.6" height="9.6"/><rect x="739.7" y="474.7" width="9.6" height="9.6"/><rect x="740.3" y="457.8" width="9.6" height="9.6"/><rect x="740.1" y="462.1" width="9.6" height="9.6"/><path d="M740.1 452.7L740.65 459.7V476.9L740.1 483.9L739.56 476.9V459.7Z"/><path d="M740.1 457.0L740.61 461.0V470.9L740.1 474.9L739.60 470.9V461.0Z"/><rect x="743.3" y="470.4" width="9.6" height="9.6"/><rect x="743.3" y="456.0" width="9.6" height="9.6"/><rect x="742.8" y="475.8" width="9.6" height="9.6"/><rect x="743.4" y="457.2" width="9.6" height="9.6"/><rect x="743.4" y="461.2" width="9.6" height="9.6"/><rect x="743.7" y="460.1" width="9.6" height="9.6"/><rect x="743.2" y="447.9" width="9.6" height="9.6"/><rect x="742.9" y="446.4" width="9.6" height="9.6"/><rect x="743.2" y="467.1" width="9.6" height="9.6"/><rect x="743.2" y="447.8" width="9.6" height="9.6"/><path d="M743.2 450.2L743.90 455.8V469.3L743.2 474.8L742.49 469.3V455.8Z"/><path d="M743.2 452.2L743.86 457.3V469.7L743.2 474.8L742.54 469.7V457.3Z"/><rect x="746.5" y="444.3" width="9.6" height="9.6"/><rect x="746.8" y="448.1" width="9.6" height="9.6"/><rect x="746.9" y="459.2" width="9.6" height="9.6"/><rect x="746.8" y="465.3" width="9.6" height="9.6"/><rect x="746.8" y="458.2" width="9.6" height="9.6"/><rect x="747.2" y="452.9" width="9.6" height="9.6"/><rect x="746.5" y="449.7" width="9.6" height="9.6"/><rect x="746.9" y="468.1" width="9.6" height="9.6"/><rect x="746.7" y="448.9" width="9.6" height="9.6"/><rect x="746.6" y="471.0" width="9.6" height="9.6"/><path d="M746.6 448.6L747.40 454.9V470.5L746.6 476.8L745.88 470.5V454.9Z"/><path d="M746.6 454.0L747.35 457.8V467.0L746.6 470.8L745.93 467.0V457.8Z"/><rect x="750.3" y="455.3" width="9.6" height="9.6"/><rect x="750.2" y="442.8" width="9.6" height="9.6"/><rect x="749.6" y="472.4" width="9.6" height="9.6"/><rect x="749.8" y="470.8" width="9.6" height="9.6"/><rect x="749.7" y="456.6" width="9.6" height="9.6"/><rect x="750.1" y="451.2" width="9.6" height="9.6"/><rect x="749.9" y="460.6" width="9.6" height="9.6"/><rect x="749.8" y="451.0" width="9.6" height="9.6"/><rect x="750.4" y="466.7" width="9.6" height="9.6"/><rect x="750.2" y="443.6" width="9.6" height="9.6"/><path d="M750.1 448.7L750.54 454.3V467.9L750.1 473.5L749.71 467.9V454.3Z"/><path d="M750.1 451.2L750.51 454.3V461.7L750.1 464.8L749.74 461.7V454.3Z"/><rect x="753.5" y="443.8" width="9.6" height="9.6"/><rect x="753.2" y="468.7" width="9.6" height="9.6"/><rect x="753.3" y="464.7" width="9.6" height="9.6"/><rect x="753.5" y="454.0" width="9.6" height="9.6"/><rect x="753.3" y="465.7" width="9.6" height="9.6"/><rect x="752.9" y="449.7" width="9.6" height="9.6"/><rect x="753.4" y="455.3" width="9.6" height="9.6"/><rect x="753.7" y="464.0" width="9.6" height="9.6"/><rect x="753.5" y="459.2" width="9.6" height="9.6"/><rect x="752.6" y="463.9" width="9.6" height="9.6"/><path d="M753.4 447.6L754.09 453.7V468.4L753.4 474.5L752.78 468.4V453.7Z"/><path d="M753.4 447.6L754.05 452.3V463.7L753.4 468.4L752.82 463.7V452.3Z"/><rect x="757.3" y="457.8" width="9.6" height="9.6"/><rect x="756.1" y="447.0" width="9.6" height="9.6"/><rect x="756.9" y="438.8" width="9.6" height="9.6"/><rect x="756.8" y="444.9" width="9.6" height="9.6"/><rect x="756.8" y="445.6" width="9.6" height="9.6"/><rect x="756.5" y="447.8" width="9.6" height="9.6"/><rect x="757.0" y="462.9" width="9.6" height="9.6"/><rect x="756.8" y="450.0" width="9.6" height="9.6"/><rect x="756.2" y="450.0" width="9.6" height="9.6"/><rect x="756.8" y="456.8" width="9.6" height="9.6"/><path d="M756.9 442.6L757.40 448.5V462.9L756.9 468.7L756.47 462.9V448.5Z"/><path d="M756.9 451.0L757.37 455.0V464.7L756.9 468.7L756.50 464.7V455.0Z"/><rect x="759.6" y="451.8" width="9.6" height="9.6"/><rect x="759.8" y="459.8" width="9.6" height="9.6"/><rect x="759.9" y="466.3" width="9.6" height="9.6"/><rect x="760.4" y="453.9" width="9.6" height="9.6"/><rect x="759.8" y="454.7" width="9.6" height="9.6"/><rect x="760.0" y="463.2" width="9.6" height="9.6"/><rect x="759.8" y="452.4" width="9.6" height="9.6"/><rect x="760.0" y="470.0" width="9.6" height="9.6"/><rect x="760.0" y="452.4" width="9.6" height="9.6"/><rect x="759.9" y="453.5" width="9.6" height="9.6"/><path d="M759.7 455.6L760.44 460.1V471.2L759.7 475.8L758.93 471.2V460.1Z"/><path d="M759.7 455.9L760.39 459.3V467.4L759.7 470.8L758.98 467.4V459.3Z"/><rect x="763.2" y="454.8" width="9.6" height="9.6"/><rect x="763.8" y="452.1" width="9.6" height="9.6"/><rect x="763.2" y="463.7" width="9.6" height="9.6"/><rect x="763.4" y="453.0" width="9.6" height="9.6"/><rect x="763.6" y="463.9" width="9.6" height="9.6"/><rect x="763.6" y="468.5" width="9.6" height="9.6"/><rect x="763.4" y="449.5" width="9.6" height="9.6"/><rect x="763.0" y="452.9" width="9.6" height="9.6"/><rect x="762.8" y="448.8" width="9.6" height="9.6"/><rect x="762.6" y="457.9" width="9.6" height="9.6"/><path d="M763.3 452.6L763.74 457.5V469.4L763.3 474.3L762.83 469.4V457.5Z"/><path d="M763.3 452.6L763.71 456.3V465.5L763.3 469.3L762.86 465.5V456.3Z"/><rect x="766.8" y="453.7" width="9.6" height="9.6"/><rect x="766.5" y="449.0" width="9.6" height="9.6"/><rect x="766.3" y="461.2" width="9.6" height="9.6"/><rect x="766.2" y="461.0" width="9.6" height="9.6"/><rect x="766.5" y="470.3" width="9.6" height="9.6"/><rect x="767.1" y="457.1" width="9.6" height="9.6"/><rect x="766.5" y="457.3" width="9.6" height="9.6"/><rect x="767.0" y="469.3" width="9.6" height="9.6"/><rect x="766.7" y="461.9" width="9.6" height="9.6"/><rect x="766.7" y="461.2" width="9.6" height="9.6"/><path d="M767.1 452.8L767.78 457.3V468.3L767.1 472.8L766.34 468.3V457.3Z"/><path d="M767.1 455.4L767.73 458.8V467.1L767.1 470.5L766.39 467.1V458.8Z"/><rect x="769.6" y="464.8" width="9.6" height="9.6"/><rect x="770.2" y="462.7" width="9.6" height="9.6"/><rect x="769.6" y="458.2" width="9.6" height="9.6"/><rect x="769.8" y="460.6" width="9.6" height="9.6"/><rect x="770.3" y="462.3" width="9.6" height="9.6"/><rect x="770.2" y="456.9" width="9.6" height="9.6"/><rect x="769.5" y="469.9" width="9.6" height="9.6"/><rect x="769.8" y="459.6" width="9.6" height="9.6"/><rect x="769.7" y="446.8" width="9.6" height="9.6"/><rect x="769.8" y="460.3" width="9.6" height="9.6"/><path d="M769.8 450.6L770.22 456.0V469.1L769.8 474.4L769.37 469.1V456.0Z"/><path d="M769.8 455.6L770.20 458.3V464.9L769.8 467.6L769.40 464.9V458.3Z"/><rect x="773.3" y="454.0" width="9.6" height="9.6"/><rect x="773.3" y="466.3" width="9.6" height="9.6"/><rect x="772.6" y="469.4" width="9.6" height="9.6"/><rect x="773.6" y="447.5" width="9.6" height="9.6"/><rect x="773.4" y="460.5" width="9.6" height="9.6"/><rect x="773.2" y="462.6" width="9.6" height="9.6"/><rect x="773.3" y="456.4" width="9.6" height="9.6"/><rect x="773.3" y="446.1" width="9.6" height="9.6"/><rect x="773.4" y="455.6" width="9.6" height="9.6"/><rect x="773.0" y="466.0" width="9.6" height="9.6"/><path d="M773.3 449.9L773.86 455.5V469.2L773.3 474.9L772.80 469.2V455.5Z"/><path d="M773.3 455.1L773.83 457.8V464.4L773.3 467.2L772.83 464.4V457.8Z"/><rect x="776.2" y="530.2" width="9.6" height="9.6"/><rect x="776.2" y="536.2" width="9.6" height="9.6"/><rect x="776.2" y="543.2" width="9.6" height="9.6"/><rect x="777.1" y="461.1" width="9.6" height="9.6"/><rect x="776.7" y="462.0" width="9.6" height="9.6"/><rect x="776.8" y="455.6" width="9.6" height="9.6"/><rect x="777.0" y="456.9" width="9.6" height="9.6"/><rect x="776.3" y="466.5" width="9.6" height="9.6"/><rect x="776.1" y="451.6" width="9.6" height="9.6"/><rect x="776.8" y="457.2" width="9.6" height="9.6"/><rect x="776.7" y="464.3" width="9.6" height="9.6"/><rect x="777.1" y="461.4" width="9.6" height="9.6"/><rect x="776.7" y="449.1" width="9.6" height="9.6"/><path d="M776.1 452.9L776.76 457.3V467.9L776.1 472.3L775.51 467.9V457.3Z"/><path d="M776.1 452.9L776.72 456.7V465.9L776.1 469.6L775.55 465.9V456.7Z"/><rect x="779.8" y="454.1" width="9.6" height="9.6"/><rect x="780.0" y="450.0" width="9.6" height="9.6"/><rect x="779.6" y="447.3" width="9.6" height="9.6"/><rect x="779.8" y="451.7" width="9.6" height="9.6"/><rect x="780.1" y="453.6" width="9.6" height="9.6"/><rect x="780.0" y="441.6" width="9.6" height="9.6"/><rect x="780.0" y="457.3" width="9.6" height="9.6"/><rect x="780.3" y="467.1" width="9.6" height="9.6"/><rect x="779.5" y="459.9" width="9.6" height="9.6"/><rect x="780.1" y="460.6" width="9.6" height="9.6"/><path d="M780.0 445.4L780.35 451.6V466.7L780.0 472.9L779.57 466.7V451.6Z"/><path d="M780.0 450.1L780.32 453.8V462.9L780.0 466.7L779.60 462.9V453.8Z"/><rect x="782.7" y="457.6" width="9.6" height="9.6"/><rect x="783.5" y="450.0" width="9.6" height="9.6"/><rect x="782.7" y="445.6" width="9.6" height="9.6"/><rect x="782.4" y="444.6" width="9.6" height="9.6"/><rect x="783.7" y="457.2" width="9.6" height="9.6"/><rect x="783.2" y="465.6" width="9.6" height="9.6"/><rect x="783.0" y="441.2" width="9.6" height="9.6"/><rect x="783.0" y="451.4" width="9.6" height="9.6"/><rect x="783.2" y="439.4" width="9.6" height="9.6"/><rect x="783.6" y="446.1" width="9.6" height="9.6"/><path d="M782.9 443.2L783.42 449.6V465.1L782.9 471.4L782.48 465.1V449.6Z"/><path d="M782.9 449.5L783.38 453.5V463.3L782.9 467.4L782.51 463.3V453.5Z"/><rect x="786.8" y="452.7" width="9.6" height="9.6"/><rect x="786.4" y="455.8" width="9.6" height="9.6"/><rect x="786.9" y="448.8" width="9.6" height="9.6"/><rect x="787.1" y="465.8" width="9.6" height="9.6"/><rect x="786.4" y="451.2" width="9.6" height="9.6"/><rect x="786.9" y="464.1" width="9.6" height="9.6"/><rect x="786.7" y="467.0" width="9.6" height="9.6"/><rect x="786.7" y="453.6" width="9.6" height="9.6"/><rect x="786.3" y="435.8" width="9.6" height="9.6"/><rect x="787.0" y="457.4" width="9.6" height="9.6"/><path d="M786.7 443.7L787.38 450.2V465.9L786.7 472.4L785.99 465.9V450.2Z"/><path d="M786.7 448.6L787.33 451.9V459.9L786.7 463.2L786.04 459.9V451.9Z"/><rect x="787.2" y="404.2" width="9.6" height="9.6"/><rect x="789.7" y="459.3" width="9.6" height="9.6"/><rect x="789.8" y="452.7" width="9.6" height="9.6"/><rect x="790.1" y="447.0" width="9.6" height="9.6"/><rect x="789.7" y="461.0" width="9.6" height="9.6"/><rect x="789.6" y="453.9" width="9.6" height="9.6"/><rect x="790.1" y="458.0" width="9.6" height="9.6"/><rect x="789.7" y="452.2" width="9.6" height="9.6"/><rect x="789.9" y="468.9" width="9.6" height="9.6"/><rect x="789.4" y="462.1" width="9.6" height="9.6"/><rect x="789.3" y="464.4" width="9.6" height="9.6"/><path d="M790.1 450.8L790.49 455.8V467.8L790.1 472.7L789.67 467.8V455.8Z"/><path d="M790.1 450.8L790.46 454.3V462.8L790.1 466.2L789.69 462.8V454.3Z"/><rect x="793.1" y="457.0" width="9.6" height="9.6"/><rect x="793.4" y="449.9" width="9.6" height="9.6"/><rect x="793.2" y="449.2" width="9.6" height="9.6"/><rect x="793.6" y="451.5" width="9.6" height="9.6"/><rect x="793.2" y="461.4" width="9.6" height="9.6"/><rect x="793.2" y="445.1" width="9.6" height="9.6"/><rect x="792.7" y="461.6" width="9.6" height="9.6"/><rect x="792.9" y="450.6" width="9.6" height="9.6"/><rect x="793.1" y="453.3" width="9.6" height="9.6"/><rect x="793.1" y="453.4" width="9.6" height="9.6"/><path d="M792.9 448.9L793.34 453.1V463.3L792.9 467.4L792.53 463.3V453.1Z"/><path d="M792.9 448.9L793.31 451.5V457.7L792.9 460.3L792.56 457.7V451.5Z"/><rect x="795.2" y="412.7" width="9.6" height="9.6"/><rect x="796.5" y="455.6" width="9.6" height="9.6"/><rect x="797.0" y="438.2" width="9.6" height="9.6"/><rect x="796.5" y="443.1" width="9.6" height="9.6"/><rect x="796.4" y="449.7" width="9.6" height="9.6"/><rect x="796.5" y="456.5" width="9.6" height="9.6"/><rect x="796.2" y="451.1" width="9.6" height="9.6"/><rect x="796.1" y="445.3" width="9.6" height="9.6"/><rect x="796.9" y="449.9" width="9.6" height="9.6"/><rect x="796.4" y="439.6" width="9.6" height="9.6"/><rect x="795.9" y="437.3" width="9.6" height="9.6"/><path d="M797.0 441.1L797.71 445.9V457.6L797.0 462.3L796.30 457.6V445.9Z"/><path d="M797.0 445.3L797.66 448.8V457.5L797.0 461.0L796.34 457.5V448.8Z"/><rect x="799.7" y="434.5" width="9.6" height="9.6"/><rect x="800.1" y="434.1" width="9.6" height="9.6"/><rect x="799.6" y="453.1" width="9.6" height="9.6"/><rect x="799.9" y="454.7" width="9.6" height="9.6"/><rect x="799.9" y="471.9" width="9.6" height="9.6"/><rect x="799.5" y="442.7" width="9.6" height="9.6"/><rect x="799.7" y="441.2" width="9.6" height="9.6"/><rect x="800.4" y="459.3" width="9.6" height="9.6"/><rect x="800.1" y="443.3" width="9.6" height="9.6"/><rect x="799.8" y="468.0" width="9.6" height="9.6"/><path d="M800.2 441.1L800.78 449.3V469.5L800.2 477.7L799.54 469.5V449.3Z"/><path d="M800.2 449.7L800.74 453.3V462.0L800.2 465.6L799.58 462.0V453.3Z"/><rect x="803.5" y="441.3" width="9.6" height="9.6"/><rect x="803.4" y="467.0" width="9.6" height="9.6"/><rect x="803.1" y="457.1" width="9.6" height="9.6"/><rect x="803.4" y="457.3" width="9.6" height="9.6"/><rect x="803.5" y="439.5" width="9.6" height="9.6"/><rect x="802.9" y="452.0" width="9.6" height="9.6"/><rect x="803.1" y="429.0" width="9.6" height="9.6"/><rect x="803.2" y="467.0" width="9.6" height="9.6"/><rect x="803.1" y="436.3" width="9.6" height="9.6"/><rect x="802.9" y="430.6" width="9.6" height="9.6"/><path d="M803.0 436.8L803.42 442.6V456.9L803.0 462.8L802.67 456.9V442.6Z"/><path d="M803.0 442.7L803.40 446.4V455.5L803.0 459.2L802.70 455.5V446.4Z"/><rect x="806.9" y="455.8" width="9.6" height="9.6"/><rect x="806.7" y="452.0" width="9.6" height="9.6"/><rect x="807.1" y="454.2" width="9.6" height="9.6"/><rect x="806.7" y="456.6" width="9.6" height="9.6"/><rect x="806.1" y="455.1" width="9.6" height="9.6"/><rect x="806.2" y="430.8" width="9.6" height="9.6"/><rect x="806.5" y="433.9" width="9.6" height="9.6"/><rect x="806.6" y="430.5" width="9.6" height="9.6"/><rect x="806.7" y="437.8" width="9.6" height="9.6"/><rect x="806.3" y="440.0" width="9.6" height="9.6"/><path d="M806.2 438.1L806.83 443.6V456.9L806.2 462.4L805.62 456.9V443.6Z"/><path d="M806.2 443.5L806.79 447.7V458.1L806.2 462.4L805.66 458.1V447.7Z"/><rect x="809.6" y="450.1" width="9.6" height="9.6"/><rect x="810.0" y="435.3" width="9.6" height="9.6"/><rect x="809.5" y="428.8" width="9.6" height="9.6"/><rect x="809.8" y="440.1" width="9.6" height="9.6"/><rect x="809.3" y="452.1" width="9.6" height="9.6"/><rect x="809.6" y="449.9" width="9.6" height="9.6"/><rect x="810.1" y="433.3" width="9.6" height="9.6"/><rect x="810.2" y="440.1" width="9.6" height="9.6"/><rect x="809.5" y="462.3" width="9.6" height="9.6"/><rect x="809.6" y="452.7" width="9.6" height="9.6"/><path d="M809.5 434.9L809.90 442.3V460.5L809.5 467.9L809.02 460.5V442.3Z"/><path d="M809.5 439.6L809.87 444.1V455.0L809.5 459.5L809.05 455.0V444.1Z"/><rect x="812.7" y="453.7" width="9.6" height="9.6"/><rect x="812.8" y="445.1" width="9.6" height="9.6"/><rect x="812.8" y="461.4" width="9.6" height="9.6"/><rect x="812.3" y="453.7" width="9.6" height="9.6"/><rect x="813.2" y="439.5" width="9.6" height="9.6"/><rect x="812.8" y="449.5" width="9.6" height="9.6"/><rect x="813.1" y="430.0" width="9.6" height="9.6"/><rect x="812.9" y="446.2" width="9.6" height="9.6"/><rect x="813.5" y="445.0" width="9.6" height="9.6"/><rect x="812.7" y="441.5" width="9.6" height="9.6"/><path d="M813.2 433.8L813.71 441.3V459.7L813.2 467.2L812.76 459.7V441.3Z"/><path d="M813.2 438.4L813.68 444.2V458.4L813.2 464.2L812.80 458.4V444.2Z"/><rect x="816.0" y="454.5" width="9.6" height="9.6"/><rect x="816.6" y="455.4" width="9.6" height="9.6"/><rect x="816.5" y="452.3" width="9.6" height="9.6"/><rect x="816.7" y="461.6" width="9.6" height="9.6"/><rect x="816.5" y="459.6" width="9.6" height="9.6"/><rect x="816.3" y="470.5" width="9.6" height="9.6"/><rect x="816.3" y="455.8" width="9.6" height="9.6"/><rect x="816.4" y="456.9" width="9.6" height="9.6"/><rect x="816.6" y="448.5" width="9.6" height="9.6"/><rect x="816.3" y="451.7" width="9.6" height="9.6"/><path d="M816.5 452.3L817.19 456.6V467.2L816.5 471.5L815.80 467.2V456.6Z"/><path d="M816.5 452.3L817.14 455.2V462.4L816.5 465.3L815.85 462.4V455.2Z"/><rect x="819.6" y="450.9" width="9.6" height="9.6"/><rect x="819.7" y="430.6" width="9.6" height="9.6"/><rect x="819.8" y="460.2" width="9.6" height="9.6"/><rect x="819.3" y="456.2" width="9.6" height="9.6"/><rect x="819.8" y="453.0" width="9.6" height="9.6"/><rect x="819.1" y="434.7" width="9.6" height="9.6"/><rect x="819.1" y="441.7" width="9.6" height="9.6"/><rect x="819.2" y="443.7" width="9.6" height="9.6"/><rect x="820.0" y="441.5" width="9.6" height="9.6"/><rect x="819.8" y="445.2" width="9.6" height="9.6"/><path d="M820.0 435.0L820.49 441.4V457.0L820.0 463.3L819.46 457.0V441.4Z"/><path d="M820.0 440.3L820.46 444.9V456.1L820.0 460.7L819.49 456.1V444.9Z"/><rect x="821.2" y="404.7" width="9.6" height="9.6"/><rect x="822.9" y="455.1" width="9.6" height="9.6"/><rect x="823.1" y="460.4" width="9.6" height="9.6"/><rect x="822.9" y="440.3" width="9.6" height="9.6"/><rect x="823.1" y="449.4" width="9.6" height="9.6"/><rect x="822.8" y="461.9" width="9.6" height="9.6"/><rect x="823.2" y="462.6" width="9.6" height="9.6"/><rect x="823.2" y="442.8" width="9.6" height="9.6"/><rect x="823.1" y="442.1" width="9.6" height="9.6"/><rect x="823.3" y="436.6" width="9.6" height="9.6"/><rect x="822.8" y="426.6" width="9.6" height="9.6"/><path d="M823.3 435.8L823.64 443.0V460.8L823.3 468.0L822.94 460.8V443.0Z"/><path d="M823.3 437.1L823.62 442.2V454.5L823.3 459.6L822.96 454.5V442.2Z"/><rect x="826.3" y="450.6" width="9.6" height="9.6"/><rect x="826.6" y="447.6" width="9.6" height="9.6"/><rect x="826.7" y="454.0" width="9.6" height="9.6"/><rect x="826.4" y="439.4" width="9.6" height="9.6"/><rect x="826.1" y="431.5" width="9.6" height="9.6"/><rect x="826.8" y="432.5" width="9.6" height="9.6"/><rect x="826.7" y="442.5" width="9.6" height="9.6"/><rect x="825.9" y="447.7" width="9.6" height="9.6"/><rect x="826.2" y="431.5" width="9.6" height="9.6"/><rect x="826.3" y="451.1" width="9.6" height="9.6"/><path d="M826.4 435.3L827.00 440.8V454.3L826.4 459.8L825.82 454.3V440.8Z"/><path d="M826.4 446.2L826.96 449.2V456.7L826.4 459.8L825.86 456.7V449.2Z"/><rect x="830.8" y="452.5" width="9.6" height="9.6"/><rect x="829.6" y="458.8" width="9.6" height="9.6"/><rect x="829.4" y="464.9" width="9.6" height="9.6"/><rect x="830.0" y="433.1" width="9.6" height="9.6"/><rect x="829.8" y="456.5" width="9.6" height="9.6"/><rect x="829.8" y="463.9" width="9.6" height="9.6"/><rect x="829.9" y="458.3" width="9.6" height="9.6"/><rect x="829.6" y="457.6" width="9.6" height="9.6"/><rect x="829.8" y="460.4" width="9.6" height="9.6"/><rect x="829.5" y="452.2" width="9.6" height="9.6"/><path d="M829.7 436.9L830.22 443.6V459.8L829.7 466.5L829.28 459.8V443.6Z"/><path d="M829.7 441.0L830.19 445.7V457.2L829.7 461.9L829.31 457.2V445.7Z"/><rect x="833.0" y="442.7" width="9.6" height="9.6"/><rect x="833.0" y="452.5" width="9.6" height="9.6"/><rect x="832.7" y="449.5" width="9.6" height="9.6"/><rect x="833.0" y="439.7" width="9.6" height="9.6"/><rect x="833.6" y="447.6" width="9.6" height="9.6"/><rect x="833.2" y="430.4" width="9.6" height="9.6"/><rect x="832.9" y="446.4" width="9.6" height="9.6"/><rect x="833.2" y="431.5" width="9.6" height="9.6"/><rect x="833.5" y="452.6" width="9.6" height="9.6"/><rect x="832.6" y="453.6" width="9.6" height="9.6"/><path d="M833.3 434.2L833.78 439.9V453.7L833.3 459.4L832.81 453.7V439.9Z"/><path d="M833.3 440.3L833.75 443.5V451.4L833.3 454.6L832.84 451.4V443.5Z"/><rect x="833.2" y="410.7" width="9.6" height="9.6"/><rect x="836.2" y="410.2" width="9.6" height="9.6"/><rect x="836.9" y="438.0" width="9.6" height="9.6"/><rect x="836.2" y="445.8" width="9.6" height="9.6"/><rect x="836.2" y="441.9" width="9.6" height="9.6"/><rect x="836.4" y="449.8" width="9.6" height="9.6"/><rect x="836.3" y="441.6" width="9.6" height="9.6"/><rect x="836.6" y="458.1" width="9.6" height="9.6"/><rect x="836.4" y="435.6" width="9.6" height="9.6"/><rect x="836.3" y="451.9" width="9.6" height="9.6"/><rect x="835.9" y="439.8" width="9.6" height="9.6"/><rect x="836.1" y="440.5" width="9.6" height="9.6"/><path d="M836.1 439.4L836.66 444.9V458.4L836.1 463.9L835.52 458.4V444.9Z"/><path d="M836.1 444.2L836.62 447.4V455.3L836.1 458.6L835.56 455.3V447.4Z"/><rect x="840.0" y="432.6" width="9.6" height="9.6"/><rect x="839.3" y="447.0" width="9.6" height="9.6"/><rect x="840.1" y="445.9" width="9.6" height="9.6"/><rect x="839.5" y="425.6" width="9.6" height="9.6"/><rect x="839.7" y="436.2" width="9.6" height="9.6"/><rect x="839.7" y="426.2" width="9.6" height="9.6"/><rect x="839.9" y="441.7" width="9.6" height="9.6"/><rect x="839.6" y="430.8" width="9.6" height="9.6"/><rect x="839.3" y="442.1" width="9.6" height="9.6"/><rect x="840.0" y="428.8" width="9.6" height="9.6"/><path d="M839.9 434.1L840.28 438.3V448.6L839.9 452.8L839.46 448.6V438.3Z"/><path d="M839.9 435.7L840.25 439.5V449.0L839.9 452.8L839.49 449.0V439.5Z"/><rect x="842.7" y="475.2" width="9.6" height="9.6"/><rect x="842.9" y="424.4" width="9.6" height="9.6"/><rect x="843.1" y="440.4" width="9.6" height="9.6"/><rect x="843.2" y="436.8" width="9.6" height="9.6"/><rect x="843.2" y="432.7" width="9.6" height="9.6"/><rect x="843.2" y="456.2" width="9.6" height="9.6"/><rect x="842.9" y="440.8" width="9.6" height="9.6"/><rect x="841.9" y="431.7" width="9.6" height="9.6"/><rect x="842.7" y="440.2" width="9.6" height="9.6"/><rect x="843.2" y="424.0" width="9.6" height="9.6"/><rect x="842.4" y="458.3" width="9.6" height="9.6"/><path d="M843.1 432.0L843.53 439.2V456.8L843.1 464.0L842.71 456.8V439.2Z"/><path d="M843.1 432.0L843.50 435.7V444.7L843.1 448.4L842.73 444.7V435.7Z"/><rect x="846.4" y="439.2" width="9.6" height="9.6"/><rect x="846.3" y="448.2" width="9.6" height="9.6"/><rect x="845.5" y="454.5" width="9.6" height="9.6"/><rect x="846.5" y="430.0" width="9.6" height="9.6"/><rect x="846.2" y="431.9" width="9.6" height="9.6"/><rect x="847.0" y="429.6" width="9.6" height="9.6"/><rect x="846.4" y="454.9" width="9.6" height="9.6"/><rect x="846.4" y="436.4" width="9.6" height="9.6"/><rect x="846.1" y="434.0" width="9.6" height="9.6"/><rect x="846.4" y="436.5" width="9.6" height="9.6"/><path d="M846.3 433.4L846.64 438.4V450.7L846.3 455.7L845.95 450.7V438.4Z"/><path d="M846.3 439.2L846.61 442.7V451.5L846.3 455.0L845.97 451.5V442.7Z"/><rect x="850.2" y="441.9" width="9.6" height="9.6"/><rect x="849.5" y="431.2" width="9.6" height="9.6"/><rect x="849.3" y="445.6" width="9.6" height="9.6"/><rect x="849.8" y="442.4" width="9.6" height="9.6"/><rect x="850.0" y="435.9" width="9.6" height="9.6"/><rect x="849.4" y="449.3" width="9.6" height="9.6"/><rect x="850.0" y="439.6" width="9.6" height="9.6"/><rect x="849.9" y="443.1" width="9.6" height="9.6"/><rect x="849.6" y="445.2" width="9.6" height="9.6"/><rect x="849.0" y="448.9" width="9.6" height="9.6"/><path d="M849.6 437.7L850.07 441.6V451.2L849.6 455.1L849.16 451.2V441.6Z"/><path d="M849.6 437.7L850.04 441.6V451.2L849.6 455.1L849.20 451.2V441.6Z"/><rect x="853.1" y="446.2" width="9.6" height="9.6"/><rect x="853.0" y="440.1" width="9.6" height="9.6"/><rect x="853.3" y="440.8" width="9.6" height="9.6"/><rect x="852.6" y="447.1" width="9.6" height="9.6"/><rect x="853.1" y="457.8" width="9.6" height="9.6"/><rect x="853.4" y="427.8" width="9.6" height="9.6"/><rect x="852.6" y="431.0" width="9.6" height="9.6"/><rect x="852.6" y="446.4" width="9.6" height="9.6"/><rect x="852.9" y="435.1" width="9.6" height="9.6"/><rect x="852.7" y="458.7" width="9.6" height="9.6"/><path d="M852.5 434.1L853.00 440.8V457.4L852.5 464.2L851.94 457.4V440.8Z"/><path d="M852.5 434.1L852.96 438.7V450.2L852.5 454.8L851.97 450.2V438.7Z"/><rect x="856.2" y="443.2" width="9.6" height="9.6"/><rect x="855.9" y="432.6" width="9.6" height="9.6"/><rect x="856.3" y="434.3" width="9.6" height="9.6"/><rect x="856.2" y="436.0" width="9.6" height="9.6"/><rect x="856.5" y="424.4" width="9.6" height="9.6"/><rect x="856.5" y="456.0" width="9.6" height="9.6"/><rect x="856.7" y="434.4" width="9.6" height="9.6"/><rect x="856.3" y="441.6" width="9.6" height="9.6"/><rect x="855.8" y="451.9" width="9.6" height="9.6"/><rect x="856.2" y="431.8" width="9.6" height="9.6"/><path d="M856.1 430.2L856.70 437.3V454.7L856.1 461.8L855.42 454.7V437.3Z"/><path d="M856.1 433.3L856.66 436.9V445.6L856.1 449.2L855.47 445.6V436.9Z"/><rect x="859.8" y="454.0" width="9.6" height="9.6"/><rect x="859.5" y="439.9" width="9.6" height="9.6"/><rect x="859.7" y="448.7" width="9.6" height="9.6"/><rect x="859.7" y="453.6" width="9.6" height="9.6"/><rect x="859.6" y="442.0" width="9.6" height="9.6"/><rect x="859.6" y="436.5" width="9.6" height="9.6"/><rect x="859.3" y="426.0" width="9.6" height="9.6"/><rect x="859.2" y="428.2" width="9.6" height="9.6"/><rect x="859.5" y="447.6" width="9.6" height="9.6"/><rect x="860.2" y="453.7" width="9.6" height="9.6"/><path d="M859.9 431.3L860.49 437.7V453.4L859.9 459.8L859.24 453.4V437.7Z"/><path d="M859.9 435.1L860.45 440.1V452.3L859.9 457.3L859.28 452.3V440.1Z"/><rect x="863.3" y="428.6" width="9.6" height="9.6"/><rect x="862.6" y="435.5" width="9.6" height="9.6"/><rect x="863.3" y="453.9" width="9.6" height="9.6"/><rect x="862.7" y="447.2" width="9.6" height="9.6"/><rect x="862.6" y="427.7" width="9.6" height="9.6"/><rect x="863.0" y="429.4" width="9.6" height="9.6"/><rect x="863.5" y="435.4" width="9.6" height="9.6"/><rect x="862.5" y="436.0" width="9.6" height="9.6"/><rect x="863.0" y="454.3" width="9.6" height="9.6"/><rect x="863.6" y="441.2" width="9.6" height="9.6"/><path d="M863.1 431.5L863.58 437.9V453.6L863.1 460.1L862.68 453.6V437.9Z"/><path d="M863.1 431.5L863.55 435.8V446.4L863.1 450.8L862.71 446.4V435.8Z"/><rect x="866.2" y="453.4" width="9.6" height="9.6"/><rect x="866.5" y="436.9" width="9.6" height="9.6"/><rect x="866.7" y="437.4" width="9.6" height="9.6"/><rect x="865.9" y="448.8" width="9.6" height="9.6"/><rect x="865.6" y="448.4" width="9.6" height="9.6"/><rect x="866.3" y="443.1" width="9.6" height="9.6"/><rect x="867.2" y="447.7" width="9.6" height="9.6"/><rect x="866.7" y="441.1" width="9.6" height="9.6"/><rect x="866.1" y="455.1" width="9.6" height="9.6"/><rect x="866.2" y="448.6" width="9.6" height="9.6"/><path d="M866.1 440.7L866.69 445.3V456.4L866.1 460.9L865.55 456.4V445.3Z"/><path d="M866.1 441.7L866.65 445.9V456.0L866.1 460.1L865.59 456.0V445.9Z"/><rect x="868.2" y="413.2" width="9.6" height="9.6"/><rect x="869.6" y="433.1" width="9.6" height="9.6"/><rect x="869.1" y="432.9" width="9.6" height="9.6"/><rect x="870.0" y="451.5" width="9.6" height="9.6"/><rect x="869.9" y="439.7" width="9.6" height="9.6"/><rect x="869.5" y="442.3" width="9.6" height="9.6"/><rect x="869.6" y="438.8" width="9.6" height="9.6"/><rect x="869.5" y="450.9" width="9.6" height="9.6"/><rect x="869.7" y="449.1" width="9.6" height="9.6"/><rect x="869.4" y="435.5" width="9.6" height="9.6"/><rect x="869.9" y="441.2" width="9.6" height="9.6"/><path d="M869.2 436.7L869.55 441.4V452.7L869.2 457.3L868.88 452.7V441.4Z"/><path d="M869.2 436.7L869.52 440.5V449.9L869.2 453.7L868.90 449.9V440.5Z"/><rect x="872.2" y="486.2" width="9.6" height="9.6"/><rect x="872.7" y="433.9" width="9.6" height="9.6"/><rect x="873.1" y="439.0" width="9.6" height="9.6"/><rect x="872.8" y="441.8" width="9.6" height="9.6"/><rect x="872.4" y="438.7" width="9.6" height="9.6"/><rect x="872.8" y="445.6" width="9.6" height="9.6"/><rect x="872.8" y="447.6" width="9.6" height="9.6"/><rect x="873.6" y="429.6" width="9.6" height="9.6"/><rect x="873.0" y="436.1" width="9.6" height="9.6"/><rect x="873.3" y="447.2" width="9.6" height="9.6"/><rect x="873.2" y="446.2" width="9.6" height="9.6"/><path d="M872.7 433.4L873.31 437.9V448.9L872.7 453.4L872.08 448.9V437.9Z"/><path d="M872.7 433.4L873.27 437.1V446.2L872.7 449.9L872.12 446.2V437.1Z"/><rect x="873.2" y="471.2" width="9.6" height="9.6"/><rect x="873.2" y="493.2" width="9.6" height="9.6"/><rect x="876.5" y="422.0" width="9.6" height="9.6"/><rect x="876.1" y="452.4" width="9.6" height="9.6"/><rect x="876.2" y="439.9" width="9.6" height="9.6"/><rect x="876.0" y="444.0" width="9.6" height="9.6"/><rect x="876.5" y="445.1" width="9.6" height="9.6"/><rect x="876.2" y="429.6" width="9.6" height="9.6"/><rect x="876.2" y="453.4" width="9.6" height="9.6"/><rect x="875.9" y="432.8" width="9.6" height="9.6"/><rect x="876.3" y="450.6" width="9.6" height="9.6"/><rect x="875.9" y="438.2" width="9.6" height="9.6"/><path d="M876.5 431.8L877.01 438.0V453.0L876.5 459.2L876.04 453.0V438.0Z"/><path d="M876.5 435.6L876.98 440.6V452.7L876.5 457.7L876.07 452.7V440.6Z"/><rect x="880.3" y="434.3" width="9.6" height="9.6"/><rect x="879.7" y="445.0" width="9.6" height="9.6"/><rect x="879.3" y="434.1" width="9.6" height="9.6"/><rect x="879.3" y="435.2" width="9.6" height="9.6"/><rect x="879.2" y="437.6" width="9.6" height="9.6"/><rect x="879.8" y="433.1" width="9.6" height="9.6"/><rect x="879.4" y="433.2" width="9.6" height="9.6"/><rect x="878.9" y="435.4" width="9.6" height="9.6"/><rect x="879.6" y="422.6" width="9.6" height="9.6"/><rect x="879.7" y="445.9" width="9.6" height="9.6"/><path d="M879.5 434.2L879.91 438.2V447.8L879.5 451.7L879.08 447.8V438.2Z"/><path d="M879.5 434.2L879.88 438.2V447.8L879.5 451.7L879.11 447.8V438.2Z"/><rect x="883.2" y="446.0" width="9.6" height="9.6"/><rect x="882.9" y="437.8" width="9.6" height="9.6"/><rect x="882.8" y="435.8" width="9.6" height="9.6"/><rect x="882.7" y="441.6" width="9.6" height="9.6"/><rect x="883.1" y="431.1" width="9.6" height="9.6"/><rect x="883.0" y="432.9" width="9.6" height="9.6"/><rect x="882.4" y="432.2" width="9.6" height="9.6"/><rect x="882.9" y="442.0" width="9.6" height="9.6"/><rect x="883.0" y="445.5" width="9.6" height="9.6"/><rect x="882.6" y="439.8" width="9.6" height="9.6"/><path d="M883.1 434.9L883.75 438.7V448.0L883.1 451.8L882.52 448.0V438.7Z"/><path d="M883.1 436.4L883.71 439.8V448.3L883.1 451.8L882.56 448.3V439.8Z"/><rect x="886.1" y="441.7" width="9.6" height="9.6"/><rect x="886.4" y="444.4" width="9.6" height="9.6"/><rect x="886.4" y="447.9" width="9.6" height="9.6"/><rect x="886.3" y="428.4" width="9.6" height="9.6"/><rect x="886.2" y="451.5" width="9.6" height="9.6"/><rect x="885.4" y="440.3" width="9.6" height="9.6"/><rect x="886.7" y="447.6" width="9.6" height="9.6"/><rect x="886.4" y="450.0" width="9.6" height="9.6"/><rect x="885.9" y="443.1" width="9.6" height="9.6"/><rect x="885.6" y="434.6" width="9.6" height="9.6"/><rect x="886.2" y="403.7" width="9.6" height="9.6"/><rect x="886.2" y="467.2" width="9.6" height="9.6"/><path d="M886.5 433.7L887.10 439.0V452.0L886.5 457.3L885.83 452.0V439.0Z"/><path d="M886.5 437.8L887.06 441.0V448.6L886.5 451.7L885.87 448.6V441.0Z"/><rect x="889.8" y="435.7" width="9.6" height="9.6"/><rect x="889.7" y="430.0" width="9.6" height="9.6"/><rect x="889.4" y="437.5" width="9.6" height="9.6"/><rect x="889.5" y="443.2" width="9.6" height="9.6"/><rect x="889.2" y="438.4" width="9.6" height="9.6"/><rect x="889.3" y="452.5" width="9.6" height="9.6"/><rect x="890.1" y="448.3" width="9.6" height="9.6"/><rect x="889.5" y="440.4" width="9.6" height="9.6"/><rect x="889.1" y="441.3" width="9.6" height="9.6"/><rect x="889.7" y="434.7" width="9.6" height="9.6"/><path d="M889.3 433.8L889.84 439.1V451.9L889.3 457.1L888.77 451.9V439.1Z"/><path d="M889.3 435.7L889.81 439.0V447.2L889.3 450.6L888.80 447.2V439.0Z"/><rect x="893.0" y="430.8" width="9.6" height="9.6"/><rect x="892.7" y="440.3" width="9.6" height="9.6"/><rect x="892.8" y="427.9" width="9.6" height="9.6"/><rect x="893.0" y="426.8" width="9.6" height="9.6"/><rect x="892.7" y="454.1" width="9.6" height="9.6"/><rect x="892.3" y="442.5" width="9.6" height="9.6"/><rect x="892.7" y="447.2" width="9.6" height="9.6"/><rect x="893.0" y="445.8" width="9.6" height="9.6"/><rect x="892.8" y="442.3" width="9.6" height="9.6"/><rect x="892.9" y="441.3" width="9.6" height="9.6"/><path d="M892.6 432.9L893.19 437.8V449.8L892.6 454.7L892.08 449.8V437.8Z"/><path d="M892.6 436.9L893.15 440.2V448.2L892.6 451.5L892.12 448.2V440.2Z"/><rect x="896.2" y="421.0" width="9.6" height="9.6"/><rect x="896.2" y="444.7" width="9.6" height="9.6"/><rect x="896.3" y="435.7" width="9.6" height="9.6"/><rect x="896.5" y="442.0" width="9.6" height="9.6"/><rect x="896.1" y="434.8" width="9.6" height="9.6"/><rect x="895.9" y="438.8" width="9.6" height="9.6"/><rect x="895.5" y="441.4" width="9.6" height="9.6"/><rect x="896.2" y="423.6" width="9.6" height="9.6"/><rect x="895.7" y="441.7" width="9.6" height="9.6"/><rect x="896.0" y="442.6" width="9.6" height="9.6"/><path d="M896.2 424.8L896.76 430.6V444.7L896.2 450.5L895.62 444.7V430.6Z"/><path d="M896.2 427.7L896.72 432.3V443.5L896.2 448.1L895.66 443.5V432.3Z"/><rect x="899.6" y="432.7" width="9.6" height="9.6"/><rect x="899.8" y="442.4" width="9.6" height="9.6"/><rect x="899.1" y="446.2" width="9.6" height="9.6"/><rect x="899.8" y="426.1" width="9.6" height="9.6"/><rect x="899.5" y="437.8" width="9.6" height="9.6"/><rect x="899.4" y="451.1" width="9.6" height="9.6"/><rect x="899.1" y="445.5" width="9.6" height="9.6"/><rect x="899.0" y="444.5" width="9.6" height="9.6"/><rect x="899.5" y="442.0" width="9.6" height="9.6"/><rect x="899.5" y="435.8" width="9.6" height="9.6"/><path d="M899.5 429.9L900.14 435.6V449.6L899.5 455.3L898.91 449.6V435.6Z"/><path d="M899.5 435.8L900.10 439.3V448.0L899.5 451.6L898.95 448.0V439.3Z"/><rect x="902.8" y="445.5" width="9.6" height="9.6"/><rect x="902.3" y="441.0" width="9.6" height="9.6"/><rect x="902.5" y="441.1" width="9.6" height="9.6"/><rect x="902.8" y="452.5" width="9.6" height="9.6"/><rect x="903.2" y="449.2" width="9.6" height="9.6"/><rect x="902.9" y="437.3" width="9.6" height="9.6"/><rect x="902.8" y="428.7" width="9.6" height="9.6"/><rect x="902.7" y="442.3" width="9.6" height="9.6"/><rect x="902.7" y="435.7" width="9.6" height="9.6"/><rect x="902.6" y="447.1" width="9.6" height="9.6"/><path d="M903.5 432.5L903.92 438.3V452.5L903.5 458.3L902.99 452.5V438.3Z"/><path d="M903.5 436.4L903.89 440.1V449.2L903.5 453.0L903.02 449.2V440.1Z"/><rect x="906.3" y="449.2" width="9.6" height="9.6"/><rect x="906.2" y="450.0" width="9.6" height="9.6"/><rect x="905.8" y="439.5" width="9.6" height="9.6"/><rect x="906.4" y="427.0" width="9.6" height="9.6"/><rect x="906.1" y="425.8" width="9.6" height="9.6"/><rect x="905.9" y="451.9" width="9.6" height="9.6"/><rect x="905.9" y="457.8" width="9.6" height="9.6"/><rect x="906.3" y="433.1" width="9.6" height="9.6"/><rect x="906.3" y="446.9" width="9.6" height="9.6"/><rect x="906.6" y="455.2" width="9.6" height="9.6"/><path d="M905.8 429.6L906.41 436.6V453.6L905.8 460.5L905.15 453.6V436.6Z"/><path d="M905.8 436.6L906.37 441.2V452.3L905.8 456.8L905.19 452.3V441.2Z"/><rect x="910.0" y="433.9" width="9.6" height="9.6"/><rect x="909.2" y="441.0" width="9.6" height="9.6"/><rect x="909.3" y="439.3" width="9.6" height="9.6"/><rect x="909.0" y="442.2" width="9.6" height="9.6"/><rect x="909.2" y="429.4" width="9.6" height="9.6"/><rect x="909.5" y="442.1" width="9.6" height="9.6"/><rect x="909.5" y="438.7" width="9.6" height="9.6"/><rect x="909.2" y="450.6" width="9.6" height="9.6"/><rect x="909.8" y="439.8" width="9.6" height="9.6"/><rect x="909.1" y="428.3" width="9.6" height="9.6"/><path d="M909.8 432.1L910.08 437.6V451.0L909.8 456.4L909.44 451.0V437.6Z"/><path d="M909.8 437.1L910.06 441.3V451.4L909.8 455.6L909.46 451.4V441.3Z"/><rect x="912.6" y="434.6" width="9.6" height="9.6"/><rect x="912.6" y="435.1" width="9.6" height="9.6"/><rect x="912.9" y="430.1" width="9.6" height="9.6"/><rect x="913.3" y="444.7" width="9.6" height="9.6"/><rect x="912.7" y="455.8" width="9.6" height="9.6"/><rect x="913.1" y="430.0" width="9.6" height="9.6"/><rect x="912.7" y="429.6" width="9.6" height="9.6"/><rect x="912.5" y="429.8" width="9.6" height="9.6"/><rect x="913.1" y="437.9" width="9.6" height="9.6"/><rect x="912.7" y="440.3" width="9.6" height="9.6"/><path d="M913.1 433.4L913.55 438.5V450.9L913.1 455.9L912.57 450.9V438.5Z"/><path d="M913.1 433.4L913.51 437.6V447.9L913.1 452.1L912.60 447.9V437.6Z"/><rect x="916.3" y="447.1" width="9.6" height="9.6"/><rect x="916.1" y="440.9" width="9.6" height="9.6"/><rect x="916.1" y="443.3" width="9.6" height="9.6"/><rect x="916.3" y="439.9" width="9.6" height="9.6"/><rect x="915.6" y="443.9" width="9.6" height="9.6"/><rect x="916.5" y="452.1" width="9.6" height="9.6"/><rect x="916.3" y="442.9" width="9.6" height="9.6"/><rect x="916.1" y="449.2" width="9.6" height="9.6"/><rect x="916.0" y="428.8" width="9.6" height="9.6"/><rect x="915.5" y="453.2" width="9.6" height="9.6"/><path d="M916.0 433.6L916.57 438.2V449.5L916.0 454.1L915.46 449.5V438.2Z"/><path d="M916.0 440.0L916.54 443.1V450.8L916.0 453.9L915.49 450.8V443.1Z"/><rect x="919.2" y="390.7" width="9.6" height="9.6"/><rect x="919.2" y="415.7" width="9.6" height="9.6"/><rect x="919.9" y="445.9" width="9.6" height="9.6"/><rect x="919.9" y="444.5" width="9.6" height="9.6"/><rect x="919.3" y="451.6" width="9.6" height="9.6"/><rect x="919.6" y="446.1" width="9.6" height="9.6"/><rect x="919.4" y="445.0" width="9.6" height="9.6"/><rect x="919.2" y="441.5" width="9.6" height="9.6"/><rect x="919.2" y="438.7" width="9.6" height="9.6"/><rect x="919.7" y="438.0" width="9.6" height="9.6"/><rect x="919.6" y="450.5" width="9.6" height="9.6"/><rect x="919.8" y="444.1" width="9.6" height="9.6"/><path d="M919.5 441.8L919.99 445.3V453.9L919.5 457.4L918.92 453.9V445.3Z"/><path d="M919.5 441.8L919.95 444.5V451.1L919.5 453.8L918.96 451.1V444.5Z"/><rect x="922.9" y="444.2" width="9.6" height="9.6"/><rect x="922.4" y="452.5" width="9.6" height="9.6"/><rect x="922.7" y="461.2" width="9.6" height="9.6"/><rect x="922.8" y="450.4" width="9.6" height="9.6"/><rect x="922.6" y="436.8" width="9.6" height="9.6"/><rect x="923.2" y="439.0" width="9.6" height="9.6"/><rect x="923.1" y="455.6" width="9.6" height="9.6"/><rect x="922.6" y="455.1" width="9.6" height="9.6"/><rect x="923.1" y="440.8" width="9.6" height="9.6"/><rect x="922.8" y="438.2" width="9.6" height="9.6"/><path d="M922.5 440.6L922.85 446.6V461.1L922.5 467.0L922.19 461.1V446.6Z"/><path d="M922.5 443.4L922.83 447.2V456.5L922.5 460.3L922.21 456.5V447.2Z"/><rect x="926.3" y="440.4" width="9.6" height="9.6"/><rect x="925.7" y="428.7" width="9.6" height="9.6"/><rect x="925.9" y="436.7" width="9.6" height="9.6"/><rect x="926.3" y="438.7" width="9.6" height="9.6"/><rect x="925.9" y="435.1" width="9.6" height="9.6"/><rect x="925.7" y="436.0" width="9.6" height="9.6"/><rect x="925.6" y="443.3" width="9.6" height="9.6"/><rect x="926.1" y="436.8" width="9.6" height="9.6"/><rect x="925.8" y="444.0" width="9.6" height="9.6"/><rect x="926.1" y="441.5" width="9.6" height="9.6"/><path d="M925.7 432.5L926.07 436.4V445.9L925.7 449.8L925.30 445.9V436.4Z"/><path d="M925.7 435.5L926.04 438.8V446.6L925.7 449.8L925.33 446.6V438.8Z"/><rect x="926.2" y="471.2" width="9.6" height="9.6"/><rect x="930.0" y="451.3" width="9.6" height="9.6"/><rect x="929.5" y="449.5" width="9.6" height="9.6"/><rect x="929.3" y="434.4" width="9.6" height="9.6"/><rect x="929.2" y="456.4" width="9.6" height="9.6"/><rect x="929.3" y="435.1" width="9.6" height="9.6"/><rect x="929.8" y="439.5" width="9.6" height="9.6"/><rect x="929.3" y="444.6" width="9.6" height="9.6"/><rect x="929.8" y="435.9" width="9.6" height="9.6"/><rect x="929.3" y="457.5" width="9.6" height="9.6"/><rect x="929.2" y="431.4" width="9.6" height="9.6"/><path d="M929.2 436.9L929.65 442.9V457.4L929.2 463.3L928.83 457.4V442.9Z"/><path d="M929.2 446.1L929.62 449.3V457.1L929.2 460.3L928.86 457.1V449.3Z"/><rect x="932.9" y="437.8" width="9.6" height="9.6"/><rect x="932.8" y="433.2" width="9.6" height="9.6"/><rect x="932.8" y="443.1" width="9.6" height="9.6"/><rect x="933.2" y="434.5" width="9.6" height="9.6"/><rect x="932.9" y="423.0" width="9.6" height="9.6"/><rect x="933.1" y="449.6" width="9.6" height="9.6"/><rect x="932.8" y="423.0" width="9.6" height="9.6"/><rect x="932.9" y="452.6" width="9.6" height="9.6"/><rect x="933.1" y="429.5" width="9.6" height="9.6"/><rect x="932.8" y="441.7" width="9.6" height="9.6"/><path d="M932.4 427.8L932.90 434.0V449.2L932.4 455.4L931.88 449.2V434.0Z"/><path d="M932.4 435.1L932.86 438.7V447.4L932.4 450.9L931.91 447.4V438.7Z"/><rect x="935.9" y="440.7" width="9.6" height="9.6"/><rect x="936.3" y="433.9" width="9.6" height="9.6"/><rect x="936.0" y="446.4" width="9.6" height="9.6"/><rect x="936.2" y="432.0" width="9.6" height="9.6"/><rect x="936.2" y="434.6" width="9.6" height="9.6"/><rect x="935.9" y="450.3" width="9.6" height="9.6"/><rect x="936.0" y="439.8" width="9.6" height="9.6"/><rect x="936.1" y="434.6" width="9.6" height="9.6"/><rect x="935.7" y="443.1" width="9.6" height="9.6"/><rect x="935.3" y="448.1" width="9.6" height="9.6"/><path d="M936.0 436.1L936.43 440.6V451.6L936.0 456.1L935.47 451.6V440.6Z"/><path d="M936.0 440.4L936.40 443.9V452.6L936.0 456.1L935.51 452.6V443.9Z"/><rect x="939.5" y="440.0" width="9.6" height="9.6"/><rect x="939.3" y="432.2" width="9.6" height="9.6"/><rect x="939.2" y="428.6" width="9.6" height="9.6"/><rect x="939.0" y="441.4" width="9.6" height="9.6"/><rect x="939.1" y="443.5" width="9.6" height="9.6"/><rect x="939.1" y="443.3" width="9.6" height="9.6"/><rect x="939.6" y="442.5" width="9.6" height="9.6"/><rect x="939.4" y="441.8" width="9.6" height="9.6"/><rect x="939.6" y="432.2" width="9.6" height="9.6"/><rect x="939.8" y="444.9" width="9.6" height="9.6"/><path d="M939.4 433.0L939.68 437.0V446.7L939.4 450.7L939.04 446.7V437.0Z"/><path d="M939.4 436.8L939.66 439.9V447.6L939.4 450.7L939.06 447.6V439.9Z"/><rect x="942.9" y="442.7" width="9.6" height="9.6"/><rect x="942.5" y="430.7" width="9.6" height="9.6"/><rect x="942.7" y="442.8" width="9.6" height="9.6"/><rect x="942.6" y="433.8" width="9.6" height="9.6"/><rect x="942.8" y="445.6" width="9.6" height="9.6"/><rect x="942.5" y="447.3" width="9.6" height="9.6"/><rect x="942.8" y="448.9" width="9.6" height="9.6"/><rect x="942.7" y="444.2" width="9.6" height="9.6"/><rect x="942.8" y="436.8" width="9.6" height="9.6"/><rect x="942.9" y="446.8" width="9.6" height="9.6"/><path d="M942.4 434.5L942.71 439.0V450.1L942.4 454.7L942.09 450.1V439.0Z"/><path d="M942.4 440.8L942.69 443.9V451.6L942.4 454.7L942.11 451.6V443.9Z"/><rect x="946.3" y="447.1" width="9.6" height="9.6"/><rect x="946.2" y="447.4" width="9.6" height="9.6"/><rect x="945.8" y="445.8" width="9.6" height="9.6"/><rect x="945.9" y="445.3" width="9.6" height="9.6"/><rect x="946.3" y="445.9" width="9.6" height="9.6"/><rect x="945.8" y="447.8" width="9.6" height="9.6"/><rect x="945.9" y="442.2" width="9.6" height="9.6"/><rect x="945.9" y="458.8" width="9.6" height="9.6"/><rect x="945.6" y="446.3" width="9.6" height="9.6"/><rect x="946.0" y="449.3" width="9.6" height="9.6"/><path d="M945.7 446.0L946.21 450.0V459.7L945.7 463.7L945.19 459.7V450.0Z"/><path d="M945.7 446.0L946.18 448.9V455.9L945.7 458.8L945.22 455.9V448.9Z"/><rect x="948.7" y="444.1" width="9.6" height="9.6"/><rect x="949.6" y="444.7" width="9.6" height="9.6"/><rect x="949.0" y="442.4" width="9.6" height="9.6"/><rect x="949.5" y="441.0" width="9.6" height="9.6"/><rect x="949.5" y="442.8" width="9.6" height="9.6"/><rect x="949.4" y="445.3" width="9.6" height="9.6"/><rect x="949.4" y="453.8" width="9.6" height="9.6"/><rect x="949.3" y="451.9" width="9.6" height="9.6"/><rect x="948.9" y="452.2" width="9.6" height="9.6"/><rect x="949.4" y="445.5" width="9.6" height="9.6"/><path d="M949.2 444.8L949.72 448.2V456.2L949.2 459.6L948.59 456.2V448.2Z"/><path d="M949.2 444.8L949.68 447.7V454.7L949.2 457.5L948.63 454.7V447.7Z"/><rect x="952.7" y="436.2" width="9.6" height="9.6"/><rect x="952.6" y="447.4" width="9.6" height="9.6"/><rect x="952.3" y="431.7" width="9.6" height="9.6"/><rect x="952.2" y="455.8" width="9.6" height="9.6"/><rect x="952.2" y="450.3" width="9.6" height="9.6"/><rect x="952.3" y="433.5" width="9.6" height="9.6"/><rect x="952.8" y="441.8" width="9.6" height="9.6"/><rect x="952.6" y="434.5" width="9.6" height="9.6"/><rect x="953.1" y="447.9" width="9.6" height="9.6"/><rect x="952.8" y="439.5" width="9.6" height="9.6"/><path d="M952.4 435.5L952.85 441.4V455.7L952.4 461.6L952.02 455.7V441.4Z"/><path d="M952.4 437.9L952.82 441.8V451.5L952.4 455.5L952.05 451.5V441.8Z"/><rect x="956.1" y="447.2" width="9.6" height="9.6"/><rect x="956.1" y="433.5" width="9.6" height="9.6"/><rect x="956.0" y="455.8" width="9.6" height="9.6"/><rect x="955.6" y="432.2" width="9.6" height="9.6"/><rect x="956.5" y="446.5" width="9.6" height="9.6"/><rect x="955.5" y="459.5" width="9.6" height="9.6"/><rect x="956.0" y="435.0" width="9.6" height="9.6"/><rect x="954.8" y="435.3" width="9.6" height="9.6"/><rect x="955.5" y="432.6" width="9.6" height="9.6"/><rect x="955.8" y="433.4" width="9.6" height="9.6"/><path d="M956.4 439.3L956.93 445.1V459.5L956.4 465.3L955.84 459.5V445.1Z"/><path d="M956.4 448.4L956.89 451.2V458.0L956.4 460.8L955.88 458.0V451.2Z"/><rect x="958.8" y="461.4" width="9.6" height="9.6"/><rect x="959.7" y="454.9" width="9.6" height="9.6"/><rect x="959.5" y="444.3" width="9.6" height="9.6"/><rect x="958.7" y="433.8" width="9.6" height="9.6"/><rect x="959.3" y="452.7" width="9.6" height="9.6"/><rect x="959.3" y="442.0" width="9.6" height="9.6"/><rect x="959.0" y="445.1" width="9.6" height="9.6"/><rect x="959.4" y="452.4" width="9.6" height="9.6"/><rect x="959.4" y="441.5" width="9.6" height="9.6"/><rect x="959.6" y="464.8" width="9.6" height="9.6"/><path d="M958.7 437.6L959.15 444.2V460.3L958.7 467.0L958.20 460.3V444.2Z"/><path d="M958.7 447.1L959.12 450.8V459.9L958.7 463.6L958.23 459.9V450.8Z"/><rect x="962.4" y="456.1" width="9.6" height="9.6"/><rect x="962.6" y="454.6" width="9.6" height="9.6"/><rect x="962.6" y="449.5" width="9.6" height="9.6"/><rect x="962.5" y="445.3" width="9.6" height="9.6"/><rect x="962.4" y="437.6" width="9.6" height="9.6"/><rect x="962.7" y="437.0" width="9.6" height="9.6"/><rect x="962.5" y="458.9" width="9.6" height="9.6"/><rect x="962.6" y="450.7" width="9.6" height="9.6"/><rect x="962.9" y="451.7" width="9.6" height="9.6"/><rect x="963.1" y="448.7" width="9.6" height="9.6"/><path d="M962.5 440.8L963.13 446.2V459.3L962.5 464.7L961.94 459.3V446.2Z"/><path d="M962.5 442.4L963.09 446.9V458.0L962.5 462.5L961.98 458.0V446.9Z"/><rect x="966.1" y="446.9" width="9.6" height="9.6"/><rect x="966.4" y="452.3" width="9.6" height="9.6"/><rect x="965.9" y="433.9" width="9.6" height="9.6"/><rect x="965.7" y="453.3" width="9.6" height="9.6"/><rect x="965.4" y="443.7" width="9.6" height="9.6"/><rect x="965.7" y="441.4" width="9.6" height="9.6"/><rect x="965.7" y="448.8" width="9.6" height="9.6"/><rect x="965.8" y="455.4" width="9.6" height="9.6"/><rect x="965.9" y="459.3" width="9.6" height="9.6"/><rect x="966.2" y="434.7" width="9.6" height="9.6"/><path d="M966.0 441.3L966.30 446.6V459.5L966.0 464.7L965.69 459.5V446.6Z"/><path d="M966.0 445.8L966.28 448.5V455.2L966.0 457.9L965.71 455.2V448.5Z"/><rect x="968.9" y="442.6" width="9.6" height="9.6"/><rect x="969.2" y="437.1" width="9.6" height="9.6"/><rect x="969.6" y="435.5" width="9.6" height="9.6"/><rect x="969.5" y="447.9" width="9.6" height="9.6"/><rect x="969.1" y="431.6" width="9.6" height="9.6"/><rect x="969.4" y="448.8" width="9.6" height="9.6"/><rect x="969.1" y="442.6" width="9.6" height="9.6"/><rect x="969.5" y="457.1" width="9.6" height="9.6"/><rect x="968.9" y="435.3" width="9.6" height="9.6"/><rect x="969.5" y="439.5" width="9.6" height="9.6"/><path d="M969.0 435.4L969.34 441.1V455.0L969.0 460.6L968.68 455.0V441.1Z"/><path d="M969.0 436.7L969.32 440.9V451.3L969.0 455.5L968.70 451.3V440.9Z"/><rect x="971.8" y="453.3" width="9.6" height="9.6"/><rect x="972.5" y="464.7" width="9.6" height="9.6"/><rect x="972.6" y="440.6" width="9.6" height="9.6"/><rect x="972.5" y="447.2" width="9.6" height="9.6"/><rect x="972.7" y="451.6" width="9.6" height="9.6"/><rect x="972.3" y="441.7" width="9.6" height="9.6"/><rect x="972.7" y="439.1" width="9.6" height="9.6"/><rect x="972.5" y="467.4" width="9.6" height="9.6"/><rect x="972.2" y="464.0" width="9.6" height="9.6"/><rect x="972.3" y="455.1" width="9.6" height="9.6"/><path d="M972.8 442.9L973.22 449.7V466.4L972.8 473.2L972.36 466.4V449.7Z"/><path d="M972.8 448.5L973.19 452.3V461.4L972.8 465.1L972.38 461.4V452.3Z"/><rect x="975.8" y="452.5" width="9.6" height="9.6"/><rect x="976.4" y="452.7" width="9.6" height="9.6"/><rect x="975.6" y="453.8" width="9.6" height="9.6"/><rect x="976.4" y="437.0" width="9.6" height="9.6"/><rect x="976.0" y="437.5" width="9.6" height="9.6"/><rect x="976.0" y="459.7" width="9.6" height="9.6"/><rect x="975.5" y="450.6" width="9.6" height="9.6"/><rect x="975.8" y="446.9" width="9.6" height="9.6"/><rect x="976.4" y="456.1" width="9.6" height="9.6"/><rect x="975.4" y="440.6" width="9.6" height="9.6"/><path d="M976.2 442.9L976.55 448.0V460.4L976.2 465.5L975.79 460.4V448.0Z"/><path d="M976.2 447.1L976.52 450.8V459.7L976.2 463.3L975.81 459.7V450.8Z"/><rect x="979.6" y="434.1" width="9.6" height="9.6"/><rect x="978.9" y="442.0" width="9.6" height="9.6"/><rect x="979.2" y="457.6" width="9.6" height="9.6"/><rect x="979.3" y="437.0" width="9.6" height="9.6"/><rect x="979.0" y="443.6" width="9.6" height="9.6"/><rect x="979.1" y="447.5" width="9.6" height="9.6"/><rect x="979.4" y="435.0" width="9.6" height="9.6"/><rect x="979.0" y="445.1" width="9.6" height="9.6"/><rect x="979.7" y="433.4" width="9.6" height="9.6"/><rect x="979.0" y="452.5" width="9.6" height="9.6"/><path d="M979.2 439.3L979.54 444.8V458.0L979.2 463.4L978.83 458.0V444.8Z"/><path d="M979.2 444.6L979.52 447.8V455.7L979.2 458.9L978.85 455.7V447.8Z"/><rect x="980.2" y="471.2" width="9.6" height="9.6"/><rect x="982.2" y="428.2" width="9.6" height="9.6"/><rect x="983.3" y="444.0" width="9.6" height="9.6"/><rect x="982.8" y="452.1" width="9.6" height="9.6"/><rect x="982.6" y="450.0" width="9.6" height="9.6"/><rect x="982.8" y="442.4" width="9.6" height="9.6"/><rect x="982.6" y="457.9" width="9.6" height="9.6"/><rect x="982.5" y="449.5" width="9.6" height="9.6"/><rect x="982.5" y="463.7" width="9.6" height="9.6"/><rect x="982.8" y="464.2" width="9.6" height="9.6"/><rect x="982.5" y="464.0" width="9.6" height="9.6"/><rect x="982.8" y="460.3" width="9.6" height="9.6"/><path d="M982.7 446.2L983.31 451.1V463.0L982.7 467.9L982.13 463.0V451.1Z"/><path d="M982.7 447.4L983.27 450.5V458.1L982.7 461.2L982.17 458.1V450.5Z"/><rect x="986.4" y="442.4" width="9.6" height="9.6"/><rect x="985.5" y="457.8" width="9.6" height="9.6"/><rect x="985.6" y="441.6" width="9.6" height="9.6"/><rect x="985.6" y="444.0" width="9.6" height="9.6"/><rect x="985.7" y="446.3" width="9.6" height="9.6"/><rect x="985.4" y="443.5" width="9.6" height="9.6"/><rect x="985.9" y="448.7" width="9.6" height="9.6"/><rect x="985.9" y="445.0" width="9.6" height="9.6"/><rect x="986.1" y="453.8" width="9.6" height="9.6"/><rect x="985.7" y="451.0" width="9.6" height="9.6"/><path d="M986.1 445.4L986.56 449.5V459.5L986.1 463.6L985.70 459.5V449.5Z"/><path d="M986.1 445.4L986.54 449.4V459.0L986.1 463.0L985.73 459.0V449.4Z"/><rect x="989.6" y="458.4" width="9.6" height="9.6"/><rect x="989.8" y="450.9" width="9.6" height="9.6"/><rect x="989.0" y="462.4" width="9.6" height="9.6"/><rect x="989.4" y="449.3" width="9.6" height="9.6"/><rect x="989.1" y="448.4" width="9.6" height="9.6"/><rect x="989.3" y="447.8" width="9.6" height="9.6"/><rect x="989.1" y="455.8" width="9.6" height="9.6"/><rect x="989.5" y="438.5" width="9.6" height="9.6"/><rect x="989.3" y="445.5" width="9.6" height="9.6"/><rect x="989.2" y="454.3" width="9.6" height="9.6"/><path d="M989.2 442.3L989.58 448.2V462.4L989.2 468.2L988.79 462.4V448.2Z"/><path d="M989.2 448.1L989.55 451.8V460.8L989.2 464.4L988.82 460.8V451.8Z"/><rect x="992.6" y="445.7" width="9.6" height="9.6"/><rect x="992.5" y="461.0" width="9.6" height="9.6"/><rect x="992.6" y="456.7" width="9.6" height="9.6"/><rect x="992.6" y="446.3" width="9.6" height="9.6"/><rect x="992.7" y="440.0" width="9.6" height="9.6"/><rect x="992.8" y="457.6" width="9.6" height="9.6"/><rect x="992.9" y="452.8" width="9.6" height="9.6"/><rect x="992.2" y="451.8" width="9.6" height="9.6"/><rect x="992.3" y="463.1" width="9.6" height="9.6"/><rect x="992.0" y="442.0" width="9.6" height="9.6"/><path d="M992.4 445.5L992.86 450.5V462.8L992.4 467.9L991.99 462.8V450.5Z"/><path d="M992.4 448.7L992.83 451.4V457.9L992.4 460.6L992.02 457.9V451.4Z"/><rect x="996.4" y="460.9" width="9.6" height="9.6"/><rect x="996.3" y="439.5" width="9.6" height="9.6"/><rect x="995.5" y="451.6" width="9.6" height="9.6"/><rect x="995.6" y="446.7" width="9.6" height="9.6"/><rect x="995.5" y="449.5" width="9.6" height="9.6"/><rect x="995.6" y="452.3" width="9.6" height="9.6"/><rect x="995.7" y="457.3" width="9.6" height="9.6"/><rect x="996.3" y="446.6" width="9.6" height="9.6"/><rect x="995.4" y="438.7" width="9.6" height="9.6"/><rect x="995.7" y="461.9" width="9.6" height="9.6"/><path d="M995.7 444.2L996.01 449.5V462.4L995.7 467.7L995.37 462.4V449.5Z"/><path d="M995.7 447.2L995.98 451.1V460.6L995.7 464.4L995.39 460.6V451.1Z"/><rect x="998.9" y="453.3" width="9.6" height="9.6"/><rect x="999.3" y="443.3" width="9.6" height="9.6"/><rect x="999.2" y="447.4" width="9.6" height="9.6"/><rect x="999.4" y="466.0" width="9.6" height="9.6"/><rect x="998.9" y="458.5" width="9.6" height="9.6"/><rect x="998.8" y="444.5" width="9.6" height="9.6"/><rect x="999.2" y="464.2" width="9.6" height="9.6"/><rect x="998.8" y="452.7" width="9.6" height="9.6"/><rect x="999.0" y="452.0" width="9.6" height="9.6"/><rect x="999.1" y="468.9" width="9.6" height="9.6"/><path d="M999.4 447.1L999.82 451.6V462.7L999.4 467.2L998.90 462.7V451.6Z"/><path d="M999.4 448.9L999.79 452.9V462.4L999.4 466.4L998.93 462.4V452.9Z"/><rect x="1002.4" y="439.0" width="9.6" height="9.6"/><rect x="1002.5" y="441.0" width="9.6" height="9.6"/><rect x="1002.6" y="442.3" width="9.6" height="9.6"/><rect x="1002.9" y="443.5" width="9.6" height="9.6"/><rect x="1002.6" y="468.3" width="9.6" height="9.6"/><rect x="1002.9" y="459.0" width="9.6" height="9.6"/><rect x="1002.8" y="464.3" width="9.6" height="9.6"/><rect x="1002.7" y="446.5" width="9.6" height="9.6"/><rect x="1002.3" y="454.0" width="9.6" height="9.6"/><rect x="1001.9" y="455.9" width="9.6" height="9.6"/><path d="M1002.2 443.6L1002.69 450.4V467.1L1002.2 473.9L1001.75 467.1V450.4Z"/><path d="M1002.2 447.3L1002.66 451.7V462.6L1002.2 467.1L1001.78 462.6V451.7Z"/><rect x="1005.7" y="437.2" width="9.6" height="9.6"/><rect x="1005.7" y="458.8" width="9.6" height="9.6"/><rect x="1006.0" y="468.0" width="9.6" height="9.6"/><rect x="1006.2" y="455.3" width="9.6" height="9.6"/><rect x="1005.9" y="454.1" width="9.6" height="9.6"/><rect x="1005.8" y="447.5" width="9.6" height="9.6"/><rect x="1006.1" y="456.5" width="9.6" height="9.6"/><rect x="1005.8" y="468.2" width="9.6" height="9.6"/><rect x="1006.1" y="451.0" width="9.6" height="9.6"/><rect x="1006.2" y="454.9" width="9.6" height="9.6"/><path d="M1005.6 446.6L1006.07 451.9V464.8L1005.6 470.1L1005.14 464.8V451.9Z"/><path d="M1005.6 449.1L1006.04 453.9V465.4L1005.6 470.1L1005.17 465.4V453.9Z"/><rect x="1009.0" y="460.5" width="9.6" height="9.6"/><rect x="1009.2" y="455.9" width="9.6" height="9.6"/><rect x="1009.1" y="456.0" width="9.6" height="9.6"/><rect x="1009.3" y="465.5" width="9.6" height="9.6"/><rect x="1009.4" y="459.5" width="9.6" height="9.6"/><rect x="1009.0" y="444.2" width="9.6" height="9.6"/><rect x="1008.6" y="462.5" width="9.6" height="9.6"/><rect x="1008.9" y="452.7" width="9.6" height="9.6"/><rect x="1009.4" y="447.6" width="9.6" height="9.6"/><rect x="1009.2" y="445.6" width="9.6" height="9.6"/><path d="M1009.5 448.0L1010.07 453.2V465.9L1009.5 471.1L1008.96 465.9V453.2Z"/><path d="M1009.5 448.0L1010.04 451.6V460.5L1009.5 464.2L1008.99 460.5V451.6Z"/><rect x="1012.2" y="419.2" width="9.6" height="9.6"/><rect x="1012.4" y="451.1" width="9.6" height="9.6"/><rect x="1012.5" y="454.0" width="9.6" height="9.6"/><rect x="1012.6" y="456.2" width="9.6" height="9.6"/><rect x="1012.1" y="462.0" width="9.6" height="9.6"/><rect x="1012.5" y="454.9" width="9.6" height="9.6"/><rect x="1012.5" y="452.9" width="9.6" height="9.6"/><rect x="1012.0" y="446.4" width="9.6" height="9.6"/><rect x="1012.9" y="463.3" width="9.6" height="9.6"/><rect x="1012.3" y="460.5" width="9.6" height="9.6"/><rect x="1012.3" y="457.6" width="9.6" height="9.6"/><path d="M1012.2 450.2L1012.53 454.4V464.8L1012.2 469.1L1011.96 464.8V454.4Z"/><path d="M1012.2 451.7L1012.51 455.3V464.0L1012.2 467.6L1011.97 464.0V455.3Z"/><rect x="1015.2" y="449.7" width="9.6" height="9.6"/><rect x="1015.5" y="444.9" width="9.6" height="9.6"/><rect x="1016.0" y="448.6" width="9.6" height="9.6"/><rect x="1015.9" y="451.1" width="9.6" height="9.6"/><rect x="1015.4" y="443.9" width="9.6" height="9.6"/><rect x="1015.3" y="454.4" width="9.6" height="9.6"/><rect x="1016.5" y="452.5" width="9.6" height="9.6"/><rect x="1015.8" y="445.5" width="9.6" height="9.6"/><rect x="1015.7" y="465.3" width="9.6" height="9.6"/><rect x="1016.0" y="454.9" width="9.6" height="9.6"/><path d="M1015.7 447.7L1016.16 452.9V465.9L1015.7 471.1L1015.21 465.9V452.9Z"/><path d="M1015.7 451.6L1016.13 455.1V463.5L1015.7 467.0L1015.24 463.5V455.1Z"/><rect x="1019.1" y="462.1" width="9.6" height="9.6"/><rect x="1019.2" y="469.6" width="9.6" height="9.6"/><rect x="1018.7" y="458.6" width="9.6" height="9.6"/><rect x="1019.1" y="449.5" width="9.6" height="9.6"/><rect x="1019.0" y="461.1" width="9.6" height="9.6"/><rect x="1018.9" y="464.1" width="9.6" height="9.6"/><rect x="1019.6" y="463.2" width="9.6" height="9.6"/><rect x="1018.9" y="470.7" width="9.6" height="9.6"/><rect x="1018.9" y="456.4" width="9.6" height="9.6"/><rect x="1018.9" y="468.2" width="9.6" height="9.6"/><path d="M1019.3 453.3L1019.57 458.5V471.2L1019.3 476.5L1018.94 471.2V458.5Z"/><path d="M1019.3 453.3L1019.55 456.7V465.1L1019.3 468.5L1018.96 465.1V456.7Z"/><rect x="1022.7" y="460.1" width="9.6" height="9.6"/><rect x="1022.8" y="462.3" width="9.6" height="9.6"/><rect x="1022.7" y="468.4" width="9.6" height="9.6"/><rect x="1022.0" y="457.6" width="9.6" height="9.6"/><rect x="1022.5" y="470.2" width="9.6" height="9.6"/><rect x="1022.1" y="450.5" width="9.6" height="9.6"/><rect x="1022.7" y="460.2" width="9.6" height="9.6"/><rect x="1023.0" y="461.6" width="9.6" height="9.6"/><rect x="1022.4" y="456.1" width="9.6" height="9.6"/><rect x="1021.8" y="453.4" width="9.6" height="9.6"/><path d="M1022.7 454.3L1023.17 459.1V470.7L1022.7 475.4L1022.33 470.7V459.1Z"/><path d="M1022.7 454.3L1023.14 458.1V467.1L1022.7 470.8L1022.35 467.1V458.1Z"/><rect x="1025.5" y="475.5" width="9.6" height="9.6"/><rect x="1025.9" y="474.3" width="9.6" height="9.6"/><rect x="1025.6" y="475.3" width="9.6" height="9.6"/><rect x="1025.9" y="467.4" width="9.6" height="9.6"/><rect x="1026.0" y="451.2" width="9.6" height="9.6"/><rect x="1025.8" y="468.5" width="9.6" height="9.6"/><rect x="1025.7" y="462.8" width="9.6" height="9.6"/><rect x="1025.7" y="461.4" width="9.6" height="9.6"/><rect x="1025.8" y="469.0" width="9.6" height="9.6"/><rect x="1025.5" y="449.3" width="9.6" height="9.6"/><path d="M1025.7 453.1L1026.05 458.8V472.9L1025.7 478.7L1025.40 472.9V458.8Z"/><path d="M1025.7 455.5L1026.03 459.2V468.2L1025.7 471.9L1025.42 468.2V459.2Z"/><rect x="1028.9" y="459.1" width="9.6" height="9.6"/><rect x="1029.1" y="455.2" width="9.6" height="9.6"/><rect x="1028.8" y="452.4" width="9.6" height="9.6"/><rect x="1028.8" y="463.0" width="9.6" height="9.6"/><rect x="1029.3" y="448.3" width="9.6" height="9.6"/><rect x="1029.4" y="461.1" width="9.6" height="9.6"/><rect x="1029.4" y="464.5" width="9.6" height="9.6"/><rect x="1028.9" y="465.5" width="9.6" height="9.6"/><rect x="1029.2" y="461.3" width="9.6" height="9.6"/><rect x="1028.4" y="464.9" width="9.6" height="9.6"/><path d="M1029.2 452.1L1029.55 456.4V467.0L1029.2 471.3L1028.83 467.0V456.4Z"/><path d="M1029.2 459.8L1029.53 462.4V468.7L1029.2 471.3L1028.85 468.7V462.4Z"/><rect x="1032.5" y="457.4" width="9.6" height="9.6"/><rect x="1032.5" y="464.0" width="9.6" height="9.6"/><rect x="1032.5" y="467.4" width="9.6" height="9.6"/><rect x="1032.3" y="455.4" width="9.6" height="9.6"/><rect x="1032.4" y="455.7" width="9.6" height="9.6"/><rect x="1032.8" y="450.5" width="9.6" height="9.6"/><rect x="1032.3" y="461.6" width="9.6" height="9.6"/><rect x="1032.1" y="467.3" width="9.6" height="9.6"/><rect x="1032.5" y="463.4" width="9.6" height="9.6"/><rect x="1032.3" y="464.6" width="9.6" height="9.6"/><path d="M1032.3 455.6L1032.69 459.6V469.3L1032.3 473.2L1031.99 469.3V459.6Z"/><path d="M1032.3 462.3L1032.67 464.8V470.8L1032.3 473.2L1032.01 470.8V464.8Z"/><rect x="1035.5" y="458.2" width="9.6" height="9.6"/><rect x="1035.7" y="458.4" width="9.6" height="9.6"/><rect x="1035.7" y="467.1" width="9.6" height="9.6"/><rect x="1035.8" y="472.4" width="9.6" height="9.6"/><rect x="1035.6" y="464.6" width="9.6" height="9.6"/><rect x="1035.6" y="479.2" width="9.6" height="9.6"/><rect x="1035.3" y="476.3" width="9.6" height="9.6"/><rect x="1035.7" y="458.3" width="9.6" height="9.6"/><rect x="1035.0" y="475.9" width="9.6" height="9.6"/><rect x="1036.0" y="458.5" width="9.6" height="9.6"/><path d="M1036.1 462.0L1036.38 467.0V479.5L1036.1 484.6L1035.75 479.5V467.0Z"/><path d="M1036.1 463.2L1036.36 466.8V475.5L1036.1 479.1L1035.77 475.5V466.8Z"/><rect x="1038.2" y="394.7" width="9.6" height="9.6"/><rect x="1039.3" y="466.6" width="9.6" height="9.6"/><rect x="1039.5" y="469.9" width="9.6" height="9.6"/><rect x="1039.4" y="470.9" width="9.6" height="9.6"/><rect x="1038.9" y="471.6" width="9.6" height="9.6"/><rect x="1038.9" y="474.2" width="9.6" height="9.6"/><rect x="1039.4" y="470.1" width="9.6" height="9.6"/><rect x="1039.5" y="464.7" width="9.6" height="9.6"/><rect x="1038.9" y="466.8" width="9.6" height="9.6"/><rect x="1039.1" y="469.0" width="9.6" height="9.6"/><rect x="1039.6" y="473.5" width="9.6" height="9.6"/><path d="M1039.3 468.5L1039.62 471.1V477.4L1039.3 480.0L1039.07 477.4V471.1Z"/><path d="M1039.3 468.5L1039.60 470.6V475.9L1039.3 478.1L1039.09 475.9V470.6Z"/><rect x="1042.3" y="460.9" width="9.6" height="9.6"/><rect x="1041.8" y="472.2" width="9.6" height="9.6"/><rect x="1042.2" y="466.5" width="9.6" height="9.6"/><rect x="1042.6" y="465.6" width="9.6" height="9.6"/><rect x="1042.3" y="473.6" width="9.6" height="9.6"/><rect x="1042.4" y="464.6" width="9.6" height="9.6"/><rect x="1042.5" y="475.2" width="9.6" height="9.6"/><rect x="1041.9" y="460.1" width="9.6" height="9.6"/><rect x="1042.4" y="466.3" width="9.6" height="9.6"/><rect x="1042.6" y="478.3" width="9.6" height="9.6"/><path d="M1042.3 463.9L1042.67 468.0V478.2L1042.3 482.3L1041.93 478.2V468.0Z"/><path d="M1042.3 465.6L1042.65 468.2V474.8L1042.3 477.4L1041.96 474.8V468.2Z"/><rect x="1042.7" y="492.2" width="9.6" height="9.6"/><rect x="1045.2" y="399.2" width="9.6" height="9.6"/><rect x="1045.5" y="477.2" width="9.6" height="9.6"/><rect x="1045.8" y="471.2" width="9.6" height="9.6"/><rect x="1045.7" y="476.3" width="9.6" height="9.6"/><rect x="1044.9" y="459.4" width="9.6" height="9.6"/><rect x="1045.3" y="463.3" width="9.6" height="9.6"/><rect x="1045.6" y="472.8" width="9.6" height="9.6"/><rect x="1045.5" y="473.2" width="9.6" height="9.6"/><rect x="1045.9" y="465.2" width="9.6" height="9.6"/><rect x="1046.0" y="465.0" width="9.6" height="9.6"/><rect x="1045.3" y="468.0" width="9.6" height="9.6"/><path d="M1045.2 463.2L1045.65 467.7V478.5L1045.2 483.0L1044.84 478.5V467.7Z"/><path d="M1045.2 467.9L1045.62 470.5V477.1L1045.2 479.7L1044.87 477.1V470.5Z"/><rect x="1049.4" y="473.9" width="9.6" height="9.6"/><rect x="1048.9" y="472.4" width="9.6" height="9.6"/><rect x="1049.0" y="462.0" width="9.6" height="9.6"/><rect x="1049.0" y="474.0" width="9.6" height="9.6"/><rect x="1048.9" y="471.2" width="9.6" height="9.6"/><rect x="1049.1" y="470.8" width="9.6" height="9.6"/><rect x="1048.4" y="466.8" width="9.6" height="9.6"/><rect x="1048.8" y="475.1" width="9.6" height="9.6"/><rect x="1049.0" y="468.0" width="9.6" height="9.6"/><rect x="1048.7" y="462.6" width="9.6" height="9.6"/><path d="M1049.0 466.9L1049.49 470.0V477.7L1049.0 480.9L1048.45 477.7V470.0Z"/><path d="M1049.0 471.1L1049.46 473.3V478.7L1049.0 480.9L1048.49 478.7V473.3Z"/><rect x="1052.4" y="481.3" width="9.6" height="9.6"/><rect x="1052.2" y="467.3" width="9.6" height="9.6"/><rect x="1052.3" y="467.4" width="9.6" height="9.6"/><rect x="1052.6" y="468.3" width="9.6" height="9.6"/><rect x="1052.5" y="461.2" width="9.6" height="9.6"/><rect x="1052.5" y="465.4" width="9.6" height="9.6"/><rect x="1052.5" y="469.2" width="9.6" height="9.6"/><rect x="1052.3" y="468.2" width="9.6" height="9.6"/><rect x="1052.3" y="473.9" width="9.6" height="9.6"/><rect x="1052.7" y="472.0" width="9.6" height="9.6"/><path d="M1052.3 468.9L1052.69 472.9V482.7L1052.3 486.7L1051.95 482.7V472.9Z"/><path d="M1052.3 472.4L1052.67 475.0V481.4L1052.3 484.0L1051.97 481.4V475.0Z"/><rect x="1055.5" y="465.2" width="9.6" height="9.6"/><rect x="1055.9" y="472.6" width="9.6" height="9.6"/><rect x="1055.5" y="470.3" width="9.6" height="9.6"/><rect x="1055.2" y="468.6" width="9.6" height="9.6"/><rect x="1055.8" y="472.9" width="9.6" height="9.6"/><rect x="1056.1" y="472.8" width="9.6" height="9.6"/><rect x="1055.8" y="466.8" width="9.6" height="9.6"/><rect x="1055.5" y="475.1" width="9.6" height="9.6"/><rect x="1055.5" y="475.7" width="9.6" height="9.6"/><rect x="1056.1" y="471.6" width="9.6" height="9.6"/><path d="M1055.7 469.0L1056.00 471.8V478.7L1055.7 481.5L1055.45 478.7V471.8Z"/><path d="M1055.7 471.3L1055.98 473.5V479.0L1055.7 481.3L1055.47 479.0V473.5Z"/><rect x="1058.2" y="490.2" width="9.6" height="9.6"/><rect x="1058.5" y="472.0" width="9.6" height="9.6"/><rect x="1058.9" y="473.4" width="9.6" height="9.6"/><rect x="1058.9" y="481.4" width="9.6" height="9.6"/><rect x="1058.7" y="474.4" width="9.6" height="9.6"/><rect x="1058.8" y="465.0" width="9.6" height="9.6"/><rect x="1059.3" y="472.5" width="9.6" height="9.6"/><rect x="1059.0" y="475.1" width="9.6" height="9.6"/><rect x="1059.1" y="471.2" width="9.6" height="9.6"/><rect x="1059.0" y="477.3" width="9.6" height="9.6"/><rect x="1058.9" y="475.7" width="9.6" height="9.6"/><path d="M1059.2 470.6L1059.53 474.3V483.5L1059.2 487.2L1058.95 483.5V474.3Z"/><path d="M1059.2 474.2L1059.51 476.0V480.3L1059.2 482.1L1058.97 480.3V476.0Z"/><rect x="1062.5" y="471.9" width="9.6" height="9.6"/><rect x="1062.0" y="483.1" width="9.6" height="9.6"/><rect x="1062.4" y="475.6" width="9.6" height="9.6"/><rect x="1062.3" y="472.0" width="9.6" height="9.6"/><rect x="1062.3" y="469.5" width="9.6" height="9.6"/><rect x="1062.2" y="482.1" width="9.6" height="9.6"/><rect x="1061.6" y="482.5" width="9.6" height="9.6"/><rect x="1063.0" y="471.9" width="9.6" height="9.6"/><rect x="1062.3" y="466.8" width="9.6" height="9.6"/><rect x="1062.5" y="480.7" width="9.6" height="9.6"/><path d="M1062.6 470.6L1062.96 474.7V484.7L1062.6 488.8L1062.23 484.7V474.7Z"/><path d="M1062.6 473.6L1062.93 476.7V484.0L1062.6 487.1L1062.25 484.0V476.7Z"/><rect x="1065.3" y="473.2" width="9.6" height="9.6"/><rect x="1066.1" y="477.0" width="9.6" height="9.6"/><rect x="1065.3" y="476.9" width="9.6" height="9.6"/><rect x="1066.2" y="475.4" width="9.6" height="9.6"/><rect x="1065.7" y="479.5" width="9.6" height="9.6"/><rect x="1065.7" y="478.7" width="9.6" height="9.6"/><rect x="1065.2" y="480.9" width="9.6" height="9.6"/><rect x="1065.6" y="479.9" width="9.6" height="9.6"/><rect x="1065.6" y="478.4" width="9.6" height="9.6"/><rect x="1065.5" y="475.4" width="9.6" height="9.6"/><path d="M1065.5 477.0L1065.89 479.2V484.5L1065.5 486.7L1065.18 484.5V479.2Z"/><path d="M1065.5 477.0L1065.87 479.2V484.5L1065.5 486.7L1065.21 484.5V479.2Z"/><rect x="1068.6" y="484.0" width="9.6" height="9.6"/><rect x="1069.1" y="476.1" width="9.6" height="9.6"/><rect x="1068.4" y="482.3" width="9.6" height="9.6"/><rect x="1068.8" y="482.1" width="9.6" height="9.6"/><rect x="1069.0" y="475.7" width="9.6" height="9.6"/><rect x="1069.4" y="483.3" width="9.6" height="9.6"/><rect x="1069.5" y="480.5" width="9.6" height="9.6"/><rect x="1068.9" y="479.1" width="9.6" height="9.6"/><rect x="1068.7" y="478.5" width="9.6" height="9.6"/><rect x="1068.7" y="481.0" width="9.6" height="9.6"/><path d="M1069.1 479.5L1069.53 481.8V487.5L1069.1 489.8L1068.65 487.5V481.8Z"/><path d="M1069.1 479.6L1069.50 481.4V485.8L1069.1 487.5L1068.68 485.8V481.4Z"/><rect x="1072.2" y="406.2" width="9.6" height="9.6"/><rect x="1072.2" y="471.4" width="9.6" height="9.6"/><rect x="1072.3" y="469.8" width="9.6" height="9.6"/><rect x="1072.5" y="473.0" width="9.6" height="9.6"/><rect x="1072.3" y="473.7" width="9.6" height="9.6"/><rect x="1072.3" y="479.3" width="9.6" height="9.6"/><rect x="1071.9" y="467.4" width="9.6" height="9.6"/><rect x="1072.7" y="472.4" width="9.6" height="9.6"/><rect x="1072.2" y="477.9" width="9.6" height="9.6"/><rect x="1072.3" y="469.2" width="9.6" height="9.6"/><rect x="1072.2" y="468.8" width="9.6" height="9.6"/><path d="M1072.4 471.2L1072.81 474.3V482.0L1072.4 485.1L1072.00 482.0V474.3Z"/><path d="M1072.4 471.8L1072.78 474.5V481.1L1072.4 483.8L1072.03 481.1V474.5Z"/><rect x="1076.1" y="475.3" width="9.6" height="9.6"/><rect x="1075.8" y="461.0" width="9.6" height="9.6"/><rect x="1075.9" y="474.0" width="9.6" height="9.6"/><rect x="1075.8" y="461.9" width="9.6" height="9.6"/><rect x="1075.8" y="470.9" width="9.6" height="9.6"/><rect x="1075.8" y="469.5" width="9.6" height="9.6"/><rect x="1075.5" y="474.8" width="9.6" height="9.6"/><rect x="1075.3" y="464.7" width="9.6" height="9.6"/><rect x="1075.6" y="475.4" width="9.6" height="9.6"/><rect x="1075.5" y="468.1" width="9.6" height="9.6"/><path d="M1075.6 464.8L1076.03 468.5V477.5L1075.6 481.2L1075.20 477.5V468.5Z"/><path d="M1075.6 468.5L1076.00 471.4V478.3L1075.6 481.2L1075.22 478.3V471.4Z"/><rect x="1076.7" y="410.7" width="9.6" height="9.6"/><rect x="1077.7" y="401.2" width="9.6" height="9.6"/><rect x="1078.8" y="470.7" width="9.6" height="9.6"/><rect x="1079.1" y="472.6" width="9.6" height="9.6"/><rect x="1078.4" y="467.7" width="9.6" height="9.6"/><rect x="1079.0" y="473.5" width="9.6" height="9.6"/><rect x="1078.9" y="463.1" width="9.6" height="9.6"/><rect x="1078.8" y="475.5" width="9.6" height="9.6"/><rect x="1078.8" y="477.4" width="9.6" height="9.6"/><rect x="1078.5" y="476.9" width="9.6" height="9.6"/><rect x="1078.7" y="470.1" width="9.6" height="9.6"/><rect x="1078.9" y="468.4" width="9.6" height="9.6"/><path d="M1078.8 466.9L1079.06 470.3V478.7L1078.8 482.1L1078.47 478.7V470.3Z"/><path d="M1078.8 469.5L1079.04 472.1V478.4L1078.8 481.0L1078.49 478.4V472.1Z"/><rect x="1082.3" y="474.2" width="9.6" height="9.6"/><rect x="1082.1" y="465.8" width="9.6" height="9.6"/><rect x="1082.1" y="470.7" width="9.6" height="9.6"/><rect x="1082.3" y="477.3" width="9.6" height="9.6"/><rect x="1082.3" y="465.2" width="9.6" height="9.6"/><rect x="1082.4" y="470.2" width="9.6" height="9.6"/><rect x="1081.8" y="472.5" width="9.6" height="9.6"/><rect x="1082.2" y="468.4" width="9.6" height="9.6"/><rect x="1082.7" y="472.9" width="9.6" height="9.6"/><rect x="1082.3" y="469.7" width="9.6" height="9.6"/><path d="M1082.5 469.0L1082.75 472.2V480.0L1082.5 483.1L1082.23 480.0V472.2Z"/><path d="M1082.5 472.9L1082.73 474.8V479.5L1082.5 481.4L1082.25 479.5V474.8Z"/><rect x="1083.7" y="401.2" width="9.6" height="9.6"/><rect x="1085.2" y="449.2" width="9.6" height="9.6"/><rect x="1085.5" y="476.1" width="9.6" height="9.6"/><rect x="1086.0" y="463.4" width="9.6" height="9.6"/><rect x="1085.8" y="462.7" width="9.6" height="9.6"/><rect x="1085.4" y="472.6" width="9.6" height="9.6"/><rect x="1085.3" y="464.2" width="9.6" height="9.6"/><rect x="1085.2" y="475.7" width="9.6" height="9.6"/><rect x="1085.5" y="464.7" width="9.6" height="9.6"/><rect x="1085.6" y="463.4" width="9.6" height="9.6"/><rect x="1085.2" y="458.6" width="9.6" height="9.6"/><rect x="1085.7" y="473.3" width="9.6" height="9.6"/><path d="M1085.6 462.7L1086.06 466.9V477.0L1085.6 481.2L1085.21 477.0V466.9Z"/><path d="M1085.6 469.1L1086.03 471.2V476.4L1085.6 478.6L1085.24 476.4V471.2Z"/><rect x="1087.7" y="403.2" width="9.6" height="9.6"/><rect x="1087.7" y="410.7" width="9.6" height="9.6"/><rect x="1088.9" y="463.0" width="9.6" height="9.6"/><rect x="1089.5" y="470.9" width="9.6" height="9.6"/><rect x="1089.0" y="465.4" width="9.6" height="9.6"/><rect x="1088.8" y="470.7" width="9.6" height="9.6"/><rect x="1089.0" y="478.0" width="9.6" height="9.6"/><rect x="1089.0" y="473.7" width="9.6" height="9.6"/><rect x="1089.2" y="461.0" width="9.6" height="9.6"/><rect x="1088.7" y="474.3" width="9.6" height="9.6"/><rect x="1089.1" y="481.0" width="9.6" height="9.6"/><rect x="1088.9" y="477.3" width="9.6" height="9.6"/><path d="M1088.9 467.2L1089.17 471.6V482.4L1088.9 486.8L1088.73 482.4V471.6Z"/><path d="M1088.9 467.2L1089.15 470.1V477.2L1088.9 480.2L1088.74 477.2V470.1Z"/><rect x="1092.4" y="468.0" width="9.6" height="9.6"/><rect x="1092.2" y="456.2" width="9.6" height="9.6"/><rect x="1092.8" y="469.5" width="9.6" height="9.6"/><rect x="1092.5" y="453.3" width="9.6" height="9.6"/><rect x="1091.7" y="461.6" width="9.6" height="9.6"/><rect x="1092.3" y="463.1" width="9.6" height="9.6"/><rect x="1092.3" y="455.7" width="9.6" height="9.6"/><rect x="1091.7" y="469.8" width="9.6" height="9.6"/><rect x="1091.8" y="455.8" width="9.6" height="9.6"/><rect x="1092.7" y="457.7" width="9.6" height="9.6"/><path d="M1092.7 460.5L1092.98 463.9V472.2L1092.7 475.6L1092.39 472.2V463.9Z"/><path d="M1092.7 461.7L1092.96 464.8V472.5L1092.7 475.6L1092.41 472.5V464.8Z"/><rect x="1095.3" y="461.4" width="9.6" height="9.6"/><rect x="1095.8" y="458.8" width="9.6" height="9.6"/><rect x="1095.8" y="473.4" width="9.6" height="9.6"/><rect x="1095.6" y="470.3" width="9.6" height="9.6"/><rect x="1095.1" y="453.5" width="9.6" height="9.6"/><rect x="1095.2" y="465.7" width="9.6" height="9.6"/><rect x="1095.2" y="462.2" width="9.6" height="9.6"/><rect x="1095.5" y="464.3" width="9.6" height="9.6"/><rect x="1095.3" y="466.3" width="9.6" height="9.6"/><rect x="1095.0" y="467.1" width="9.6" height="9.6"/><path d="M1095.5 457.3L1095.73 462.3V474.2L1095.5 479.2L1095.35 474.2V462.3Z"/><path d="M1095.5 461.2L1095.72 464.1V471.2L1095.5 474.1L1095.36 471.2V464.1Z"/><rect x="1099.2" y="450.2" width="9.6" height="9.6"/><rect x="1099.1" y="471.7" width="9.6" height="9.6"/><rect x="1098.9" y="462.8" width="9.6" height="9.6"/><rect x="1099.0" y="461.6" width="9.6" height="9.6"/><rect x="1099.1" y="464.0" width="9.6" height="9.6"/><rect x="1098.7" y="467.5" width="9.6" height="9.6"/><rect x="1099.0" y="455.4" width="9.6" height="9.6"/><rect x="1098.7" y="463.3" width="9.6" height="9.6"/><rect x="1098.8" y="470.4" width="9.6" height="9.6"/><path d="M1099.1 454.0L1099.25 459.3V472.2L1099.1 477.5L1098.90 472.2V459.3Z"/><path d="M1099.1 461.3L1099.23 464.2V471.3L1099.1 474.3L1098.92 471.3V464.2Z"/><rect x="1102.1" y="469.6" width="9.6" height="9.6"/><rect x="1102.3" y="451.0" width="9.6" height="9.6"/><rect x="1102.0" y="472.3" width="9.6" height="9.6"/><rect x="1102.1" y="455.9" width="9.6" height="9.6"/><rect x="1102.1" y="456.0" width="9.6" height="9.6"/><rect x="1102.1" y="467.2" width="9.6" height="9.6"/><rect x="1101.9" y="467.9" width="9.6" height="9.6"/><rect x="1102.1" y="461.8" width="9.6" height="9.6"/><rect x="1102.2" y="462.4" width="9.6" height="9.6"/><path d="M1101.7 454.8L1101.90 460.0V472.9L1101.7 478.1L1101.55 472.9V460.0Z"/><path d="M1101.7 461.2L1101.88 463.7V469.7L1101.7 472.2L1101.56 469.7V463.7Z"/><rect x="1102.7" y="493.2" width="9.6" height="9.6"/><rect x="1105.2" y="357.2" width="9.6" height="9.6"/><rect x="1105.2" y="389.2" width="9.6" height="9.6"/><rect x="1105.8" y="457.6" width="9.6" height="9.6"/><rect x="1104.7" y="460.0" width="9.6" height="9.6"/><rect x="1104.9" y="459.5" width="9.6" height="9.6"/><rect x="1105.5" y="452.2" width="9.6" height="9.6"/><rect x="1105.3" y="465.2" width="9.6" height="9.6"/><rect x="1105.4" y="469.4" width="9.6" height="9.6"/><rect x="1105.4" y="464.5" width="9.6" height="9.6"/><rect x="1105.1" y="462.8" width="9.6" height="9.6"/><path d="M1105.7 456.0L1106.00 460.3V470.9L1105.7 475.2L1105.44 470.9V460.3Z"/><path d="M1105.7 460.8L1105.98 463.2V469.1L1105.7 471.5L1105.46 469.1V463.2Z"/><rect x="1109.3" y="451.2" width="9.6" height="9.6"/><rect x="1108.6" y="454.3" width="9.6" height="9.6"/><rect x="1109.0" y="456.6" width="9.6" height="9.6"/><rect x="1109.2" y="459.8" width="9.6" height="9.6"/><rect x="1108.5" y="465.9" width="9.6" height="9.6"/><rect x="1109.2" y="466.5" width="9.6" height="9.6"/><rect x="1108.9" y="464.3" width="9.6" height="9.6"/><rect x="1108.9" y="467.5" width="9.6" height="9.6"/><path d="M1108.8 455.0L1108.95 458.5V467.1L1108.8 470.6L1108.63 467.1V458.5Z"/><path d="M1108.8 456.4L1108.94 459.4V466.7L1108.8 469.8L1108.64 466.7V459.4Z"/><rect x="1111.9" y="454.2" width="9.6" height="9.6"/><rect x="1111.7" y="456.8" width="9.6" height="9.6"/><rect x="1112.0" y="461.2" width="9.6" height="9.6"/><rect x="1112.4" y="456.5" width="9.6" height="9.6"/><rect x="1111.8" y="460.8" width="9.6" height="9.6"/><rect x="1111.7" y="457.0" width="9.6" height="9.6"/><rect x="1112.1" y="458.1" width="9.6" height="9.6"/><path d="M1112.0 458.0L1112.19 460.0V464.9L1112.0 467.0L1111.84 464.9V460.0Z"/><path d="M1112.0 458.0L1112.17 460.0V464.9L1112.0 467.0L1111.85 464.9V460.0Z"/><rect x="1112.2" y="387.2" width="9.6" height="9.6"/><rect x="1115.5" y="454.6" width="9.6" height="9.6"/><rect x="1115.0" y="448.0" width="9.6" height="9.6"/><rect x="1115.4" y="461.4" width="9.6" height="9.6"/><rect x="1115.0" y="457.9" width="9.6" height="9.6"/><rect x="1115.6" y="459.7" width="9.6" height="9.6"/><rect x="1114.9" y="461.6" width="9.6" height="9.6"/><rect x="1115.6" y="458.7" width="9.6" height="9.6"/><path d="M1115.7 451.8L1115.89 455.3V463.9L1115.7 467.4L1115.48 463.9V455.3Z"/><path d="M1115.7 452.8L1115.88 455.6V462.6L1115.7 465.4L1115.50 462.6V455.6Z"/><rect x="1117.7" y="380.2" width="9.6" height="9.6"/><rect x="1119.2" y="459.4" width="9.6" height="9.6"/><rect x="1118.8" y="457.1" width="9.6" height="9.6"/><rect x="1118.8" y="462.8" width="9.6" height="9.6"/><rect x="1118.6" y="451.5" width="9.6" height="9.6"/><rect x="1118.2" y="467.3" width="9.6" height="9.6"/><rect x="1118.9" y="448.5" width="9.6" height="9.6"/><path d="M1118.9 455.0L1119.08 458.9V468.4L1118.9 472.3L1118.64 468.4V458.9Z"/><path d="M1118.9 457.7L1119.07 460.3V466.7L1118.9 469.3L1118.66 466.7V460.3Z"/><rect x="1122.7" y="454.2" width="9.6" height="9.6"/><rect x="1122.4" y="463.4" width="9.6" height="9.6"/><rect x="1122.2" y="452.0" width="9.6" height="9.6"/><rect x="1121.5" y="454.5" width="9.6" height="9.6"/><rect x="1122.4" y="451.6" width="9.6" height="9.6"/><rect x="1122.5" y="463.2" width="9.6" height="9.6"/><path d="M1121.9 455.4L1122.12 458.5V466.1L1121.9 469.2L1121.74 466.1V458.5Z"/><path d="M1121.9 455.4L1122.11 457.7V463.5L1121.9 465.8L1121.75 463.5V457.7Z"/><rect x="1125.6" y="455.0" width="9.6" height="9.6"/><rect x="1125.4" y="460.6" width="9.6" height="9.6"/><rect x="1125.3" y="463.2" width="9.6" height="9.6"/><rect x="1125.1" y="464.8" width="9.6" height="9.6"/><rect x="1125.8" y="462.5" width="9.6" height="9.6"/><rect x="1125.4" y="455.1" width="9.6" height="9.6"/><path d="M1125.3 458.8L1125.50 461.5V467.9L1125.3 470.6L1125.15 467.9V461.5Z"/><path d="M1125.3 458.8L1125.48 460.7V465.2L1125.3 467.0L1125.17 465.2V460.7Z"/><rect x="1128.9" y="457.6" width="9.6" height="9.6"/><rect x="1129.0" y="454.1" width="9.6" height="9.6"/><rect x="1128.8" y="447.5" width="9.6" height="9.6"/><rect x="1128.8" y="451.5" width="9.6" height="9.6"/><rect x="1128.8" y="453.7" width="9.6" height="9.6"/><rect x="1128.3" y="454.1" width="9.6" height="9.6"/><path d="M1128.3 451.3L1128.55 454.0V460.7L1128.3 463.4L1128.14 460.7V454.0Z"/><path d="M1128.3 451.9L1128.53 454.4V460.5L1128.3 462.9L1128.15 460.5V454.4Z"/><rect x="1132.0" y="449.6" width="9.6" height="9.6"/><rect x="1131.8" y="458.2" width="9.6" height="9.6"/><rect x="1131.8" y="457.3" width="9.6" height="9.6"/><rect x="1132.0" y="447.9" width="9.6" height="9.6"/><rect x="1132.0" y="450.0" width="9.6" height="9.6"/><rect x="1131.9" y="444.9" width="9.6" height="9.6"/><path d="M1132.1 448.7L1132.30 452.2V460.5L1132.1 464.0L1131.91 460.5V452.2Z"/><path d="M1132.1 452.0L1132.29 454.2V459.6L1132.1 461.8L1131.92 459.6V454.2Z"/><rect x="1135.5" y="461.3" width="9.6" height="9.6"/><rect x="1134.9" y="455.4" width="9.6" height="9.6"/><rect x="1135.3" y="464.2" width="9.6" height="9.6"/><rect x="1135.7" y="457.7" width="9.6" height="9.6"/><rect x="1135.6" y="456.7" width="9.6" height="9.6"/><rect x="1135.6" y="457.9" width="9.6" height="9.6"/><path d="M1135.3 459.2L1135.41 461.6V467.4L1135.3 469.7L1135.09 467.4V461.6Z"/><path d="M1135.3 459.2L1135.40 460.7V464.4L1135.3 465.9L1135.10 464.4V460.7Z"/><rect x="1139.0" y="442.1" width="9.6" height="9.6"/><rect x="1139.3" y="447.1" width="9.6" height="9.6"/><rect x="1138.6" y="456.2" width="9.6" height="9.6"/><rect x="1138.3" y="451.4" width="9.6" height="9.6"/><rect x="1138.5" y="444.4" width="9.6" height="9.6"/><rect x="1138.7" y="453.1" width="9.6" height="9.6"/><path d="M1138.6 445.9L1138.80 449.5V458.4L1138.6 462.0L1138.49 458.4V449.5Z"/><path d="M1138.6 449.2L1138.79 452.0V459.1L1138.6 462.0L1138.50 459.1V452.0Z"/><rect x="1141.9" y="443.2" width="9.6" height="9.6"/><rect x="1142.3" y="451.7" width="9.6" height="9.6"/><rect x="1142.0" y="437.2" width="9.6" height="9.6"/><rect x="1141.9" y="446.0" width="9.6" height="9.6"/><rect x="1142.1" y="436.0" width="9.6" height="9.6"/><rect x="1142.3" y="439.3" width="9.6" height="9.6"/><path d="M1141.8 444.5L1141.90 447.4V454.5L1141.8 457.5L1141.68 454.5V447.4Z"/><path d="M1141.8 444.5L1141.89 447.4V454.5L1141.8 457.5L1141.69 454.5V447.4Z"/><rect x="1145.2" y="446.2" width="9.6" height="9.6"/><rect x="1145.4" y="455.7" width="9.6" height="9.6"/><rect x="1145.3" y="448.7" width="9.6" height="9.6"/><rect x="1145.2" y="450.1" width="9.6" height="9.6"/><rect x="1145.2" y="451.0" width="9.6" height="9.6"/><rect x="1144.9" y="456.4" width="9.6" height="9.6"/><path d="M1145.2 450.0L1145.34 452.7V459.4L1145.2 462.2L1144.96 459.4V452.7Z"/><path d="M1145.2 450.5L1145.33 453.1V459.3L1145.2 461.9L1144.97 459.3V453.1Z"/><rect x="1149.3" y="448.0" width="9.6" height="9.6"/><rect x="1149.0" y="454.1" width="9.6" height="9.6"/><rect x="1148.6" y="449.2" width="9.6" height="9.6"/><rect x="1148.9" y="447.2" width="9.6" height="9.6"/><rect x="1149.0" y="453.3" width="9.6" height="9.6"/><rect x="1148.2" y="453.1" width="9.6" height="9.6"/><path d="M1148.5 451.0L1148.59 453.0V457.9L1148.5 459.9L1148.33 457.9V453.0Z"/><path d="M1148.5 451.0L1148.58 452.7V457.0L1148.5 458.7L1148.34 457.0V452.7Z"/><rect x="1152.2" y="450.7" width="9.6" height="9.6"/><rect x="1152.1" y="446.5" width="9.6" height="9.6"/><rect x="1152.0" y="447.7" width="9.6" height="9.6"/><rect x="1152.0" y="440.7" width="9.6" height="9.6"/><rect x="1152.4" y="453.8" width="9.6" height="9.6"/><rect x="1151.6" y="454.5" width="9.6" height="9.6"/><path d="M1152.2 444.5L1152.36 448.1V456.8L1152.2 460.3L1152.12 456.8V448.1Z"/><path d="M1152.2 445.9L1152.36 448.8V455.8L1152.2 458.7L1152.13 455.8V448.8Z"/><rect x="1152.2" y="425.2" width="9.6" height="9.6"/><rect x="1152.2" y="432.2" width="9.6" height="9.6"/><rect x="1155.3" y="442.2" width="9.6" height="9.6"/><rect x="1155.4" y="456.0" width="9.6" height="9.6"/><rect x="1155.9" y="444.9" width="9.6" height="9.6"/><rect x="1154.8" y="454.3" width="9.6" height="9.6"/><rect x="1155.2" y="454.3" width="9.6" height="9.6"/><rect x="1155.2" y="453.6" width="9.6" height="9.6"/><path d="M1155.8 446.0L1155.91 449.4V457.7L1155.8 461.1L1155.67 457.7V449.4Z"/><path d="M1155.8 447.6L1155.90 449.9V455.4L1155.8 457.7L1155.68 455.4V449.9Z"/><rect x="1158.1" y="453.1" width="9.6" height="9.6"/><rect x="1158.8" y="454.5" width="9.6" height="9.6"/><rect x="1158.7" y="443.7" width="9.6" height="9.6"/><rect x="1158.3" y="450.7" width="9.6" height="9.6"/><rect x="1158.7" y="448.7" width="9.6" height="9.6"/><rect x="1158.9" y="442.1" width="9.6" height="9.6"/><path d="M1159.1 445.9L1159.30 449.1V457.0L1159.1 460.3L1158.97 457.0V449.1Z"/><path d="M1159.1 450.3L1159.29 452.4V457.8L1159.1 460.0L1158.99 457.8V452.4Z"/><rect x="1161.9" y="441.5" width="9.6" height="9.6"/><rect x="1161.7" y="448.0" width="9.6" height="9.6"/><rect x="1161.3" y="449.4" width="9.6" height="9.6"/><rect x="1161.8" y="457.1" width="9.6" height="9.6"/><rect x="1162.2" y="446.6" width="9.6" height="9.6"/><rect x="1162.0" y="451.3" width="9.6" height="9.6"/><path d="M1161.8 445.3L1161.99 449.3V459.0L1161.8 462.9L1161.71 459.0V449.3Z"/><path d="M1161.8 448.2L1161.98 450.4V455.8L1161.8 458.1L1161.71 455.8V450.4Z"/><rect x="1164.7" y="448.7" width="9.6" height="9.6"/><rect x="1165.3" y="453.6" width="9.6" height="9.6"/><rect x="1165.4" y="451.3" width="9.6" height="9.6"/><rect x="1165.6" y="452.9" width="9.6" height="9.6"/><rect x="1164.6" y="447.6" width="9.6" height="9.6"/><rect x="1165.3" y="445.9" width="9.6" height="9.6"/><path d="M1165.2 450.8L1165.38 452.8V457.5L1165.2 459.4L1165.00 457.5V452.8Z"/><path d="M1165.2 452.4L1165.36 454.0V457.8L1165.2 459.4L1165.01 457.8V454.0Z"/><rect x="1169.0" y="450.0" width="9.6" height="9.6"/><rect x="1168.4" y="447.6" width="9.6" height="9.6"/><rect x="1168.6" y="448.2" width="9.6" height="9.6"/><rect x="1168.8" y="452.0" width="9.6" height="9.6"/><rect x="1168.3" y="454.2" width="9.6" height="9.6"/><rect x="1168.5" y="455.9" width="9.6" height="9.6"/><path d="M1168.5 451.4L1168.67 453.7V459.3L1168.5 461.7L1168.34 459.3V453.7Z"/><path d="M1168.5 451.4L1168.66 453.4V458.3L1168.5 460.3L1168.35 458.3V453.4Z"/><rect x="1172.2" y="451.1" width="9.6" height="9.6"/><rect x="1171.9" y="445.6" width="9.6" height="9.6"/><rect x="1172.3" y="457.2" width="9.6" height="9.6"/><rect x="1171.6" y="450.2" width="9.6" height="9.6"/><rect x="1171.9" y="452.6" width="9.6" height="9.6"/><rect x="1171.7" y="448.9" width="9.6" height="9.6"/><path d="M1172.0 449.4L1172.17 452.5V460.0L1172.0 463.0L1171.81 460.0V452.5Z"/><path d="M1172.0 451.9L1172.15 454.0V458.9L1172.0 461.0L1171.82 458.9V454.0Z"/><rect x="1175.3" y="449.9" width="9.6" height="9.6"/><rect x="1175.1" y="454.5" width="9.6" height="9.6"/><rect x="1175.6" y="450.5" width="9.6" height="9.6"/><rect x="1175.8" y="459.1" width="9.6" height="9.6"/><rect x="1174.9" y="447.8" width="9.6" height="9.6"/><rect x="1175.1" y="445.5" width="9.6" height="9.6"/><path d="M1175.0 451.9L1175.13 454.8V462.0L1175.0 464.9L1174.90 462.0V454.8Z"/><path d="M1175.0 452.6L1175.12 454.8V460.1L1175.0 462.2L1174.91 460.1V454.8Z"/><rect x="1178.2" y="465.2" width="9.6" height="9.6"/><rect x="1178.0" y="449.2" width="9.6" height="9.6"/><rect x="1178.8" y="446.7" width="9.6" height="9.6"/><rect x="1178.5" y="450.6" width="9.6" height="9.6"/><rect x="1178.2" y="447.8" width="9.6" height="9.6"/><rect x="1179.2" y="453.1" width="9.6" height="9.6"/><rect x="1178.7" y="451.6" width="9.6" height="9.6"/><path d="M1179.0 450.5L1179.10 452.4V457.0L1179.0 458.9L1178.86 457.0V452.4Z"/><path d="M1179.0 450.5L1179.09 452.4V457.0L1179.0 458.9L1178.87 457.0V452.4Z"/><rect x="1182.0" y="447.8" width="9.6" height="9.6"/><rect x="1181.7" y="448.5" width="9.6" height="9.6"/><rect x="1182.8" y="446.7" width="9.6" height="9.6"/><rect x="1182.4" y="447.3" width="9.6" height="9.6"/><rect x="1181.9" y="452.4" width="9.6" height="9.6"/><rect x="1181.1" y="454.1" width="9.6" height="9.6"/><path d="M1182.0 451.7L1182.09 453.5V458.1L1182.0 459.9L1181.90 458.1V453.5Z"/><path d="M1182.0 452.9L1182.08 454.5V458.4L1182.0 459.9L1181.90 458.4V454.5Z"/><rect x="1185.2" y="432.2" width="9.6" height="9.6"/><rect x="1185.4" y="451.7" width="9.6" height="9.6"/><rect x="1185.9" y="448.6" width="9.6" height="9.6"/><rect x="1185.4" y="451.0" width="9.6" height="9.6"/><rect x="1185.4" y="450.8" width="9.6" height="9.6"/><rect x="1185.1" y="457.4" width="9.6" height="9.6"/><rect x="1185.6" y="445.8" width="9.6" height="9.6"/><path d="M1185.0 449.6L1185.11 452.6V460.2L1185.0 463.2L1184.82 460.2V452.6Z"/><path d="M1185.0 451.1L1185.10 453.0V457.6L1185.0 459.5L1184.83 457.6V453.0Z"/><rect x="1188.4" y="449.1" width="9.6" height="9.6"/><rect x="1187.9" y="455.5" width="9.6" height="9.6"/><rect x="1188.5" y="456.5" width="9.6" height="9.6"/><rect x="1188.3" y="459.3" width="9.6" height="9.6"/><rect x="1188.4" y="452.2" width="9.6" height="9.6"/><rect x="1188.7" y="448.1" width="9.6" height="9.6"/><path d="M1188.6 452.5L1188.73 455.3V462.2L1188.6 465.1L1188.45 462.2V455.3Z"/><path d="M1188.6 453.3L1188.72 455.6V461.5L1188.6 463.9L1188.46 461.5V455.6Z"/><rect x="1191.9" y="452.8" width="9.6" height="9.6"/><rect x="1192.1" y="455.5" width="9.6" height="9.6"/><rect x="1191.4" y="460.0" width="9.6" height="9.6"/><rect x="1191.9" y="464.8" width="9.6" height="9.6"/><rect x="1191.2" y="460.5" width="9.6" height="9.6"/><rect x="1191.5" y="450.3" width="9.6" height="9.6"/><path d="M1192.2 454.1L1192.36 457.8V466.9L1192.2 470.6L1192.07 466.9V457.8Z"/><path d="M1192.2 456.4L1192.35 458.3V463.1L1192.2 465.1L1192.08 463.1V458.3Z"/><rect x="1194.7" y="458.0" width="9.6" height="9.6"/><rect x="1194.8" y="446.2" width="9.6" height="9.6"/><rect x="1195.1" y="444.7" width="9.6" height="9.6"/><rect x="1195.8" y="444.3" width="9.6" height="9.6"/><rect x="1194.8" y="455.6" width="9.6" height="9.6"/><rect x="1195.2" y="455.2" width="9.6" height="9.6"/><path d="M1195.3 448.1L1195.44 451.7V460.3L1195.3 463.8L1195.20 460.3V451.7Z"/><path d="M1195.3 451.1L1195.43 453.1V458.0L1195.3 460.0L1195.21 458.0V453.1Z"/><rect x="1198.6" y="451.9" width="9.6" height="9.6"/><rect x="1198.4" y="451.9" width="9.6" height="9.6"/><rect x="1198.3" y="454.5" width="9.6" height="9.6"/><rect x="1198.9" y="454.8" width="9.6" height="9.6"/><rect x="1198.5" y="447.8" width="9.6" height="9.6"/><rect x="1199.1" y="456.8" width="9.6" height="9.6"/><path d="M1199.0 451.6L1199.15 454.1V460.2L1199.0 462.6L1198.81 460.2V454.1Z"/><path d="M1199.0 454.5L1199.13 456.3V460.8L1199.0 462.6L1198.83 460.8V456.3Z"/><rect x="1201.8" y="444.6" width="9.6" height="9.6"/><rect x="1201.4" y="452.4" width="9.6" height="9.6"/><rect x="1201.7" y="451.2" width="9.6" height="9.6"/><rect x="1202.1" y="449.3" width="9.6" height="9.6"/><rect x="1201.7" y="450.2" width="9.6" height="9.6"/><rect x="1201.6" y="452.3" width="9.6" height="9.6"/><path d="M1201.6 448.9L1201.74 451.0V456.1L1201.6 458.2L1201.49 456.1V451.0Z"/><path d="M1201.6 451.7L1201.74 453.2V456.7L1201.6 458.2L1201.50 456.7V453.2Z"/><rect x="1205.3" y="448.7" width="9.6" height="9.6"/><rect x="1205.1" y="453.6" width="9.6" height="9.6"/><rect x="1205.2" y="451.0" width="9.6" height="9.6"/><rect x="1204.9" y="452.5" width="9.6" height="9.6"/><rect x="1204.5" y="452.0" width="9.6" height="9.6"/><rect x="1205.2" y="446.3" width="9.6" height="9.6"/><path d="M1205.0 450.1L1205.15 452.2V457.3L1205.0 459.4L1204.83 457.3V452.2Z"/><path d="M1205.0 451.7L1205.14 453.4V457.6L1205.0 459.4L1204.84 457.6V453.4Z"/><rect x="1208.5" y="449.6" width="9.6" height="9.6"/><rect x="1208.8" y="452.4" width="9.6" height="9.6"/><rect x="1208.2" y="457.5" width="9.6" height="9.6"/><rect x="1208.6" y="451.4" width="9.6" height="9.6"/><rect x="1208.5" y="444.8" width="9.6" height="9.6"/><rect x="1207.9" y="454.8" width="9.6" height="9.6"/><path d="M1208.3 448.6L1208.38 451.9V460.0L1208.3 463.3L1208.13 460.0V451.9Z"/><path d="M1208.3 450.8L1208.37 453.2V458.8L1208.3 461.1L1208.14 458.8V453.2Z"/><rect x="1211.8" y="445.6" width="9.6" height="9.6"/><rect x="1212.5" y="451.9" width="9.6" height="9.6"/><rect x="1212.0" y="453.0" width="9.6" height="9.6"/><rect x="1211.5" y="450.9" width="9.6" height="9.6"/><rect x="1211.7" y="461.5" width="9.6" height="9.6"/><rect x="1211.5" y="451.5" width="9.6" height="9.6"/><path d="M1211.9 451.9L1211.98 455.1V462.8L1211.9 466.0L1211.76 462.8V455.1Z"/><path d="M1211.9 452.8L1211.97 455.0V460.5L1211.9 462.7L1211.76 460.5V455.0Z"/><rect x="1215.4" y="456.0" width="9.6" height="9.6"/><rect x="1215.1" y="447.6" width="9.6" height="9.6"/><rect x="1215.0" y="452.7" width="9.6" height="9.6"/><rect x="1215.2" y="449.1" width="9.6" height="9.6"/><rect x="1215.2" y="447.9" width="9.6" height="9.6"/><rect x="1214.9" y="455.6" width="9.6" height="9.6"/><path d="M1215.1 451.4L1215.26 453.7V459.5L1215.1 461.8L1215.01 459.5V453.7Z"/><path d="M1215.1 451.4L1215.25 453.3V458.0L1215.1 459.9L1215.01 458.0V453.3Z"/><rect x="1215.2" y="429.2" width="9.6" height="9.6"/><rect x="1218.4" y="446.3" width="9.6" height="9.6"/><rect x="1218.7" y="453.4" width="9.6" height="9.6"/><rect x="1218.0" y="450.4" width="9.6" height="9.6"/><rect x="1218.5" y="443.1" width="9.6" height="9.6"/><rect x="1218.2" y="452.6" width="9.6" height="9.6"/><rect x="1218.4" y="457.1" width="9.6" height="9.6"/><path d="M1218.5 446.9L1218.62 450.5V459.3L1218.5 462.9L1218.37 459.3V450.5Z"/><path d="M1218.5 447.2L1218.61 449.6V455.4L1218.5 457.7L1218.38 455.4V449.6Z"/><rect x="1221.5" y="457.3" width="9.6" height="9.6"/><rect x="1221.7" y="448.5" width="9.6" height="9.6"/><rect x="1221.9" y="454.4" width="9.6" height="9.6"/><rect x="1221.7" y="452.7" width="9.6" height="9.6"/><rect x="1221.7" y="460.3" width="9.6" height="9.6"/><rect x="1221.9" y="446.8" width="9.6" height="9.6"/><path d="M1221.8 450.6L1221.88 454.1V462.6L1221.8 466.1L1221.68 462.6V454.1Z"/><path d="M1221.8 455.5L1221.88 457.3V461.6L1221.8 463.4L1221.69 461.6V457.3Z"/><rect x="1224.8" y="443.2" width="9.6" height="9.6"/><rect x="1225.4" y="453.0" width="9.6" height="9.6"/><rect x="1225.0" y="443.8" width="9.6" height="9.6"/><rect x="1225.1" y="456.0" width="9.6" height="9.6"/><rect x="1225.0" y="447.0" width="9.6" height="9.6"/><rect x="1224.6" y="449.6" width="9.6" height="9.6"/><path d="M1225.2 447.0L1225.29 450.3V458.4L1225.2 461.8L1225.03 458.4V450.3Z"/><path d="M1225.2 449.1L1225.28 451.4V457.0L1225.2 459.4L1225.04 457.0V451.4Z"/><rect x="1229.1" y="451.7" width="9.6" height="9.6"/><rect x="1228.1" y="453.2" width="9.6" height="9.6"/><rect x="1228.2" y="447.2" width="9.6" height="9.6"/><rect x="1228.6" y="449.6" width="9.6" height="9.6"/><rect x="1228.2" y="451.5" width="9.6" height="9.6"/><rect x="1228.7" y="447.6" width="9.6" height="9.6"/><path d="M1228.3 451.0L1228.48 452.8V457.2L1228.3 459.0L1228.18 457.2V452.8Z"/><path d="M1228.3 451.0L1228.47 452.8V457.2L1228.3 459.0L1228.19 457.2V452.8Z"/><rect x="1232.1" y="461.6" width="9.6" height="9.6"/><rect x="1231.6" y="453.9" width="9.6" height="9.6"/><rect x="1232.0" y="455.7" width="9.6" height="9.6"/><rect x="1231.6" y="459.4" width="9.6" height="9.6"/><rect x="1232.1" y="452.3" width="9.6" height="9.6"/><rect x="1231.7" y="445.9" width="9.6" height="9.6"/><path d="M1231.7 450.8L1231.79 454.2V462.6L1231.7 466.0L1231.63 462.6V454.2Z"/><path d="M1231.7 454.8L1231.78 456.6V461.1L1231.7 463.0L1231.64 461.1V456.6Z"/><rect x="1234.8" y="450.5" width="9.6" height="9.6"/><rect x="1235.1" y="454.8" width="9.6" height="9.6"/><rect x="1235.0" y="446.2" width="9.6" height="9.6"/><rect x="1235.0" y="454.2" width="9.6" height="9.6"/><rect x="1235.3" y="455.7" width="9.6" height="9.6"/><rect x="1235.2" y="449.7" width="9.6" height="9.6"/><path d="M1235.2 450.0L1235.30 452.6V458.9L1235.2 461.5L1235.15 458.9V452.6Z"/><path d="M1235.2 451.9L1235.30 453.7V458.0L1235.2 459.8L1235.15 458.0V453.7Z"/><rect x="1238.5" y="442.2" width="9.6" height="9.6"/><rect x="1239.1" y="453.5" width="9.6" height="9.6"/><rect x="1238.1" y="441.9" width="9.6" height="9.6"/><rect x="1238.3" y="453.2" width="9.6" height="9.6"/><rect x="1238.7" y="449.3" width="9.6" height="9.6"/><rect x="1238.5" y="449.6" width="9.6" height="9.6"/><path d="M1238.4 445.7L1238.54 448.8V456.3L1238.4 459.3L1238.35 456.3V448.8Z"/><path d="M1238.4 447.4L1238.53 449.9V455.9L1238.4 458.4L1238.36 455.9V449.9Z"/><rect x="1242.0" y="456.3" width="9.6" height="9.6"/><rect x="1241.9" y="450.1" width="9.6" height="9.6"/><rect x="1241.5" y="459.6" width="9.6" height="9.6"/><rect x="1241.4" y="457.0" width="9.6" height="9.6"/><rect x="1241.4" y="447.1" width="9.6" height="9.6"/><rect x="1241.9" y="452.6" width="9.6" height="9.6"/><path d="M1241.9 450.9L1241.99 454.2V462.2L1241.9 465.4L1241.84 462.2V454.2Z"/><path d="M1241.9 450.9L1241.98 453.2V458.7L1241.9 460.9L1241.85 458.7V453.2Z"/><rect x="1245.2" y="441.9" width="9.6" height="9.6"/><rect x="1244.5" y="443.1" width="9.6" height="9.6"/><rect x="1244.8" y="435.5" width="9.6" height="9.6"/><rect x="1245.4" y="439.9" width="9.6" height="9.6"/><rect x="1245.3" y="438.5" width="9.6" height="9.6"/><rect x="1244.7" y="446.8" width="9.6" height="9.6"/><path d="M1244.8 439.3L1244.86 442.3V449.6L1244.8 452.6L1244.71 449.6V442.3Z"/><path d="M1244.8 445.8L1244.85 447.4V451.1L1244.8 452.6L1244.71 451.1V447.4Z"/><rect x="1247.2" y="440.2" width="9.6" height="9.6"/><rect x="1247.2" y="450.2" width="9.6" height="9.6"/></g>
<g fill="#00f000" stroke="rgba(0,0,0,0.25)" stroke-width="0.5"><path d="M1163.0 76.0H1175.0L1169.0 82.9Z"/><path d="M1194.6 151.8H1203.4L1199.0 156.9Z"/><path d="M1198.0 151.8H1206.8L1202.4 156.9Z"/><path d="M1204.3 151.8H1213.1L1208.7 156.9Z"/><path d="M1211.0 151.8H1219.8L1215.4 156.9Z"/></g>
</svg>
<div class="yl" style="top:70.8px">5.0</div>
<div class="yl" style="top:108.3px">5.5</div>
<div class="yl" style="top:145.9px">6.0</div>
<div class="yl" style="top:183.4px">6.5</div>
<div class="yl" style="top:221.0px">7.0</div>
<div class="yl" style="top:258.5px">7.5</div>
<div class="yl" style="top:296.0px">8.0</div>
<div class="yl" style="top:333.6px">8.5</div>
<div class="yl" style="top:371.1px">9.0</div>
<div class="yl" style="top:408.7px">9.5</div>
<div class="yl" style="top:446.2px">10.0</div>
<div class="yl" style="top:483.7px">10.5</div>
<div class="yl" style="top:521.3px">11.0</div>
<div class="xl" style="left:193.6px">2024/02/01</div>
<div class="xl" style="left:289.9px">2024/03/01</div>
<div class="xl" style="left:392.9px">2024/04/01</div>
<div class="xl" style="left:492.6px">2024/05/01</div>
<div class="xl" style="left:595.6px">2024/06/01</div>
<div class="xl" style="left:695.3px">2024/07/01</div>
<div class="xl" style="left:798.3px">2024/08/01</div>
<div class="xl" style="left:901.3px">2024/09/01</div>
<div class="xl" style="left:1000.9px">2024/10/01</div>
<div class="xl" style="left:1103.9px">2024/11/01</div>
<div class="xl" style="left:1203.6px">2024/12/01</div>
<div style="position:absolute;left:30.1px;top:302.8px;width:0;height:0"><div style="position:absolute;left:0;top:0;transform:translate(-50%,-50%) rotate(-90deg);font-size:15px;line-height:16px;white-space:nowrap">Magnitude</div></div>
<div style="position:absolute;left:0;width:1280px;top:579px;text-align:center;font-weight:bold;font-size:15px;line-height:17px">U.T.C. Calendar Date</div>
</body></html>
